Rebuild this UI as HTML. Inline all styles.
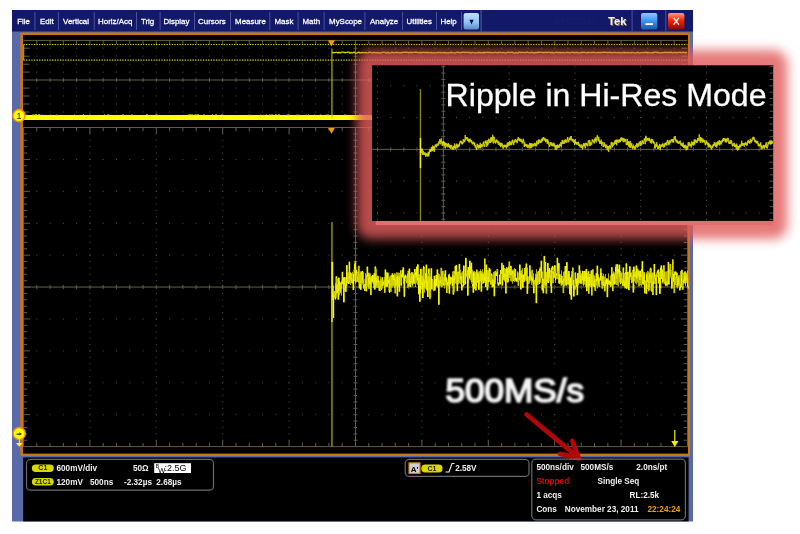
<!DOCTYPE html><html><head><meta charset="utf-8"><style>html,body{margin:0;padding:0;width:800px;height:534px;overflow:hidden;background:#fff}</style></head><body><svg width="800" height="534" viewBox="0 0 800 534" style="position:absolute;left:0;top:0;filter:blur(0.5px)">
<defs>
<linearGradient id="gdrop" x1="0" y1="0" x2="0" y2="1"><stop offset="0" stop-color="#c4e0fc"/><stop offset="0.6" stop-color="#88c0f4"/><stop offset="1" stop-color="#5a88c0"/></linearGradient>
<linearGradient id="gmin" x1="0" y1="0" x2="0" y2="1"><stop offset="0" stop-color="#90c8ff"/><stop offset="0.5" stop-color="#3a94f0"/><stop offset="1" stop-color="#2058a8"/></linearGradient>
<linearGradient id="gclose" x1="0" y1="0" x2="0" y2="1"><stop offset="0" stop-color="#ff9a88"/><stop offset="0.45" stop-color="#f02808"/><stop offset="1" stop-color="#900800"/></linearGradient>
<filter id="blur1" x="-50%" y="-50%" width="200%" height="200%"><feGaussianBlur stdDeviation="5.5"/></filter>
<filter id="soft" x="-10%" y="-30%" width="120%" height="160%"><feGaussianBlur stdDeviation="0.6"/></filter>
<filter id="glowtxt" x="-10%" y="-30%" width="120%" height="160%"><feGaussianBlur in="SourceGraphic" stdDeviation="0.9"/></filter>
</defs>
<rect x="0" y="0" width="800" height="534" fill="#ffffff"/>
<rect x="12" y="31" width="681" height="490.5" fill="#5a6aa8"/>
<rect x="20.3" y="32.5" width="669.7" height="423.4" rx="1.5" fill="#c97510"/>
<rect x="23" y="35" width="665" height="418.6" fill="#000"/>
<rect x="23.2" y="457.4" width="665.4" height="64" fill="#000"/>
<rect x="12" y="10" width="681" height="21.5" fill="#131968"/>
<rect x="34.4" y="12" width="1" height="18" fill="#4a52a0"/>
<rect x="57.9" y="12" width="1" height="18" fill="#4a52a0"/>
<rect x="93.7" y="12" width="1" height="18" fill="#4a52a0"/>
<rect x="136" y="12" width="1" height="18" fill="#4a52a0"/>
<rect x="159.6" y="12" width="1" height="18" fill="#4a52a0"/>
<rect x="194" y="12" width="1" height="18" fill="#4a52a0"/>
<rect x="230" y="12" width="1" height="18" fill="#4a52a0"/>
<rect x="269.3" y="12" width="1" height="18" fill="#4a52a0"/>
<rect x="297.6" y="12" width="1" height="18" fill="#4a52a0"/>
<rect x="323.6" y="12" width="1" height="18" fill="#4a52a0"/>
<rect x="364.4" y="12" width="1" height="18" fill="#4a52a0"/>
<rect x="402" y="12" width="1" height="18" fill="#4a52a0"/>
<rect x="436" y="12" width="1" height="18" fill="#4a52a0"/>
<rect x="461" y="12" width="1" height="18" fill="#4a52a0"/>
<text x="17.3" y="23.8" font-family="Liberation Sans" font-size="7.9" fill="#ffffff" stroke="#ffffff" stroke-width="0.28">File</text>
<text x="40" y="23.8" font-family="Liberation Sans" font-size="7.9" fill="#ffffff" stroke="#ffffff" stroke-width="0.28">Edit</text>
<text x="63.1" y="23.8" font-family="Liberation Sans" font-size="7.9" fill="#ffffff" stroke="#ffffff" stroke-width="0.28">Vertical</text>
<text x="98.1" y="23.8" font-family="Liberation Sans" font-size="7.9" fill="#ffffff" stroke="#ffffff" stroke-width="0.28">Horiz/Acq</text>
<text x="140.9" y="23.8" font-family="Liberation Sans" font-size="7.9" fill="#ffffff" stroke="#ffffff" stroke-width="0.28">Trig</text>
<text x="163.5" y="23.8" font-family="Liberation Sans" font-size="7.9" fill="#ffffff" stroke="#ffffff" stroke-width="0.28">Display</text>
<text x="198.1" y="23.8" font-family="Liberation Sans" font-size="7.9" fill="#ffffff" stroke="#ffffff" stroke-width="0.28">Cursors</text>
<text x="235.1" y="23.8" font-family="Liberation Sans" font-size="7.9" fill="#ffffff" stroke="#ffffff" stroke-width="0.28">Measure</text>
<text x="274.5" y="23.8" font-family="Liberation Sans" font-size="7.9" fill="#ffffff" stroke="#ffffff" stroke-width="0.28">Mask</text>
<text x="302.5" y="23.8" font-family="Liberation Sans" font-size="7.9" fill="#ffffff" stroke="#ffffff" stroke-width="0.28">Math</text>
<text x="329.1" y="23.8" font-family="Liberation Sans" font-size="7.9" fill="#ffffff" stroke="#ffffff" stroke-width="0.28">MyScope</text>
<text x="370.1" y="23.8" font-family="Liberation Sans" font-size="7.9" fill="#ffffff" stroke="#ffffff" stroke-width="0.28">Analyze</text>
<text x="406.5" y="23.8" font-family="Liberation Sans" font-size="7.9" fill="#ffffff" stroke="#ffffff" stroke-width="0.28">Utilities</text>
<text x="440.5" y="23.8" font-family="Liberation Sans" font-size="7.9" fill="#ffffff" stroke="#ffffff" stroke-width="0.28">Help</text>
<rect x="463.6" y="13" width="15.4" height="16.6" rx="2" fill="url(#gdrop)"/>
<path d="M469.4 19.8 L473.6 19.8 L471.5 24.4 Z" fill="#000050"/>
<rect x="480.6" y="10" width="1" height="21.5" fill="#5a60a8"/>
<text x="554.5" y="24.2" font-family="Liberation Sans" font-size="9.5" font-weight="bold" fill="#171d6c" textLength="43" lengthAdjust="spacingAndGlyphs">DPO7354C</text>
<text x="608.9" y="25.6" font-family="Liberation Sans" font-size="11.2" font-weight="bold" fill="#8a7050">Tek</text>
<text x="608" y="24.7" font-family="Liberation Sans" font-size="11.2" font-weight="bold" fill="#f4f4f4">Tek</text>
<rect x="631.6" y="10" width="1" height="21.5" fill="#4a52a0"/>
<rect x="665.3" y="10" width="1" height="21.5" fill="#4a52a0"/>
<rect x="641" y="12.9" width="16.3" height="16.5" rx="2" fill="url(#gmin)"/>
<rect x="645.5" y="23.2" width="7.5" height="1.8" fill="#fff"/>
<rect x="668" y="12.9" width="16.4" height="16.5" rx="2" fill="url(#gclose)"/>
<path d="M673.6 17.8 L678.8 24.6 M678.8 17.8 L673.6 24.6" stroke="#fff" stroke-width="1.3"/>
<g fill="#625d4b">
<rect x="23.5" y="39.9" width="664.0" height="1"/>
<rect x="23.5" y="79.5" width="664.0" height="1"/>
<rect x="36.28" y="40.4" width="1" height="3.5"/>
<rect x="36.28" y="78" width="1" height="4"/>
<rect x="36.28" y="47.7" width="1" height="1" fill="#57533f"/>
<rect x="36.28" y="55.7" width="1" height="1" fill="#57533f"/>
<rect x="36.28" y="63.7" width="1" height="1" fill="#57533f"/>
<rect x="36.28" y="71.6" width="1" height="1" fill="#57533f"/>
<rect x="36.28" y="87.6" width="1" height="1" fill="#57533f"/>
<rect x="36.28" y="95.5" width="1" height="1" fill="#57533f"/>
<rect x="36.28" y="103.5" width="1" height="1" fill="#57533f"/>
<rect x="36.28" y="111.5" width="1" height="1" fill="#57533f"/>
<rect x="49.56" y="40.4" width="1" height="3.5"/>
<rect x="49.56" y="78" width="1" height="4"/>
<rect x="49.56" y="47.7" width="1" height="1" fill="#57533f"/>
<rect x="49.56" y="55.7" width="1" height="1" fill="#57533f"/>
<rect x="49.56" y="63.7" width="1" height="1" fill="#57533f"/>
<rect x="49.56" y="71.6" width="1" height="1" fill="#57533f"/>
<rect x="49.56" y="87.6" width="1" height="1" fill="#57533f"/>
<rect x="49.56" y="95.5" width="1" height="1" fill="#57533f"/>
<rect x="49.56" y="103.5" width="1" height="1" fill="#57533f"/>
<rect x="49.56" y="111.5" width="1" height="1" fill="#57533f"/>
<rect x="62.84" y="40.4" width="1" height="3.5"/>
<rect x="62.84" y="78" width="1" height="4"/>
<rect x="62.84" y="47.7" width="1" height="1" fill="#57533f"/>
<rect x="62.84" y="55.7" width="1" height="1" fill="#57533f"/>
<rect x="62.84" y="63.7" width="1" height="1" fill="#57533f"/>
<rect x="62.84" y="71.6" width="1" height="1" fill="#57533f"/>
<rect x="62.84" y="87.6" width="1" height="1" fill="#57533f"/>
<rect x="62.84" y="95.5" width="1" height="1" fill="#57533f"/>
<rect x="62.84" y="103.5" width="1" height="1" fill="#57533f"/>
<rect x="62.84" y="111.5" width="1" height="1" fill="#57533f"/>
<rect x="76.12" y="40.4" width="1" height="3.5"/>
<rect x="76.12" y="78" width="1" height="4"/>
<rect x="76.12" y="47.7" width="1" height="1" fill="#57533f"/>
<rect x="76.12" y="55.7" width="1" height="1" fill="#57533f"/>
<rect x="76.12" y="63.7" width="1" height="1" fill="#57533f"/>
<rect x="76.12" y="71.6" width="1" height="1" fill="#57533f"/>
<rect x="76.12" y="87.6" width="1" height="1" fill="#57533f"/>
<rect x="76.12" y="95.5" width="1" height="1" fill="#57533f"/>
<rect x="76.12" y="103.5" width="1" height="1" fill="#57533f"/>
<rect x="76.12" y="111.5" width="1" height="1" fill="#57533f"/>
<rect x="89.4" y="40.4" width="1" height="5"/>
<rect x="89.4" y="78" width="1" height="4"/>
<rect x="89.4" y="47.7" width="1" height="1" fill="#57533f"/>
<rect x="89.4" y="55.7" width="1" height="1" fill="#57533f"/>
<rect x="89.4" y="63.7" width="1" height="1" fill="#57533f"/>
<rect x="89.4" y="71.6" width="1" height="1" fill="#57533f"/>
<rect x="89.4" y="87.6" width="1" height="1" fill="#57533f"/>
<rect x="89.4" y="95.5" width="1" height="1" fill="#57533f"/>
<rect x="89.4" y="103.5" width="1" height="1" fill="#57533f"/>
<rect x="89.4" y="111.5" width="1" height="1" fill="#57533f"/>
<rect x="102.68" y="40.4" width="1" height="3.5"/>
<rect x="102.68" y="78" width="1" height="4"/>
<rect x="102.68" y="47.7" width="1" height="1" fill="#57533f"/>
<rect x="102.68" y="55.7" width="1" height="1" fill="#57533f"/>
<rect x="102.68" y="63.7" width="1" height="1" fill="#57533f"/>
<rect x="102.68" y="71.6" width="1" height="1" fill="#57533f"/>
<rect x="102.68" y="87.6" width="1" height="1" fill="#57533f"/>
<rect x="102.68" y="95.5" width="1" height="1" fill="#57533f"/>
<rect x="102.68" y="103.5" width="1" height="1" fill="#57533f"/>
<rect x="102.68" y="111.5" width="1" height="1" fill="#57533f"/>
<rect x="115.96" y="40.4" width="1" height="3.5"/>
<rect x="115.96" y="78" width="1" height="4"/>
<rect x="115.96" y="47.7" width="1" height="1" fill="#57533f"/>
<rect x="115.96" y="55.7" width="1" height="1" fill="#57533f"/>
<rect x="115.96" y="63.7" width="1" height="1" fill="#57533f"/>
<rect x="115.96" y="71.6" width="1" height="1" fill="#57533f"/>
<rect x="115.96" y="87.6" width="1" height="1" fill="#57533f"/>
<rect x="115.96" y="95.5" width="1" height="1" fill="#57533f"/>
<rect x="115.96" y="103.5" width="1" height="1" fill="#57533f"/>
<rect x="115.96" y="111.5" width="1" height="1" fill="#57533f"/>
<rect x="129.24" y="40.4" width="1" height="3.5"/>
<rect x="129.24" y="78" width="1" height="4"/>
<rect x="129.24" y="47.7" width="1" height="1" fill="#57533f"/>
<rect x="129.24" y="55.7" width="1" height="1" fill="#57533f"/>
<rect x="129.24" y="63.7" width="1" height="1" fill="#57533f"/>
<rect x="129.24" y="71.6" width="1" height="1" fill="#57533f"/>
<rect x="129.24" y="87.6" width="1" height="1" fill="#57533f"/>
<rect x="129.24" y="95.5" width="1" height="1" fill="#57533f"/>
<rect x="129.24" y="103.5" width="1" height="1" fill="#57533f"/>
<rect x="129.24" y="111.5" width="1" height="1" fill="#57533f"/>
<rect x="142.52" y="40.4" width="1" height="3.5"/>
<rect x="142.52" y="78" width="1" height="4"/>
<rect x="142.52" y="47.7" width="1" height="1" fill="#57533f"/>
<rect x="142.52" y="55.7" width="1" height="1" fill="#57533f"/>
<rect x="142.52" y="63.7" width="1" height="1" fill="#57533f"/>
<rect x="142.52" y="71.6" width="1" height="1" fill="#57533f"/>
<rect x="142.52" y="87.6" width="1" height="1" fill="#57533f"/>
<rect x="142.52" y="95.5" width="1" height="1" fill="#57533f"/>
<rect x="142.52" y="103.5" width="1" height="1" fill="#57533f"/>
<rect x="142.52" y="111.5" width="1" height="1" fill="#57533f"/>
<rect x="155.8" y="40.4" width="1" height="5"/>
<rect x="155.8" y="78" width="1" height="4"/>
<rect x="155.8" y="47.7" width="1" height="1" fill="#57533f"/>
<rect x="155.8" y="55.7" width="1" height="1" fill="#57533f"/>
<rect x="155.8" y="63.7" width="1" height="1" fill="#57533f"/>
<rect x="155.8" y="71.6" width="1" height="1" fill="#57533f"/>
<rect x="155.8" y="87.6" width="1" height="1" fill="#57533f"/>
<rect x="155.8" y="95.5" width="1" height="1" fill="#57533f"/>
<rect x="155.8" y="103.5" width="1" height="1" fill="#57533f"/>
<rect x="155.8" y="111.5" width="1" height="1" fill="#57533f"/>
<rect x="169.08" y="40.4" width="1" height="3.5"/>
<rect x="169.08" y="78" width="1" height="4"/>
<rect x="169.08" y="47.7" width="1" height="1" fill="#57533f"/>
<rect x="169.08" y="55.7" width="1" height="1" fill="#57533f"/>
<rect x="169.08" y="63.7" width="1" height="1" fill="#57533f"/>
<rect x="169.08" y="71.6" width="1" height="1" fill="#57533f"/>
<rect x="169.08" y="87.6" width="1" height="1" fill="#57533f"/>
<rect x="169.08" y="95.5" width="1" height="1" fill="#57533f"/>
<rect x="169.08" y="103.5" width="1" height="1" fill="#57533f"/>
<rect x="169.08" y="111.5" width="1" height="1" fill="#57533f"/>
<rect x="182.36" y="40.4" width="1" height="3.5"/>
<rect x="182.36" y="78" width="1" height="4"/>
<rect x="182.36" y="47.7" width="1" height="1" fill="#57533f"/>
<rect x="182.36" y="55.7" width="1" height="1" fill="#57533f"/>
<rect x="182.36" y="63.7" width="1" height="1" fill="#57533f"/>
<rect x="182.36" y="71.6" width="1" height="1" fill="#57533f"/>
<rect x="182.36" y="87.6" width="1" height="1" fill="#57533f"/>
<rect x="182.36" y="95.5" width="1" height="1" fill="#57533f"/>
<rect x="182.36" y="103.5" width="1" height="1" fill="#57533f"/>
<rect x="182.36" y="111.5" width="1" height="1" fill="#57533f"/>
<rect x="195.64" y="40.4" width="1" height="3.5"/>
<rect x="195.64" y="78" width="1" height="4"/>
<rect x="195.64" y="47.7" width="1" height="1" fill="#57533f"/>
<rect x="195.64" y="55.7" width="1" height="1" fill="#57533f"/>
<rect x="195.64" y="63.7" width="1" height="1" fill="#57533f"/>
<rect x="195.64" y="71.6" width="1" height="1" fill="#57533f"/>
<rect x="195.64" y="87.6" width="1" height="1" fill="#57533f"/>
<rect x="195.64" y="95.5" width="1" height="1" fill="#57533f"/>
<rect x="195.64" y="103.5" width="1" height="1" fill="#57533f"/>
<rect x="195.64" y="111.5" width="1" height="1" fill="#57533f"/>
<rect x="208.92" y="40.4" width="1" height="3.5"/>
<rect x="208.92" y="78" width="1" height="4"/>
<rect x="208.92" y="47.7" width="1" height="1" fill="#57533f"/>
<rect x="208.92" y="55.7" width="1" height="1" fill="#57533f"/>
<rect x="208.92" y="63.7" width="1" height="1" fill="#57533f"/>
<rect x="208.92" y="71.6" width="1" height="1" fill="#57533f"/>
<rect x="208.92" y="87.6" width="1" height="1" fill="#57533f"/>
<rect x="208.92" y="95.5" width="1" height="1" fill="#57533f"/>
<rect x="208.92" y="103.5" width="1" height="1" fill="#57533f"/>
<rect x="208.92" y="111.5" width="1" height="1" fill="#57533f"/>
<rect x="222.2" y="40.4" width="1" height="5"/>
<rect x="222.2" y="78" width="1" height="4"/>
<rect x="222.2" y="47.7" width="1" height="1" fill="#57533f"/>
<rect x="222.2" y="55.7" width="1" height="1" fill="#57533f"/>
<rect x="222.2" y="63.7" width="1" height="1" fill="#57533f"/>
<rect x="222.2" y="71.6" width="1" height="1" fill="#57533f"/>
<rect x="222.2" y="87.6" width="1" height="1" fill="#57533f"/>
<rect x="222.2" y="95.5" width="1" height="1" fill="#57533f"/>
<rect x="222.2" y="103.5" width="1" height="1" fill="#57533f"/>
<rect x="222.2" y="111.5" width="1" height="1" fill="#57533f"/>
<rect x="235.48" y="40.4" width="1" height="3.5"/>
<rect x="235.48" y="78" width="1" height="4"/>
<rect x="235.48" y="47.7" width="1" height="1" fill="#57533f"/>
<rect x="235.48" y="55.7" width="1" height="1" fill="#57533f"/>
<rect x="235.48" y="63.7" width="1" height="1" fill="#57533f"/>
<rect x="235.48" y="71.6" width="1" height="1" fill="#57533f"/>
<rect x="235.48" y="87.6" width="1" height="1" fill="#57533f"/>
<rect x="235.48" y="95.5" width="1" height="1" fill="#57533f"/>
<rect x="235.48" y="103.5" width="1" height="1" fill="#57533f"/>
<rect x="235.48" y="111.5" width="1" height="1" fill="#57533f"/>
<rect x="248.76" y="40.4" width="1" height="3.5"/>
<rect x="248.76" y="78" width="1" height="4"/>
<rect x="248.76" y="47.7" width="1" height="1" fill="#57533f"/>
<rect x="248.76" y="55.7" width="1" height="1" fill="#57533f"/>
<rect x="248.76" y="63.7" width="1" height="1" fill="#57533f"/>
<rect x="248.76" y="71.6" width="1" height="1" fill="#57533f"/>
<rect x="248.76" y="87.6" width="1" height="1" fill="#57533f"/>
<rect x="248.76" y="95.5" width="1" height="1" fill="#57533f"/>
<rect x="248.76" y="103.5" width="1" height="1" fill="#57533f"/>
<rect x="248.76" y="111.5" width="1" height="1" fill="#57533f"/>
<rect x="262.04" y="40.4" width="1" height="3.5"/>
<rect x="262.04" y="78" width="1" height="4"/>
<rect x="262.04" y="47.7" width="1" height="1" fill="#57533f"/>
<rect x="262.04" y="55.7" width="1" height="1" fill="#57533f"/>
<rect x="262.04" y="63.7" width="1" height="1" fill="#57533f"/>
<rect x="262.04" y="71.6" width="1" height="1" fill="#57533f"/>
<rect x="262.04" y="87.6" width="1" height="1" fill="#57533f"/>
<rect x="262.04" y="95.5" width="1" height="1" fill="#57533f"/>
<rect x="262.04" y="103.5" width="1" height="1" fill="#57533f"/>
<rect x="262.04" y="111.5" width="1" height="1" fill="#57533f"/>
<rect x="275.32" y="40.4" width="1" height="3.5"/>
<rect x="275.32" y="78" width="1" height="4"/>
<rect x="275.32" y="47.7" width="1" height="1" fill="#57533f"/>
<rect x="275.32" y="55.7" width="1" height="1" fill="#57533f"/>
<rect x="275.32" y="63.7" width="1" height="1" fill="#57533f"/>
<rect x="275.32" y="71.6" width="1" height="1" fill="#57533f"/>
<rect x="275.32" y="87.6" width="1" height="1" fill="#57533f"/>
<rect x="275.32" y="95.5" width="1" height="1" fill="#57533f"/>
<rect x="275.32" y="103.5" width="1" height="1" fill="#57533f"/>
<rect x="275.32" y="111.5" width="1" height="1" fill="#57533f"/>
<rect x="288.6" y="40.4" width="1" height="5"/>
<rect x="288.6" y="78" width="1" height="4"/>
<rect x="288.6" y="47.7" width="1" height="1" fill="#57533f"/>
<rect x="288.6" y="55.7" width="1" height="1" fill="#57533f"/>
<rect x="288.6" y="63.7" width="1" height="1" fill="#57533f"/>
<rect x="288.6" y="71.6" width="1" height="1" fill="#57533f"/>
<rect x="288.6" y="87.6" width="1" height="1" fill="#57533f"/>
<rect x="288.6" y="95.5" width="1" height="1" fill="#57533f"/>
<rect x="288.6" y="103.5" width="1" height="1" fill="#57533f"/>
<rect x="288.6" y="111.5" width="1" height="1" fill="#57533f"/>
<rect x="301.88" y="40.4" width="1" height="3.5"/>
<rect x="301.88" y="78" width="1" height="4"/>
<rect x="301.88" y="47.7" width="1" height="1" fill="#57533f"/>
<rect x="301.88" y="55.7" width="1" height="1" fill="#57533f"/>
<rect x="301.88" y="63.7" width="1" height="1" fill="#57533f"/>
<rect x="301.88" y="71.6" width="1" height="1" fill="#57533f"/>
<rect x="301.88" y="87.6" width="1" height="1" fill="#57533f"/>
<rect x="301.88" y="95.5" width="1" height="1" fill="#57533f"/>
<rect x="301.88" y="103.5" width="1" height="1" fill="#57533f"/>
<rect x="301.88" y="111.5" width="1" height="1" fill="#57533f"/>
<rect x="315.16" y="40.4" width="1" height="3.5"/>
<rect x="315.16" y="78" width="1" height="4"/>
<rect x="315.16" y="47.7" width="1" height="1" fill="#57533f"/>
<rect x="315.16" y="55.7" width="1" height="1" fill="#57533f"/>
<rect x="315.16" y="63.7" width="1" height="1" fill="#57533f"/>
<rect x="315.16" y="71.6" width="1" height="1" fill="#57533f"/>
<rect x="315.16" y="87.6" width="1" height="1" fill="#57533f"/>
<rect x="315.16" y="95.5" width="1" height="1" fill="#57533f"/>
<rect x="315.16" y="103.5" width="1" height="1" fill="#57533f"/>
<rect x="315.16" y="111.5" width="1" height="1" fill="#57533f"/>
<rect x="328.44" y="40.4" width="1" height="3.5"/>
<rect x="328.44" y="78" width="1" height="4"/>
<rect x="328.44" y="47.7" width="1" height="1" fill="#57533f"/>
<rect x="328.44" y="55.7" width="1" height="1" fill="#57533f"/>
<rect x="328.44" y="63.7" width="1" height="1" fill="#57533f"/>
<rect x="328.44" y="71.6" width="1" height="1" fill="#57533f"/>
<rect x="328.44" y="87.6" width="1" height="1" fill="#57533f"/>
<rect x="328.44" y="95.5" width="1" height="1" fill="#57533f"/>
<rect x="328.44" y="103.5" width="1" height="1" fill="#57533f"/>
<rect x="328.44" y="111.5" width="1" height="1" fill="#57533f"/>
<rect x="341.72" y="40.4" width="1" height="3.5"/>
<rect x="341.72" y="78" width="1" height="4"/>
<rect x="341.72" y="47.7" width="1" height="1" fill="#57533f"/>
<rect x="341.72" y="55.7" width="1" height="1" fill="#57533f"/>
<rect x="341.72" y="63.7" width="1" height="1" fill="#57533f"/>
<rect x="341.72" y="71.6" width="1" height="1" fill="#57533f"/>
<rect x="341.72" y="87.6" width="1" height="1" fill="#57533f"/>
<rect x="341.72" y="95.5" width="1" height="1" fill="#57533f"/>
<rect x="341.72" y="103.5" width="1" height="1" fill="#57533f"/>
<rect x="341.72" y="111.5" width="1" height="1" fill="#57533f"/>
<rect x="355" y="40.4" width="1" height="5"/>
<rect x="355" y="78" width="1" height="4"/>
<rect x="355" y="47.7" width="1" height="1" fill="#57533f"/>
<rect x="355" y="55.7" width="1" height="1" fill="#57533f"/>
<rect x="355" y="63.7" width="1" height="1" fill="#57533f"/>
<rect x="355" y="71.6" width="1" height="1" fill="#57533f"/>
<rect x="355" y="87.6" width="1" height="1" fill="#57533f"/>
<rect x="355" y="95.5" width="1" height="1" fill="#57533f"/>
<rect x="355" y="103.5" width="1" height="1" fill="#57533f"/>
<rect x="355" y="111.5" width="1" height="1" fill="#57533f"/>
<rect x="368.28" y="40.4" width="1" height="3.5"/>
<rect x="368.28" y="78" width="1" height="4"/>
<rect x="368.28" y="47.7" width="1" height="1" fill="#57533f"/>
<rect x="368.28" y="55.7" width="1" height="1" fill="#57533f"/>
<rect x="368.28" y="63.7" width="1" height="1" fill="#57533f"/>
<rect x="368.28" y="71.6" width="1" height="1" fill="#57533f"/>
<rect x="368.28" y="87.6" width="1" height="1" fill="#57533f"/>
<rect x="368.28" y="95.5" width="1" height="1" fill="#57533f"/>
<rect x="368.28" y="103.5" width="1" height="1" fill="#57533f"/>
<rect x="368.28" y="111.5" width="1" height="1" fill="#57533f"/>
<rect x="381.56" y="40.4" width="1" height="3.5"/>
<rect x="381.56" y="78" width="1" height="4"/>
<rect x="381.56" y="47.7" width="1" height="1" fill="#57533f"/>
<rect x="381.56" y="55.7" width="1" height="1" fill="#57533f"/>
<rect x="381.56" y="63.7" width="1" height="1" fill="#57533f"/>
<rect x="381.56" y="71.6" width="1" height="1" fill="#57533f"/>
<rect x="381.56" y="87.6" width="1" height="1" fill="#57533f"/>
<rect x="381.56" y="95.5" width="1" height="1" fill="#57533f"/>
<rect x="381.56" y="103.5" width="1" height="1" fill="#57533f"/>
<rect x="381.56" y="111.5" width="1" height="1" fill="#57533f"/>
<rect x="394.84" y="40.4" width="1" height="3.5"/>
<rect x="394.84" y="78" width="1" height="4"/>
<rect x="394.84" y="47.7" width="1" height="1" fill="#57533f"/>
<rect x="394.84" y="55.7" width="1" height="1" fill="#57533f"/>
<rect x="394.84" y="63.7" width="1" height="1" fill="#57533f"/>
<rect x="394.84" y="71.6" width="1" height="1" fill="#57533f"/>
<rect x="394.84" y="87.6" width="1" height="1" fill="#57533f"/>
<rect x="394.84" y="95.5" width="1" height="1" fill="#57533f"/>
<rect x="394.84" y="103.5" width="1" height="1" fill="#57533f"/>
<rect x="394.84" y="111.5" width="1" height="1" fill="#57533f"/>
<rect x="408.12" y="40.4" width="1" height="3.5"/>
<rect x="408.12" y="78" width="1" height="4"/>
<rect x="408.12" y="47.7" width="1" height="1" fill="#57533f"/>
<rect x="408.12" y="55.7" width="1" height="1" fill="#57533f"/>
<rect x="408.12" y="63.7" width="1" height="1" fill="#57533f"/>
<rect x="408.12" y="71.6" width="1" height="1" fill="#57533f"/>
<rect x="408.12" y="87.6" width="1" height="1" fill="#57533f"/>
<rect x="408.12" y="95.5" width="1" height="1" fill="#57533f"/>
<rect x="408.12" y="103.5" width="1" height="1" fill="#57533f"/>
<rect x="408.12" y="111.5" width="1" height="1" fill="#57533f"/>
<rect x="421.4" y="40.4" width="1" height="5"/>
<rect x="421.4" y="78" width="1" height="4"/>
<rect x="421.4" y="47.7" width="1" height="1" fill="#57533f"/>
<rect x="421.4" y="55.7" width="1" height="1" fill="#57533f"/>
<rect x="421.4" y="63.7" width="1" height="1" fill="#57533f"/>
<rect x="421.4" y="71.6" width="1" height="1" fill="#57533f"/>
<rect x="421.4" y="87.6" width="1" height="1" fill="#57533f"/>
<rect x="421.4" y="95.5" width="1" height="1" fill="#57533f"/>
<rect x="421.4" y="103.5" width="1" height="1" fill="#57533f"/>
<rect x="421.4" y="111.5" width="1" height="1" fill="#57533f"/>
<rect x="434.68" y="40.4" width="1" height="3.5"/>
<rect x="434.68" y="78" width="1" height="4"/>
<rect x="434.68" y="47.7" width="1" height="1" fill="#57533f"/>
<rect x="434.68" y="55.7" width="1" height="1" fill="#57533f"/>
<rect x="434.68" y="63.7" width="1" height="1" fill="#57533f"/>
<rect x="434.68" y="71.6" width="1" height="1" fill="#57533f"/>
<rect x="434.68" y="87.6" width="1" height="1" fill="#57533f"/>
<rect x="434.68" y="95.5" width="1" height="1" fill="#57533f"/>
<rect x="434.68" y="103.5" width="1" height="1" fill="#57533f"/>
<rect x="434.68" y="111.5" width="1" height="1" fill="#57533f"/>
<rect x="447.96" y="40.4" width="1" height="3.5"/>
<rect x="447.96" y="78" width="1" height="4"/>
<rect x="447.96" y="47.7" width="1" height="1" fill="#57533f"/>
<rect x="447.96" y="55.7" width="1" height="1" fill="#57533f"/>
<rect x="447.96" y="63.7" width="1" height="1" fill="#57533f"/>
<rect x="447.96" y="71.6" width="1" height="1" fill="#57533f"/>
<rect x="447.96" y="87.6" width="1" height="1" fill="#57533f"/>
<rect x="447.96" y="95.5" width="1" height="1" fill="#57533f"/>
<rect x="447.96" y="103.5" width="1" height="1" fill="#57533f"/>
<rect x="447.96" y="111.5" width="1" height="1" fill="#57533f"/>
<rect x="461.24" y="40.4" width="1" height="3.5"/>
<rect x="461.24" y="78" width="1" height="4"/>
<rect x="461.24" y="47.7" width="1" height="1" fill="#57533f"/>
<rect x="461.24" y="55.7" width="1" height="1" fill="#57533f"/>
<rect x="461.24" y="63.7" width="1" height="1" fill="#57533f"/>
<rect x="461.24" y="71.6" width="1" height="1" fill="#57533f"/>
<rect x="461.24" y="87.6" width="1" height="1" fill="#57533f"/>
<rect x="461.24" y="95.5" width="1" height="1" fill="#57533f"/>
<rect x="461.24" y="103.5" width="1" height="1" fill="#57533f"/>
<rect x="461.24" y="111.5" width="1" height="1" fill="#57533f"/>
<rect x="474.52" y="40.4" width="1" height="3.5"/>
<rect x="474.52" y="78" width="1" height="4"/>
<rect x="474.52" y="47.7" width="1" height="1" fill="#57533f"/>
<rect x="474.52" y="55.7" width="1" height="1" fill="#57533f"/>
<rect x="474.52" y="63.7" width="1" height="1" fill="#57533f"/>
<rect x="474.52" y="71.6" width="1" height="1" fill="#57533f"/>
<rect x="474.52" y="87.6" width="1" height="1" fill="#57533f"/>
<rect x="474.52" y="95.5" width="1" height="1" fill="#57533f"/>
<rect x="474.52" y="103.5" width="1" height="1" fill="#57533f"/>
<rect x="474.52" y="111.5" width="1" height="1" fill="#57533f"/>
<rect x="487.8" y="40.4" width="1" height="5"/>
<rect x="487.8" y="78" width="1" height="4"/>
<rect x="487.8" y="47.7" width="1" height="1" fill="#57533f"/>
<rect x="487.8" y="55.7" width="1" height="1" fill="#57533f"/>
<rect x="487.8" y="63.7" width="1" height="1" fill="#57533f"/>
<rect x="487.8" y="71.6" width="1" height="1" fill="#57533f"/>
<rect x="487.8" y="87.6" width="1" height="1" fill="#57533f"/>
<rect x="487.8" y="95.5" width="1" height="1" fill="#57533f"/>
<rect x="487.8" y="103.5" width="1" height="1" fill="#57533f"/>
<rect x="487.8" y="111.5" width="1" height="1" fill="#57533f"/>
<rect x="501.08" y="40.4" width="1" height="3.5"/>
<rect x="501.08" y="78" width="1" height="4"/>
<rect x="501.08" y="47.7" width="1" height="1" fill="#57533f"/>
<rect x="501.08" y="55.7" width="1" height="1" fill="#57533f"/>
<rect x="501.08" y="63.7" width="1" height="1" fill="#57533f"/>
<rect x="501.08" y="71.6" width="1" height="1" fill="#57533f"/>
<rect x="501.08" y="87.6" width="1" height="1" fill="#57533f"/>
<rect x="501.08" y="95.5" width="1" height="1" fill="#57533f"/>
<rect x="501.08" y="103.5" width="1" height="1" fill="#57533f"/>
<rect x="501.08" y="111.5" width="1" height="1" fill="#57533f"/>
<rect x="514.36" y="40.4" width="1" height="3.5"/>
<rect x="514.36" y="78" width="1" height="4"/>
<rect x="514.36" y="47.7" width="1" height="1" fill="#57533f"/>
<rect x="514.36" y="55.7" width="1" height="1" fill="#57533f"/>
<rect x="514.36" y="63.7" width="1" height="1" fill="#57533f"/>
<rect x="514.36" y="71.6" width="1" height="1" fill="#57533f"/>
<rect x="514.36" y="87.6" width="1" height="1" fill="#57533f"/>
<rect x="514.36" y="95.5" width="1" height="1" fill="#57533f"/>
<rect x="514.36" y="103.5" width="1" height="1" fill="#57533f"/>
<rect x="514.36" y="111.5" width="1" height="1" fill="#57533f"/>
<rect x="527.64" y="40.4" width="1" height="3.5"/>
<rect x="527.64" y="78" width="1" height="4"/>
<rect x="527.64" y="47.7" width="1" height="1" fill="#57533f"/>
<rect x="527.64" y="55.7" width="1" height="1" fill="#57533f"/>
<rect x="527.64" y="63.7" width="1" height="1" fill="#57533f"/>
<rect x="527.64" y="71.6" width="1" height="1" fill="#57533f"/>
<rect x="527.64" y="87.6" width="1" height="1" fill="#57533f"/>
<rect x="527.64" y="95.5" width="1" height="1" fill="#57533f"/>
<rect x="527.64" y="103.5" width="1" height="1" fill="#57533f"/>
<rect x="527.64" y="111.5" width="1" height="1" fill="#57533f"/>
<rect x="540.92" y="40.4" width="1" height="3.5"/>
<rect x="540.92" y="78" width="1" height="4"/>
<rect x="540.92" y="47.7" width="1" height="1" fill="#57533f"/>
<rect x="540.92" y="55.7" width="1" height="1" fill="#57533f"/>
<rect x="540.92" y="63.7" width="1" height="1" fill="#57533f"/>
<rect x="540.92" y="71.6" width="1" height="1" fill="#57533f"/>
<rect x="540.92" y="87.6" width="1" height="1" fill="#57533f"/>
<rect x="540.92" y="95.5" width="1" height="1" fill="#57533f"/>
<rect x="540.92" y="103.5" width="1" height="1" fill="#57533f"/>
<rect x="540.92" y="111.5" width="1" height="1" fill="#57533f"/>
<rect x="554.2" y="40.4" width="1" height="5"/>
<rect x="554.2" y="78" width="1" height="4"/>
<rect x="554.2" y="47.7" width="1" height="1" fill="#57533f"/>
<rect x="554.2" y="55.7" width="1" height="1" fill="#57533f"/>
<rect x="554.2" y="63.7" width="1" height="1" fill="#57533f"/>
<rect x="554.2" y="71.6" width="1" height="1" fill="#57533f"/>
<rect x="554.2" y="87.6" width="1" height="1" fill="#57533f"/>
<rect x="554.2" y="95.5" width="1" height="1" fill="#57533f"/>
<rect x="554.2" y="103.5" width="1" height="1" fill="#57533f"/>
<rect x="554.2" y="111.5" width="1" height="1" fill="#57533f"/>
<rect x="567.48" y="40.4" width="1" height="3.5"/>
<rect x="567.48" y="78" width="1" height="4"/>
<rect x="567.48" y="47.7" width="1" height="1" fill="#57533f"/>
<rect x="567.48" y="55.7" width="1" height="1" fill="#57533f"/>
<rect x="567.48" y="63.7" width="1" height="1" fill="#57533f"/>
<rect x="567.48" y="71.6" width="1" height="1" fill="#57533f"/>
<rect x="567.48" y="87.6" width="1" height="1" fill="#57533f"/>
<rect x="567.48" y="95.5" width="1" height="1" fill="#57533f"/>
<rect x="567.48" y="103.5" width="1" height="1" fill="#57533f"/>
<rect x="567.48" y="111.5" width="1" height="1" fill="#57533f"/>
<rect x="580.76" y="40.4" width="1" height="3.5"/>
<rect x="580.76" y="78" width="1" height="4"/>
<rect x="580.76" y="47.7" width="1" height="1" fill="#57533f"/>
<rect x="580.76" y="55.7" width="1" height="1" fill="#57533f"/>
<rect x="580.76" y="63.7" width="1" height="1" fill="#57533f"/>
<rect x="580.76" y="71.6" width="1" height="1" fill="#57533f"/>
<rect x="580.76" y="87.6" width="1" height="1" fill="#57533f"/>
<rect x="580.76" y="95.5" width="1" height="1" fill="#57533f"/>
<rect x="580.76" y="103.5" width="1" height="1" fill="#57533f"/>
<rect x="580.76" y="111.5" width="1" height="1" fill="#57533f"/>
<rect x="594.04" y="40.4" width="1" height="3.5"/>
<rect x="594.04" y="78" width="1" height="4"/>
<rect x="594.04" y="47.7" width="1" height="1" fill="#57533f"/>
<rect x="594.04" y="55.7" width="1" height="1" fill="#57533f"/>
<rect x="594.04" y="63.7" width="1" height="1" fill="#57533f"/>
<rect x="594.04" y="71.6" width="1" height="1" fill="#57533f"/>
<rect x="594.04" y="87.6" width="1" height="1" fill="#57533f"/>
<rect x="594.04" y="95.5" width="1" height="1" fill="#57533f"/>
<rect x="594.04" y="103.5" width="1" height="1" fill="#57533f"/>
<rect x="594.04" y="111.5" width="1" height="1" fill="#57533f"/>
<rect x="607.32" y="40.4" width="1" height="3.5"/>
<rect x="607.32" y="78" width="1" height="4"/>
<rect x="607.32" y="47.7" width="1" height="1" fill="#57533f"/>
<rect x="607.32" y="55.7" width="1" height="1" fill="#57533f"/>
<rect x="607.32" y="63.7" width="1" height="1" fill="#57533f"/>
<rect x="607.32" y="71.6" width="1" height="1" fill="#57533f"/>
<rect x="607.32" y="87.6" width="1" height="1" fill="#57533f"/>
<rect x="607.32" y="95.5" width="1" height="1" fill="#57533f"/>
<rect x="607.32" y="103.5" width="1" height="1" fill="#57533f"/>
<rect x="607.32" y="111.5" width="1" height="1" fill="#57533f"/>
<rect x="620.6" y="40.4" width="1" height="5"/>
<rect x="620.6" y="78" width="1" height="4"/>
<rect x="620.6" y="47.7" width="1" height="1" fill="#57533f"/>
<rect x="620.6" y="55.7" width="1" height="1" fill="#57533f"/>
<rect x="620.6" y="63.7" width="1" height="1" fill="#57533f"/>
<rect x="620.6" y="71.6" width="1" height="1" fill="#57533f"/>
<rect x="620.6" y="87.6" width="1" height="1" fill="#57533f"/>
<rect x="620.6" y="95.5" width="1" height="1" fill="#57533f"/>
<rect x="620.6" y="103.5" width="1" height="1" fill="#57533f"/>
<rect x="620.6" y="111.5" width="1" height="1" fill="#57533f"/>
<rect x="633.88" y="40.4" width="1" height="3.5"/>
<rect x="633.88" y="78" width="1" height="4"/>
<rect x="633.88" y="47.7" width="1" height="1" fill="#57533f"/>
<rect x="633.88" y="55.7" width="1" height="1" fill="#57533f"/>
<rect x="633.88" y="63.7" width="1" height="1" fill="#57533f"/>
<rect x="633.88" y="71.6" width="1" height="1" fill="#57533f"/>
<rect x="633.88" y="87.6" width="1" height="1" fill="#57533f"/>
<rect x="633.88" y="95.5" width="1" height="1" fill="#57533f"/>
<rect x="633.88" y="103.5" width="1" height="1" fill="#57533f"/>
<rect x="633.88" y="111.5" width="1" height="1" fill="#57533f"/>
<rect x="647.16" y="40.4" width="1" height="3.5"/>
<rect x="647.16" y="78" width="1" height="4"/>
<rect x="647.16" y="47.7" width="1" height="1" fill="#57533f"/>
<rect x="647.16" y="55.7" width="1" height="1" fill="#57533f"/>
<rect x="647.16" y="63.7" width="1" height="1" fill="#57533f"/>
<rect x="647.16" y="71.6" width="1" height="1" fill="#57533f"/>
<rect x="647.16" y="87.6" width="1" height="1" fill="#57533f"/>
<rect x="647.16" y="95.5" width="1" height="1" fill="#57533f"/>
<rect x="647.16" y="103.5" width="1" height="1" fill="#57533f"/>
<rect x="647.16" y="111.5" width="1" height="1" fill="#57533f"/>
<rect x="660.44" y="40.4" width="1" height="3.5"/>
<rect x="660.44" y="78" width="1" height="4"/>
<rect x="660.44" y="47.7" width="1" height="1" fill="#57533f"/>
<rect x="660.44" y="55.7" width="1" height="1" fill="#57533f"/>
<rect x="660.44" y="63.7" width="1" height="1" fill="#57533f"/>
<rect x="660.44" y="71.6" width="1" height="1" fill="#57533f"/>
<rect x="660.44" y="87.6" width="1" height="1" fill="#57533f"/>
<rect x="660.44" y="95.5" width="1" height="1" fill="#57533f"/>
<rect x="660.44" y="103.5" width="1" height="1" fill="#57533f"/>
<rect x="660.44" y="111.5" width="1" height="1" fill="#57533f"/>
<rect x="673.72" y="40.4" width="1" height="3.5"/>
<rect x="673.72" y="78" width="1" height="4"/>
<rect x="673.72" y="47.7" width="1" height="1" fill="#57533f"/>
<rect x="673.72" y="55.7" width="1" height="1" fill="#57533f"/>
<rect x="673.72" y="63.7" width="1" height="1" fill="#57533f"/>
<rect x="673.72" y="71.6" width="1" height="1" fill="#57533f"/>
<rect x="673.72" y="87.6" width="1" height="1" fill="#57533f"/>
<rect x="673.72" y="95.5" width="1" height="1" fill="#57533f"/>
<rect x="673.72" y="103.5" width="1" height="1" fill="#57533f"/>
<rect x="673.72" y="111.5" width="1" height="1" fill="#57533f"/>
<rect x="355" y="40.4" width="1" height="80"/>
<rect x="353.5" y="47.7" width="4" height="1"/>
<rect x="23.5" y="47.7" width="6" height="1"/>
<rect x="681.5" y="47.7" width="6" height="1"/>
<rect x="353.5" y="55.7" width="4" height="1"/>
<rect x="23.5" y="55.7" width="6" height="1"/>
<rect x="681.5" y="55.7" width="6" height="1"/>
<rect x="353.5" y="63.7" width="4" height="1"/>
<rect x="23.5" y="63.7" width="6" height="1"/>
<rect x="681.5" y="63.7" width="6" height="1"/>
<rect x="353.5" y="71.6" width="4" height="1"/>
<rect x="23.5" y="71.6" width="6" height="1"/>
<rect x="681.5" y="71.6" width="6" height="1"/>
<rect x="353.5" y="87.6" width="4" height="1"/>
<rect x="23.5" y="87.6" width="6" height="1"/>
<rect x="681.5" y="87.6" width="6" height="1"/>
<rect x="353.5" y="95.5" width="4" height="1"/>
<rect x="23.5" y="95.5" width="6" height="1"/>
<rect x="681.5" y="95.5" width="6" height="1"/>
<rect x="353.5" y="103.5" width="4" height="1"/>
<rect x="23.5" y="103.5" width="6" height="1"/>
<rect x="681.5" y="103.5" width="6" height="1"/>
<rect x="353.5" y="111.5" width="4" height="1"/>
<rect x="23.5" y="111.5" width="6" height="1"/>
<rect x="681.5" y="111.5" width="6" height="1"/>
</g>
<g stroke="#d8d000" stroke-width="1.2" stroke-dasharray="1.3 1.3">
<line x1="23.5" y1="44.5" x2="687.5" y2="44.5"/>
<line x1="23.5" y1="60.1" x2="687.5" y2="60.1"/>
</g>
<rect x="23.2" y="44.5" width="1" height="15.6" fill="#c8c000"/>
<rect x="89.4" y="113.3" width="1" height="2" fill="#625d4b"/>
<rect x="155.8" y="113.3" width="1" height="2" fill="#625d4b"/>
<rect x="222.2" y="113.3" width="1" height="2" fill="#625d4b"/>
<rect x="288.6" y="113.3" width="1" height="2" fill="#625d4b"/>
<rect x="355" y="113.3" width="1" height="2" fill="#625d4b"/>
<rect x="421.4" y="113.3" width="1" height="2" fill="#625d4b"/>
<rect x="487.8" y="113.3" width="1" height="2" fill="#625d4b"/>
<rect x="554.2" y="113.3" width="1" height="2" fill="#625d4b"/>
<rect x="620.6" y="113.3" width="1" height="2" fill="#625d4b"/>
<rect x="23" y="115" width="665" height="5" fill="#ffff00"/>
<rect x="26" y="114.59" width="1" height="1" fill="#d8d800"/>
<rect x="32" y="114.55" width="3" height="1" fill="#d8d800"/>
<rect x="35" y="114.25" width="2" height="1" fill="#d8d800"/>
<rect x="38" y="114.25" width="2" height="1" fill="#d8d800"/>
<rect x="41" y="114.54" width="1" height="1" fill="#d8d800"/>
<rect x="50" y="114.55" width="1" height="1" fill="#d8d800"/>
<rect x="56" y="114.72" width="2" height="1" fill="#d8d800"/>
<rect x="74" y="114.54" width="1" height="1" fill="#d8d800"/>
<rect x="83" y="114.24" width="1" height="1" fill="#d8d800"/>
<rect x="104" y="114.31" width="1" height="1" fill="#d8d800"/>
<rect x="107" y="114.38" width="2" height="1" fill="#d8d800"/>
<rect x="116" y="114.79" width="1" height="1" fill="#d8d800"/>
<rect x="122" y="114.41" width="2" height="1" fill="#d8d800"/>
<rect x="131" y="114.53" width="2" height="1" fill="#d8d800"/>
<rect x="146" y="114.26" width="2" height="1" fill="#d8d800"/>
<rect x="155" y="114.62" width="3" height="1" fill="#d8d800"/>
<rect x="188" y="114.37" width="3" height="1" fill="#d8d800"/>
<rect x="191" y="114.43" width="2" height="1" fill="#d8d800"/>
<rect x="194" y="114.47" width="3" height="1" fill="#d8d800"/>
<rect x="197" y="114.28" width="2" height="1" fill="#d8d800"/>
<rect x="203" y="114.45" width="2" height="1" fill="#d8d800"/>
<rect x="212" y="114.25" width="1" height="1" fill="#d8d800"/>
<rect x="215" y="114.34" width="2" height="1" fill="#d8d800"/>
<rect x="221" y="114.37" width="1" height="1" fill="#d8d800"/>
<rect x="248" y="114.74" width="3" height="1" fill="#d8d800"/>
<rect x="260" y="114.58" width="1" height="1" fill="#d8d800"/>
<rect x="263" y="114.79" width="2" height="1" fill="#d8d800"/>
<rect x="266" y="114.4" width="1" height="1" fill="#d8d800"/>
<rect x="269" y="114.54" width="3" height="1" fill="#d8d800"/>
<rect x="272" y="114.42" width="1" height="1" fill="#d8d800"/>
<rect x="275" y="114.32" width="2" height="1" fill="#d8d800"/>
<rect x="278" y="114.35" width="2" height="1" fill="#d8d800"/>
<rect x="287" y="114.49" width="2" height="1" fill="#d8d800"/>
<rect x="296" y="114.65" width="3" height="1" fill="#d8d800"/>
<rect x="299" y="114.7" width="1" height="1" fill="#d8d800"/>
<rect x="305" y="114.77" width="2" height="1" fill="#d8d800"/>
<rect x="308" y="114.53" width="1" height="1" fill="#d8d800"/>
<rect x="314" y="114.59" width="1" height="1" fill="#d8d800"/>
<rect x="320" y="114.42" width="1" height="1" fill="#d8d800"/>
<rect x="326" y="114.52" width="3" height="1" fill="#d8d800"/>
<rect x="332" y="114.69" width="1" height="1" fill="#d8d800"/>
<rect x="344" y="114.51" width="2" height="1" fill="#d8d800"/>
<rect x="359" y="114.56" width="2" height="1" fill="#d8d800"/>
<rect x="377" y="114.34" width="1" height="1" fill="#d8d800"/>
<rect x="392" y="114.75" width="2" height="1" fill="#d8d800"/>
<rect x="398" y="114.6" width="2" height="1" fill="#d8d800"/>
<rect x="410" y="114.67" width="2" height="1" fill="#d8d800"/>
<rect x="413" y="114.77" width="3" height="1" fill="#d8d800"/>
<rect x="428" y="114.28" width="1" height="1" fill="#d8d800"/>
<rect x="452" y="114.53" width="1" height="1" fill="#d8d800"/>
<rect x="455" y="114.78" width="3" height="1" fill="#d8d800"/>
<rect x="458" y="114.65" width="1" height="1" fill="#d8d800"/>
<rect x="470" y="114.35" width="2" height="1" fill="#d8d800"/>
<rect x="488" y="114.64" width="2" height="1" fill="#d8d800"/>
<rect x="506" y="114.29" width="3" height="1" fill="#d8d800"/>
<rect x="509" y="114.46" width="1" height="1" fill="#d8d800"/>
<rect x="518" y="114.28" width="3" height="1" fill="#d8d800"/>
<rect x="539" y="114.54" width="1" height="1" fill="#d8d800"/>
<rect x="542" y="114.23" width="1" height="1" fill="#d8d800"/>
<rect x="593" y="114.54" width="1" height="1" fill="#d8d800"/>
<rect x="599" y="114.27" width="2" height="1" fill="#d8d800"/>
<rect x="611" y="114.38" width="1" height="1" fill="#d8d800"/>
<rect x="617" y="114.63" width="3" height="1" fill="#d8d800"/>
<rect x="623" y="114.28" width="2" height="1" fill="#d8d800"/>
<rect x="626" y="114.77" width="2" height="1" fill="#d8d800"/>
<rect x="632" y="114.6" width="1" height="1" fill="#d8d800"/>
<rect x="635" y="114.46" width="3" height="1" fill="#d8d800"/>
<rect x="647" y="114.42" width="2" height="1" fill="#d8d800"/>
<rect x="656" y="114.4" width="3" height="1" fill="#d8d800"/>
<rect x="659" y="114.78" width="1" height="1" fill="#d8d800"/>
<rect x="671" y="114.36" width="1" height="1" fill="#d8d800"/>
<rect x="677" y="114.65" width="2" height="1" fill="#d8d800"/>
<rect x="331.4" y="48.5" width="1.1" height="70" fill="#c8c000"/>
<polyline fill="none" stroke="#d8d800" stroke-width="1.3" points="332,52.51 333,52.64 334,52.61 335,52.59 336,52.43 337,52.38 338,52.9 339,52.28 340,53 341,52.37 342,52.12 343,52.19 344,52.36 345,52.71 346,52.32 347,52.36 348,52.22 349,52.11 350,53.09 351,52.52 352,53.02 353,52.72 354,52.14 355,52.81 356,53.04 357,53.07 358,52.36 359,52.28 360,53.03 361,52.73 362,52.63 363,52.31 364,52.55 365,52.77 366,52.37 367,52.9 368,53.09 369,52.14 370,52.12 371,52.61 372,53.08 373,52.61 374,52.35 375,52.55 376,52.76 377,52.75 378,52.76 379,52.65 380,52.99 381,53.07 382,52.41 383,52.32 384,52.33 385,52.3 386,52.98 387,52.83 388,52.24 389,53.09 390,53.08 391,52.94 392,52.11 393,52.73 394,52.98 395,52.53 396,52.16 397,52.77 398,52.48 399,52.61 400,53.07 401,52.7 402,52.79 403,52.15 404,52.29 405,52.37 406,52.1 407,52.46 408,52.43 409,53.08 410,52.42 411,52.13 412,52.98 413,52.32 414,52.28 415,52.44 416,52.18 417,52.38 418,52.76 419,52.35 420,52.88 421,52.19 422,52.92 423,52.24 424,52.69 425,52.49 426,52.4 427,52.73 428,52.18 429,53.06 430,52.95 431,52.26 432,52.99 433,52.88 434,52.7 435,52.86 436,52.82 437,52.59 438,52.38 439,52.72 440,52.24 441,52.92 442,52.82 443,52.61 444,52.53 445,52.8 446,52.61 447,53.01 448,52.85 449,52.67 450,52.91 451,52.12 452,52.79 453,52.9 454,52.81 455,53.06 456,52.74 457,52.19 458,52.14 459,52.74 460,53.06 461,52.48 462,52.55 463,52.15 464,52.12 465,52.63 466,52.34 467,52.36 468,52.56 469,52.17 470,53.03 471,53 472,52.19 473,52.63 474,52.85 475,52.57 476,52.91 477,52.95 478,52.33 479,52.86 480,52.33 481,52.75 482,52.56 483,52.95 484,52.18 485,53.01 486,52.39 487,52.15 488,52.73 489,52.3 490,52.7 491,52.43 492,52.75 493,52.79 494,52.72 495,52.23 496,52.58 497,52.59 498,53.07 499,52.2 500,52.32 501,52.59 502,52.81 503,52.39 504,52.57 505,52.87 506,53.09 507,52.65 508,52.41 509,52.19 510,52.57 511,52.39 512,52.18 513,52.61 514,53.09 515,53.09 516,52.49 517,53.02 518,53.03 519,52.17 520,52.19 521,52.85 522,52.36 523,52.46 524,52.7 525,52.73 526,52.38 527,52.21 528,52.47 529,52.6 530,52.98 531,52.49 532,52.26 533,53.05 534,52.78 535,52.51 536,52.83 537,52.52 538,52.48 539,52.22 540,52.43 541,52.42 542,52.44 543,52.5 544,53.04 545,52.3 546,52.11 547,52.84 548,52.35 549,52.16 550,52.49 551,52.97 552,52.18 553,53.03 554,52.86 555,52.95 556,52.38 557,52.15 558,52.76 559,52.73 560,52.25 561,53.07 562,52.54 563,52.42 564,52.87 565,52.89 566,52.53 567,52.13 568,52.86 569,52.5 570,52.98 571,52.65 572,52.3 573,52.18 574,53.03 575,52.51 576,52.71 577,52.24 578,52.97 579,52.59 580,53.01 581,52.65 582,52.27 583,52.51 584,52.38 585,52.36 586,52.84 587,52.75 588,52.51 589,52.34 590,52.58 591,52.77 592,52.22 593,52.74 594,52.18 595,52.6 596,52.91 597,52.65 598,52.55 599,52.43 600,52.86 601,52.53 602,52.65 603,52.34 604,52.27 605,52.66 606,52.42 607,52.47 608,52.91 609,52.3 610,52.12 611,52.97 612,52.48 613,52.85 614,52.31 615,52.37 616,52.85 617,52.6 618,52.67 619,52.46 620,52.79 621,52.63 622,52.89 623,52.95 624,52.19 625,53 626,52.48 627,52.75 628,52.53 629,52.41 630,52.91 631,53.07 632,52.23 633,52.53 634,52.86 635,52.9 636,53.07 637,52.59 638,52.17 639,53.03 640,53.03 641,52.63 642,52.57 643,52.55 644,52.88 645,52.32 646,52.25 647,53.07 648,52.21 649,52.93 650,52.8 651,52.95 652,52.99 653,52.19 654,52.88 655,52.1 656,52.23 657,52.67 658,52.14 659,52.82 660,53.06 661,52.73 662,52.63 663,52.54 664,52.86 665,52.2 666,52.4 667,53.04 668,52.29 669,52.36 670,52.89 671,52.1 672,52.64 673,53.1 674,52.38 675,52.42 676,52.94 677,52.34 678,52.63 679,52.65 680,52.13 681,52.51 682,52.75 683,52.16 684,52.29 685,52.98 686,52.75 687,52.18"/>
<path d="M328.1 40.2 L335 40.2 L331.5 46.6 Z" fill="#f0a000"/>
<g fill="#625d4b">
<rect x="23.5" y="127" width="664.0" height="1"/>
<rect x="23.5" y="446.1" width="664.0" height="1"/>
<rect x="23.0" y="127.5" width="1" height="319.1"/>
<rect x="687.0" y="127.5" width="1" height="319.1"/>
<rect x="23.5" y="286.55" width="664.0" height="1"/>
<rect x="355" y="127.5" width="1" height="319.1"/>
<rect x="36.28" y="127.5" width="1" height="3.7"/>
<rect x="36.28" y="442.9" width="1" height="3.7"/>
<rect x="36.28" y="285.05" width="1" height="4"/>
<rect x="36.28" y="158.91" width="1" height="1" fill="#57533f"/>
<rect x="36.28" y="190.82" width="1" height="1" fill="#57533f"/>
<rect x="36.28" y="222.73" width="1" height="1" fill="#57533f"/>
<rect x="36.28" y="254.64" width="1" height="1" fill="#57533f"/>
<rect x="36.28" y="318.46" width="1" height="1" fill="#57533f"/>
<rect x="36.28" y="350.37" width="1" height="1" fill="#57533f"/>
<rect x="36.28" y="382.28" width="1" height="1" fill="#57533f"/>
<rect x="36.28" y="414.19" width="1" height="1" fill="#57533f"/>
<rect x="49.56" y="127.5" width="1" height="3.7"/>
<rect x="49.56" y="442.9" width="1" height="3.7"/>
<rect x="49.56" y="285.05" width="1" height="4"/>
<rect x="49.56" y="158.91" width="1" height="1" fill="#57533f"/>
<rect x="49.56" y="190.82" width="1" height="1" fill="#57533f"/>
<rect x="49.56" y="222.73" width="1" height="1" fill="#57533f"/>
<rect x="49.56" y="254.64" width="1" height="1" fill="#57533f"/>
<rect x="49.56" y="318.46" width="1" height="1" fill="#57533f"/>
<rect x="49.56" y="350.37" width="1" height="1" fill="#57533f"/>
<rect x="49.56" y="382.28" width="1" height="1" fill="#57533f"/>
<rect x="49.56" y="414.19" width="1" height="1" fill="#57533f"/>
<rect x="62.84" y="127.5" width="1" height="3.7"/>
<rect x="62.84" y="442.9" width="1" height="3.7"/>
<rect x="62.84" y="285.05" width="1" height="4"/>
<rect x="62.84" y="158.91" width="1" height="1" fill="#57533f"/>
<rect x="62.84" y="190.82" width="1" height="1" fill="#57533f"/>
<rect x="62.84" y="222.73" width="1" height="1" fill="#57533f"/>
<rect x="62.84" y="254.64" width="1" height="1" fill="#57533f"/>
<rect x="62.84" y="318.46" width="1" height="1" fill="#57533f"/>
<rect x="62.84" y="350.37" width="1" height="1" fill="#57533f"/>
<rect x="62.84" y="382.28" width="1" height="1" fill="#57533f"/>
<rect x="62.84" y="414.19" width="1" height="1" fill="#57533f"/>
<rect x="76.12" y="127.5" width="1" height="3.7"/>
<rect x="76.12" y="442.9" width="1" height="3.7"/>
<rect x="76.12" y="285.05" width="1" height="4"/>
<rect x="76.12" y="158.91" width="1" height="1" fill="#57533f"/>
<rect x="76.12" y="190.82" width="1" height="1" fill="#57533f"/>
<rect x="76.12" y="222.73" width="1" height="1" fill="#57533f"/>
<rect x="76.12" y="254.64" width="1" height="1" fill="#57533f"/>
<rect x="76.12" y="318.46" width="1" height="1" fill="#57533f"/>
<rect x="76.12" y="350.37" width="1" height="1" fill="#57533f"/>
<rect x="76.12" y="382.28" width="1" height="1" fill="#57533f"/>
<rect x="76.12" y="414.19" width="1" height="1" fill="#57533f"/>
<rect x="89.4" y="127.5" width="1" height="6.5"/>
<rect x="89.4" y="440.1" width="1" height="6.5"/>
<rect x="89.4" y="285.05" width="1" height="4"/>
<rect x="89.4" y="158.91" width="1" height="1" fill="#57533f"/>
<rect x="89.4" y="190.82" width="1" height="1" fill="#57533f"/>
<rect x="89.4" y="222.73" width="1" height="1" fill="#57533f"/>
<rect x="89.4" y="254.64" width="1" height="1" fill="#57533f"/>
<rect x="89.4" y="318.46" width="1" height="1" fill="#57533f"/>
<rect x="89.4" y="350.37" width="1" height="1" fill="#57533f"/>
<rect x="89.4" y="382.28" width="1" height="1" fill="#57533f"/>
<rect x="89.4" y="414.19" width="1" height="1" fill="#57533f"/>
<rect x="102.68" y="127.5" width="1" height="3.7"/>
<rect x="102.68" y="442.9" width="1" height="3.7"/>
<rect x="102.68" y="285.05" width="1" height="4"/>
<rect x="102.68" y="158.91" width="1" height="1" fill="#57533f"/>
<rect x="102.68" y="190.82" width="1" height="1" fill="#57533f"/>
<rect x="102.68" y="222.73" width="1" height="1" fill="#57533f"/>
<rect x="102.68" y="254.64" width="1" height="1" fill="#57533f"/>
<rect x="102.68" y="318.46" width="1" height="1" fill="#57533f"/>
<rect x="102.68" y="350.37" width="1" height="1" fill="#57533f"/>
<rect x="102.68" y="382.28" width="1" height="1" fill="#57533f"/>
<rect x="102.68" y="414.19" width="1" height="1" fill="#57533f"/>
<rect x="115.96" y="127.5" width="1" height="3.7"/>
<rect x="115.96" y="442.9" width="1" height="3.7"/>
<rect x="115.96" y="285.05" width="1" height="4"/>
<rect x="115.96" y="158.91" width="1" height="1" fill="#57533f"/>
<rect x="115.96" y="190.82" width="1" height="1" fill="#57533f"/>
<rect x="115.96" y="222.73" width="1" height="1" fill="#57533f"/>
<rect x="115.96" y="254.64" width="1" height="1" fill="#57533f"/>
<rect x="115.96" y="318.46" width="1" height="1" fill="#57533f"/>
<rect x="115.96" y="350.37" width="1" height="1" fill="#57533f"/>
<rect x="115.96" y="382.28" width="1" height="1" fill="#57533f"/>
<rect x="115.96" y="414.19" width="1" height="1" fill="#57533f"/>
<rect x="129.24" y="127.5" width="1" height="3.7"/>
<rect x="129.24" y="442.9" width="1" height="3.7"/>
<rect x="129.24" y="285.05" width="1" height="4"/>
<rect x="129.24" y="158.91" width="1" height="1" fill="#57533f"/>
<rect x="129.24" y="190.82" width="1" height="1" fill="#57533f"/>
<rect x="129.24" y="222.73" width="1" height="1" fill="#57533f"/>
<rect x="129.24" y="254.64" width="1" height="1" fill="#57533f"/>
<rect x="129.24" y="318.46" width="1" height="1" fill="#57533f"/>
<rect x="129.24" y="350.37" width="1" height="1" fill="#57533f"/>
<rect x="129.24" y="382.28" width="1" height="1" fill="#57533f"/>
<rect x="129.24" y="414.19" width="1" height="1" fill="#57533f"/>
<rect x="142.52" y="127.5" width="1" height="3.7"/>
<rect x="142.52" y="442.9" width="1" height="3.7"/>
<rect x="142.52" y="285.05" width="1" height="4"/>
<rect x="142.52" y="158.91" width="1" height="1" fill="#57533f"/>
<rect x="142.52" y="190.82" width="1" height="1" fill="#57533f"/>
<rect x="142.52" y="222.73" width="1" height="1" fill="#57533f"/>
<rect x="142.52" y="254.64" width="1" height="1" fill="#57533f"/>
<rect x="142.52" y="318.46" width="1" height="1" fill="#57533f"/>
<rect x="142.52" y="350.37" width="1" height="1" fill="#57533f"/>
<rect x="142.52" y="382.28" width="1" height="1" fill="#57533f"/>
<rect x="142.52" y="414.19" width="1" height="1" fill="#57533f"/>
<rect x="155.8" y="127.5" width="1" height="6.5"/>
<rect x="155.8" y="440.1" width="1" height="6.5"/>
<rect x="155.8" y="285.05" width="1" height="4"/>
<rect x="155.8" y="158.91" width="1" height="1" fill="#57533f"/>
<rect x="155.8" y="190.82" width="1" height="1" fill="#57533f"/>
<rect x="155.8" y="222.73" width="1" height="1" fill="#57533f"/>
<rect x="155.8" y="254.64" width="1" height="1" fill="#57533f"/>
<rect x="155.8" y="318.46" width="1" height="1" fill="#57533f"/>
<rect x="155.8" y="350.37" width="1" height="1" fill="#57533f"/>
<rect x="155.8" y="382.28" width="1" height="1" fill="#57533f"/>
<rect x="155.8" y="414.19" width="1" height="1" fill="#57533f"/>
<rect x="169.08" y="127.5" width="1" height="3.7"/>
<rect x="169.08" y="442.9" width="1" height="3.7"/>
<rect x="169.08" y="285.05" width="1" height="4"/>
<rect x="169.08" y="158.91" width="1" height="1" fill="#57533f"/>
<rect x="169.08" y="190.82" width="1" height="1" fill="#57533f"/>
<rect x="169.08" y="222.73" width="1" height="1" fill="#57533f"/>
<rect x="169.08" y="254.64" width="1" height="1" fill="#57533f"/>
<rect x="169.08" y="318.46" width="1" height="1" fill="#57533f"/>
<rect x="169.08" y="350.37" width="1" height="1" fill="#57533f"/>
<rect x="169.08" y="382.28" width="1" height="1" fill="#57533f"/>
<rect x="169.08" y="414.19" width="1" height="1" fill="#57533f"/>
<rect x="182.36" y="127.5" width="1" height="3.7"/>
<rect x="182.36" y="442.9" width="1" height="3.7"/>
<rect x="182.36" y="285.05" width="1" height="4"/>
<rect x="182.36" y="158.91" width="1" height="1" fill="#57533f"/>
<rect x="182.36" y="190.82" width="1" height="1" fill="#57533f"/>
<rect x="182.36" y="222.73" width="1" height="1" fill="#57533f"/>
<rect x="182.36" y="254.64" width="1" height="1" fill="#57533f"/>
<rect x="182.36" y="318.46" width="1" height="1" fill="#57533f"/>
<rect x="182.36" y="350.37" width="1" height="1" fill="#57533f"/>
<rect x="182.36" y="382.28" width="1" height="1" fill="#57533f"/>
<rect x="182.36" y="414.19" width="1" height="1" fill="#57533f"/>
<rect x="195.64" y="127.5" width="1" height="3.7"/>
<rect x="195.64" y="442.9" width="1" height="3.7"/>
<rect x="195.64" y="285.05" width="1" height="4"/>
<rect x="195.64" y="158.91" width="1" height="1" fill="#57533f"/>
<rect x="195.64" y="190.82" width="1" height="1" fill="#57533f"/>
<rect x="195.64" y="222.73" width="1" height="1" fill="#57533f"/>
<rect x="195.64" y="254.64" width="1" height="1" fill="#57533f"/>
<rect x="195.64" y="318.46" width="1" height="1" fill="#57533f"/>
<rect x="195.64" y="350.37" width="1" height="1" fill="#57533f"/>
<rect x="195.64" y="382.28" width="1" height="1" fill="#57533f"/>
<rect x="195.64" y="414.19" width="1" height="1" fill="#57533f"/>
<rect x="208.92" y="127.5" width="1" height="3.7"/>
<rect x="208.92" y="442.9" width="1" height="3.7"/>
<rect x="208.92" y="285.05" width="1" height="4"/>
<rect x="208.92" y="158.91" width="1" height="1" fill="#57533f"/>
<rect x="208.92" y="190.82" width="1" height="1" fill="#57533f"/>
<rect x="208.92" y="222.73" width="1" height="1" fill="#57533f"/>
<rect x="208.92" y="254.64" width="1" height="1" fill="#57533f"/>
<rect x="208.92" y="318.46" width="1" height="1" fill="#57533f"/>
<rect x="208.92" y="350.37" width="1" height="1" fill="#57533f"/>
<rect x="208.92" y="382.28" width="1" height="1" fill="#57533f"/>
<rect x="208.92" y="414.19" width="1" height="1" fill="#57533f"/>
<rect x="222.2" y="127.5" width="1" height="6.5"/>
<rect x="222.2" y="440.1" width="1" height="6.5"/>
<rect x="222.2" y="285.05" width="1" height="4"/>
<rect x="222.2" y="158.91" width="1" height="1" fill="#57533f"/>
<rect x="222.2" y="190.82" width="1" height="1" fill="#57533f"/>
<rect x="222.2" y="222.73" width="1" height="1" fill="#57533f"/>
<rect x="222.2" y="254.64" width="1" height="1" fill="#57533f"/>
<rect x="222.2" y="318.46" width="1" height="1" fill="#57533f"/>
<rect x="222.2" y="350.37" width="1" height="1" fill="#57533f"/>
<rect x="222.2" y="382.28" width="1" height="1" fill="#57533f"/>
<rect x="222.2" y="414.19" width="1" height="1" fill="#57533f"/>
<rect x="235.48" y="127.5" width="1" height="3.7"/>
<rect x="235.48" y="442.9" width="1" height="3.7"/>
<rect x="235.48" y="285.05" width="1" height="4"/>
<rect x="235.48" y="158.91" width="1" height="1" fill="#57533f"/>
<rect x="235.48" y="190.82" width="1" height="1" fill="#57533f"/>
<rect x="235.48" y="222.73" width="1" height="1" fill="#57533f"/>
<rect x="235.48" y="254.64" width="1" height="1" fill="#57533f"/>
<rect x="235.48" y="318.46" width="1" height="1" fill="#57533f"/>
<rect x="235.48" y="350.37" width="1" height="1" fill="#57533f"/>
<rect x="235.48" y="382.28" width="1" height="1" fill="#57533f"/>
<rect x="235.48" y="414.19" width="1" height="1" fill="#57533f"/>
<rect x="248.76" y="127.5" width="1" height="3.7"/>
<rect x="248.76" y="442.9" width="1" height="3.7"/>
<rect x="248.76" y="285.05" width="1" height="4"/>
<rect x="248.76" y="158.91" width="1" height="1" fill="#57533f"/>
<rect x="248.76" y="190.82" width="1" height="1" fill="#57533f"/>
<rect x="248.76" y="222.73" width="1" height="1" fill="#57533f"/>
<rect x="248.76" y="254.64" width="1" height="1" fill="#57533f"/>
<rect x="248.76" y="318.46" width="1" height="1" fill="#57533f"/>
<rect x="248.76" y="350.37" width="1" height="1" fill="#57533f"/>
<rect x="248.76" y="382.28" width="1" height="1" fill="#57533f"/>
<rect x="248.76" y="414.19" width="1" height="1" fill="#57533f"/>
<rect x="262.04" y="127.5" width="1" height="3.7"/>
<rect x="262.04" y="442.9" width="1" height="3.7"/>
<rect x="262.04" y="285.05" width="1" height="4"/>
<rect x="262.04" y="158.91" width="1" height="1" fill="#57533f"/>
<rect x="262.04" y="190.82" width="1" height="1" fill="#57533f"/>
<rect x="262.04" y="222.73" width="1" height="1" fill="#57533f"/>
<rect x="262.04" y="254.64" width="1" height="1" fill="#57533f"/>
<rect x="262.04" y="318.46" width="1" height="1" fill="#57533f"/>
<rect x="262.04" y="350.37" width="1" height="1" fill="#57533f"/>
<rect x="262.04" y="382.28" width="1" height="1" fill="#57533f"/>
<rect x="262.04" y="414.19" width="1" height="1" fill="#57533f"/>
<rect x="275.32" y="127.5" width="1" height="3.7"/>
<rect x="275.32" y="442.9" width="1" height="3.7"/>
<rect x="275.32" y="285.05" width="1" height="4"/>
<rect x="275.32" y="158.91" width="1" height="1" fill="#57533f"/>
<rect x="275.32" y="190.82" width="1" height="1" fill="#57533f"/>
<rect x="275.32" y="222.73" width="1" height="1" fill="#57533f"/>
<rect x="275.32" y="254.64" width="1" height="1" fill="#57533f"/>
<rect x="275.32" y="318.46" width="1" height="1" fill="#57533f"/>
<rect x="275.32" y="350.37" width="1" height="1" fill="#57533f"/>
<rect x="275.32" y="382.28" width="1" height="1" fill="#57533f"/>
<rect x="275.32" y="414.19" width="1" height="1" fill="#57533f"/>
<rect x="288.6" y="127.5" width="1" height="6.5"/>
<rect x="288.6" y="440.1" width="1" height="6.5"/>
<rect x="288.6" y="285.05" width="1" height="4"/>
<rect x="288.6" y="158.91" width="1" height="1" fill="#57533f"/>
<rect x="288.6" y="190.82" width="1" height="1" fill="#57533f"/>
<rect x="288.6" y="222.73" width="1" height="1" fill="#57533f"/>
<rect x="288.6" y="254.64" width="1" height="1" fill="#57533f"/>
<rect x="288.6" y="318.46" width="1" height="1" fill="#57533f"/>
<rect x="288.6" y="350.37" width="1" height="1" fill="#57533f"/>
<rect x="288.6" y="382.28" width="1" height="1" fill="#57533f"/>
<rect x="288.6" y="414.19" width="1" height="1" fill="#57533f"/>
<rect x="301.88" y="127.5" width="1" height="3.7"/>
<rect x="301.88" y="442.9" width="1" height="3.7"/>
<rect x="301.88" y="285.05" width="1" height="4"/>
<rect x="301.88" y="158.91" width="1" height="1" fill="#57533f"/>
<rect x="301.88" y="190.82" width="1" height="1" fill="#57533f"/>
<rect x="301.88" y="222.73" width="1" height="1" fill="#57533f"/>
<rect x="301.88" y="254.64" width="1" height="1" fill="#57533f"/>
<rect x="301.88" y="318.46" width="1" height="1" fill="#57533f"/>
<rect x="301.88" y="350.37" width="1" height="1" fill="#57533f"/>
<rect x="301.88" y="382.28" width="1" height="1" fill="#57533f"/>
<rect x="301.88" y="414.19" width="1" height="1" fill="#57533f"/>
<rect x="315.16" y="127.5" width="1" height="3.7"/>
<rect x="315.16" y="442.9" width="1" height="3.7"/>
<rect x="315.16" y="285.05" width="1" height="4"/>
<rect x="315.16" y="158.91" width="1" height="1" fill="#57533f"/>
<rect x="315.16" y="190.82" width="1" height="1" fill="#57533f"/>
<rect x="315.16" y="222.73" width="1" height="1" fill="#57533f"/>
<rect x="315.16" y="254.64" width="1" height="1" fill="#57533f"/>
<rect x="315.16" y="318.46" width="1" height="1" fill="#57533f"/>
<rect x="315.16" y="350.37" width="1" height="1" fill="#57533f"/>
<rect x="315.16" y="382.28" width="1" height="1" fill="#57533f"/>
<rect x="315.16" y="414.19" width="1" height="1" fill="#57533f"/>
<rect x="328.44" y="127.5" width="1" height="3.7"/>
<rect x="328.44" y="442.9" width="1" height="3.7"/>
<rect x="328.44" y="285.05" width="1" height="4"/>
<rect x="328.44" y="158.91" width="1" height="1" fill="#57533f"/>
<rect x="328.44" y="190.82" width="1" height="1" fill="#57533f"/>
<rect x="328.44" y="222.73" width="1" height="1" fill="#57533f"/>
<rect x="328.44" y="254.64" width="1" height="1" fill="#57533f"/>
<rect x="328.44" y="318.46" width="1" height="1" fill="#57533f"/>
<rect x="328.44" y="350.37" width="1" height="1" fill="#57533f"/>
<rect x="328.44" y="382.28" width="1" height="1" fill="#57533f"/>
<rect x="328.44" y="414.19" width="1" height="1" fill="#57533f"/>
<rect x="341.72" y="127.5" width="1" height="3.7"/>
<rect x="341.72" y="442.9" width="1" height="3.7"/>
<rect x="341.72" y="285.05" width="1" height="4"/>
<rect x="341.72" y="158.91" width="1" height="1" fill="#57533f"/>
<rect x="341.72" y="190.82" width="1" height="1" fill="#57533f"/>
<rect x="341.72" y="222.73" width="1" height="1" fill="#57533f"/>
<rect x="341.72" y="254.64" width="1" height="1" fill="#57533f"/>
<rect x="341.72" y="318.46" width="1" height="1" fill="#57533f"/>
<rect x="341.72" y="350.37" width="1" height="1" fill="#57533f"/>
<rect x="341.72" y="382.28" width="1" height="1" fill="#57533f"/>
<rect x="341.72" y="414.19" width="1" height="1" fill="#57533f"/>
<rect x="355" y="127.5" width="1" height="6.5"/>
<rect x="355" y="440.1" width="1" height="6.5"/>
<rect x="355" y="285.05" width="1" height="4"/>
<rect x="355" y="158.91" width="1" height="1" fill="#57533f"/>
<rect x="355" y="190.82" width="1" height="1" fill="#57533f"/>
<rect x="355" y="222.73" width="1" height="1" fill="#57533f"/>
<rect x="355" y="254.64" width="1" height="1" fill="#57533f"/>
<rect x="355" y="318.46" width="1" height="1" fill="#57533f"/>
<rect x="355" y="350.37" width="1" height="1" fill="#57533f"/>
<rect x="355" y="382.28" width="1" height="1" fill="#57533f"/>
<rect x="355" y="414.19" width="1" height="1" fill="#57533f"/>
<rect x="368.28" y="127.5" width="1" height="3.7"/>
<rect x="368.28" y="442.9" width="1" height="3.7"/>
<rect x="368.28" y="285.05" width="1" height="4"/>
<rect x="368.28" y="158.91" width="1" height="1" fill="#57533f"/>
<rect x="368.28" y="190.82" width="1" height="1" fill="#57533f"/>
<rect x="368.28" y="222.73" width="1" height="1" fill="#57533f"/>
<rect x="368.28" y="254.64" width="1" height="1" fill="#57533f"/>
<rect x="368.28" y="318.46" width="1" height="1" fill="#57533f"/>
<rect x="368.28" y="350.37" width="1" height="1" fill="#57533f"/>
<rect x="368.28" y="382.28" width="1" height="1" fill="#57533f"/>
<rect x="368.28" y="414.19" width="1" height="1" fill="#57533f"/>
<rect x="381.56" y="127.5" width="1" height="3.7"/>
<rect x="381.56" y="442.9" width="1" height="3.7"/>
<rect x="381.56" y="285.05" width="1" height="4"/>
<rect x="381.56" y="158.91" width="1" height="1" fill="#57533f"/>
<rect x="381.56" y="190.82" width="1" height="1" fill="#57533f"/>
<rect x="381.56" y="222.73" width="1" height="1" fill="#57533f"/>
<rect x="381.56" y="254.64" width="1" height="1" fill="#57533f"/>
<rect x="381.56" y="318.46" width="1" height="1" fill="#57533f"/>
<rect x="381.56" y="350.37" width="1" height="1" fill="#57533f"/>
<rect x="381.56" y="382.28" width="1" height="1" fill="#57533f"/>
<rect x="381.56" y="414.19" width="1" height="1" fill="#57533f"/>
<rect x="394.84" y="127.5" width="1" height="3.7"/>
<rect x="394.84" y="442.9" width="1" height="3.7"/>
<rect x="394.84" y="285.05" width="1" height="4"/>
<rect x="394.84" y="158.91" width="1" height="1" fill="#57533f"/>
<rect x="394.84" y="190.82" width="1" height="1" fill="#57533f"/>
<rect x="394.84" y="222.73" width="1" height="1" fill="#57533f"/>
<rect x="394.84" y="254.64" width="1" height="1" fill="#57533f"/>
<rect x="394.84" y="318.46" width="1" height="1" fill="#57533f"/>
<rect x="394.84" y="350.37" width="1" height="1" fill="#57533f"/>
<rect x="394.84" y="382.28" width="1" height="1" fill="#57533f"/>
<rect x="394.84" y="414.19" width="1" height="1" fill="#57533f"/>
<rect x="408.12" y="127.5" width="1" height="3.7"/>
<rect x="408.12" y="442.9" width="1" height="3.7"/>
<rect x="408.12" y="285.05" width="1" height="4"/>
<rect x="408.12" y="158.91" width="1" height="1" fill="#57533f"/>
<rect x="408.12" y="190.82" width="1" height="1" fill="#57533f"/>
<rect x="408.12" y="222.73" width="1" height="1" fill="#57533f"/>
<rect x="408.12" y="254.64" width="1" height="1" fill="#57533f"/>
<rect x="408.12" y="318.46" width="1" height="1" fill="#57533f"/>
<rect x="408.12" y="350.37" width="1" height="1" fill="#57533f"/>
<rect x="408.12" y="382.28" width="1" height="1" fill="#57533f"/>
<rect x="408.12" y="414.19" width="1" height="1" fill="#57533f"/>
<rect x="421.4" y="127.5" width="1" height="6.5"/>
<rect x="421.4" y="440.1" width="1" height="6.5"/>
<rect x="421.4" y="285.05" width="1" height="4"/>
<rect x="421.4" y="158.91" width="1" height="1" fill="#57533f"/>
<rect x="421.4" y="190.82" width="1" height="1" fill="#57533f"/>
<rect x="421.4" y="222.73" width="1" height="1" fill="#57533f"/>
<rect x="421.4" y="254.64" width="1" height="1" fill="#57533f"/>
<rect x="421.4" y="318.46" width="1" height="1" fill="#57533f"/>
<rect x="421.4" y="350.37" width="1" height="1" fill="#57533f"/>
<rect x="421.4" y="382.28" width="1" height="1" fill="#57533f"/>
<rect x="421.4" y="414.19" width="1" height="1" fill="#57533f"/>
<rect x="434.68" y="127.5" width="1" height="3.7"/>
<rect x="434.68" y="442.9" width="1" height="3.7"/>
<rect x="434.68" y="285.05" width="1" height="4"/>
<rect x="434.68" y="158.91" width="1" height="1" fill="#57533f"/>
<rect x="434.68" y="190.82" width="1" height="1" fill="#57533f"/>
<rect x="434.68" y="222.73" width="1" height="1" fill="#57533f"/>
<rect x="434.68" y="254.64" width="1" height="1" fill="#57533f"/>
<rect x="434.68" y="318.46" width="1" height="1" fill="#57533f"/>
<rect x="434.68" y="350.37" width="1" height="1" fill="#57533f"/>
<rect x="434.68" y="382.28" width="1" height="1" fill="#57533f"/>
<rect x="434.68" y="414.19" width="1" height="1" fill="#57533f"/>
<rect x="447.96" y="127.5" width="1" height="3.7"/>
<rect x="447.96" y="442.9" width="1" height="3.7"/>
<rect x="447.96" y="285.05" width="1" height="4"/>
<rect x="447.96" y="158.91" width="1" height="1" fill="#57533f"/>
<rect x="447.96" y="190.82" width="1" height="1" fill="#57533f"/>
<rect x="447.96" y="222.73" width="1" height="1" fill="#57533f"/>
<rect x="447.96" y="254.64" width="1" height="1" fill="#57533f"/>
<rect x="447.96" y="318.46" width="1" height="1" fill="#57533f"/>
<rect x="447.96" y="350.37" width="1" height="1" fill="#57533f"/>
<rect x="447.96" y="382.28" width="1" height="1" fill="#57533f"/>
<rect x="447.96" y="414.19" width="1" height="1" fill="#57533f"/>
<rect x="461.24" y="127.5" width="1" height="3.7"/>
<rect x="461.24" y="442.9" width="1" height="3.7"/>
<rect x="461.24" y="285.05" width="1" height="4"/>
<rect x="461.24" y="158.91" width="1" height="1" fill="#57533f"/>
<rect x="461.24" y="190.82" width="1" height="1" fill="#57533f"/>
<rect x="461.24" y="222.73" width="1" height="1" fill="#57533f"/>
<rect x="461.24" y="254.64" width="1" height="1" fill="#57533f"/>
<rect x="461.24" y="318.46" width="1" height="1" fill="#57533f"/>
<rect x="461.24" y="350.37" width="1" height="1" fill="#57533f"/>
<rect x="461.24" y="382.28" width="1" height="1" fill="#57533f"/>
<rect x="461.24" y="414.19" width="1" height="1" fill="#57533f"/>
<rect x="474.52" y="127.5" width="1" height="3.7"/>
<rect x="474.52" y="442.9" width="1" height="3.7"/>
<rect x="474.52" y="285.05" width="1" height="4"/>
<rect x="474.52" y="158.91" width="1" height="1" fill="#57533f"/>
<rect x="474.52" y="190.82" width="1" height="1" fill="#57533f"/>
<rect x="474.52" y="222.73" width="1" height="1" fill="#57533f"/>
<rect x="474.52" y="254.64" width="1" height="1" fill="#57533f"/>
<rect x="474.52" y="318.46" width="1" height="1" fill="#57533f"/>
<rect x="474.52" y="350.37" width="1" height="1" fill="#57533f"/>
<rect x="474.52" y="382.28" width="1" height="1" fill="#57533f"/>
<rect x="474.52" y="414.19" width="1" height="1" fill="#57533f"/>
<rect x="487.8" y="127.5" width="1" height="6.5"/>
<rect x="487.8" y="440.1" width="1" height="6.5"/>
<rect x="487.8" y="285.05" width="1" height="4"/>
<rect x="487.8" y="158.91" width="1" height="1" fill="#57533f"/>
<rect x="487.8" y="190.82" width="1" height="1" fill="#57533f"/>
<rect x="487.8" y="222.73" width="1" height="1" fill="#57533f"/>
<rect x="487.8" y="254.64" width="1" height="1" fill="#57533f"/>
<rect x="487.8" y="318.46" width="1" height="1" fill="#57533f"/>
<rect x="487.8" y="350.37" width="1" height="1" fill="#57533f"/>
<rect x="487.8" y="382.28" width="1" height="1" fill="#57533f"/>
<rect x="487.8" y="414.19" width="1" height="1" fill="#57533f"/>
<rect x="501.08" y="127.5" width="1" height="3.7"/>
<rect x="501.08" y="442.9" width="1" height="3.7"/>
<rect x="501.08" y="285.05" width="1" height="4"/>
<rect x="501.08" y="158.91" width="1" height="1" fill="#57533f"/>
<rect x="501.08" y="190.82" width="1" height="1" fill="#57533f"/>
<rect x="501.08" y="222.73" width="1" height="1" fill="#57533f"/>
<rect x="501.08" y="254.64" width="1" height="1" fill="#57533f"/>
<rect x="501.08" y="318.46" width="1" height="1" fill="#57533f"/>
<rect x="501.08" y="350.37" width="1" height="1" fill="#57533f"/>
<rect x="501.08" y="382.28" width="1" height="1" fill="#57533f"/>
<rect x="501.08" y="414.19" width="1" height="1" fill="#57533f"/>
<rect x="514.36" y="127.5" width="1" height="3.7"/>
<rect x="514.36" y="442.9" width="1" height="3.7"/>
<rect x="514.36" y="285.05" width="1" height="4"/>
<rect x="514.36" y="158.91" width="1" height="1" fill="#57533f"/>
<rect x="514.36" y="190.82" width="1" height="1" fill="#57533f"/>
<rect x="514.36" y="222.73" width="1" height="1" fill="#57533f"/>
<rect x="514.36" y="254.64" width="1" height="1" fill="#57533f"/>
<rect x="514.36" y="318.46" width="1" height="1" fill="#57533f"/>
<rect x="514.36" y="350.37" width="1" height="1" fill="#57533f"/>
<rect x="514.36" y="382.28" width="1" height="1" fill="#57533f"/>
<rect x="514.36" y="414.19" width="1" height="1" fill="#57533f"/>
<rect x="527.64" y="127.5" width="1" height="3.7"/>
<rect x="527.64" y="442.9" width="1" height="3.7"/>
<rect x="527.64" y="285.05" width="1" height="4"/>
<rect x="527.64" y="158.91" width="1" height="1" fill="#57533f"/>
<rect x="527.64" y="190.82" width="1" height="1" fill="#57533f"/>
<rect x="527.64" y="222.73" width="1" height="1" fill="#57533f"/>
<rect x="527.64" y="254.64" width="1" height="1" fill="#57533f"/>
<rect x="527.64" y="318.46" width="1" height="1" fill="#57533f"/>
<rect x="527.64" y="350.37" width="1" height="1" fill="#57533f"/>
<rect x="527.64" y="382.28" width="1" height="1" fill="#57533f"/>
<rect x="527.64" y="414.19" width="1" height="1" fill="#57533f"/>
<rect x="540.92" y="127.5" width="1" height="3.7"/>
<rect x="540.92" y="442.9" width="1" height="3.7"/>
<rect x="540.92" y="285.05" width="1" height="4"/>
<rect x="540.92" y="158.91" width="1" height="1" fill="#57533f"/>
<rect x="540.92" y="190.82" width="1" height="1" fill="#57533f"/>
<rect x="540.92" y="222.73" width="1" height="1" fill="#57533f"/>
<rect x="540.92" y="254.64" width="1" height="1" fill="#57533f"/>
<rect x="540.92" y="318.46" width="1" height="1" fill="#57533f"/>
<rect x="540.92" y="350.37" width="1" height="1" fill="#57533f"/>
<rect x="540.92" y="382.28" width="1" height="1" fill="#57533f"/>
<rect x="540.92" y="414.19" width="1" height="1" fill="#57533f"/>
<rect x="554.2" y="127.5" width="1" height="6.5"/>
<rect x="554.2" y="440.1" width="1" height="6.5"/>
<rect x="554.2" y="285.05" width="1" height="4"/>
<rect x="554.2" y="158.91" width="1" height="1" fill="#57533f"/>
<rect x="554.2" y="190.82" width="1" height="1" fill="#57533f"/>
<rect x="554.2" y="222.73" width="1" height="1" fill="#57533f"/>
<rect x="554.2" y="254.64" width="1" height="1" fill="#57533f"/>
<rect x="554.2" y="318.46" width="1" height="1" fill="#57533f"/>
<rect x="554.2" y="350.37" width="1" height="1" fill="#57533f"/>
<rect x="554.2" y="382.28" width="1" height="1" fill="#57533f"/>
<rect x="554.2" y="414.19" width="1" height="1" fill="#57533f"/>
<rect x="567.48" y="127.5" width="1" height="3.7"/>
<rect x="567.48" y="442.9" width="1" height="3.7"/>
<rect x="567.48" y="285.05" width="1" height="4"/>
<rect x="567.48" y="158.91" width="1" height="1" fill="#57533f"/>
<rect x="567.48" y="190.82" width="1" height="1" fill="#57533f"/>
<rect x="567.48" y="222.73" width="1" height="1" fill="#57533f"/>
<rect x="567.48" y="254.64" width="1" height="1" fill="#57533f"/>
<rect x="567.48" y="318.46" width="1" height="1" fill="#57533f"/>
<rect x="567.48" y="350.37" width="1" height="1" fill="#57533f"/>
<rect x="567.48" y="382.28" width="1" height="1" fill="#57533f"/>
<rect x="567.48" y="414.19" width="1" height="1" fill="#57533f"/>
<rect x="580.76" y="127.5" width="1" height="3.7"/>
<rect x="580.76" y="442.9" width="1" height="3.7"/>
<rect x="580.76" y="285.05" width="1" height="4"/>
<rect x="580.76" y="158.91" width="1" height="1" fill="#57533f"/>
<rect x="580.76" y="190.82" width="1" height="1" fill="#57533f"/>
<rect x="580.76" y="222.73" width="1" height="1" fill="#57533f"/>
<rect x="580.76" y="254.64" width="1" height="1" fill="#57533f"/>
<rect x="580.76" y="318.46" width="1" height="1" fill="#57533f"/>
<rect x="580.76" y="350.37" width="1" height="1" fill="#57533f"/>
<rect x="580.76" y="382.28" width="1" height="1" fill="#57533f"/>
<rect x="580.76" y="414.19" width="1" height="1" fill="#57533f"/>
<rect x="594.04" y="127.5" width="1" height="3.7"/>
<rect x="594.04" y="442.9" width="1" height="3.7"/>
<rect x="594.04" y="285.05" width="1" height="4"/>
<rect x="594.04" y="158.91" width="1" height="1" fill="#57533f"/>
<rect x="594.04" y="190.82" width="1" height="1" fill="#57533f"/>
<rect x="594.04" y="222.73" width="1" height="1" fill="#57533f"/>
<rect x="594.04" y="254.64" width="1" height="1" fill="#57533f"/>
<rect x="594.04" y="318.46" width="1" height="1" fill="#57533f"/>
<rect x="594.04" y="350.37" width="1" height="1" fill="#57533f"/>
<rect x="594.04" y="382.28" width="1" height="1" fill="#57533f"/>
<rect x="594.04" y="414.19" width="1" height="1" fill="#57533f"/>
<rect x="607.32" y="127.5" width="1" height="3.7"/>
<rect x="607.32" y="442.9" width="1" height="3.7"/>
<rect x="607.32" y="285.05" width="1" height="4"/>
<rect x="607.32" y="158.91" width="1" height="1" fill="#57533f"/>
<rect x="607.32" y="190.82" width="1" height="1" fill="#57533f"/>
<rect x="607.32" y="222.73" width="1" height="1" fill="#57533f"/>
<rect x="607.32" y="254.64" width="1" height="1" fill="#57533f"/>
<rect x="607.32" y="318.46" width="1" height="1" fill="#57533f"/>
<rect x="607.32" y="350.37" width="1" height="1" fill="#57533f"/>
<rect x="607.32" y="382.28" width="1" height="1" fill="#57533f"/>
<rect x="607.32" y="414.19" width="1" height="1" fill="#57533f"/>
<rect x="620.6" y="127.5" width="1" height="6.5"/>
<rect x="620.6" y="440.1" width="1" height="6.5"/>
<rect x="620.6" y="285.05" width="1" height="4"/>
<rect x="620.6" y="158.91" width="1" height="1" fill="#57533f"/>
<rect x="620.6" y="190.82" width="1" height="1" fill="#57533f"/>
<rect x="620.6" y="222.73" width="1" height="1" fill="#57533f"/>
<rect x="620.6" y="254.64" width="1" height="1" fill="#57533f"/>
<rect x="620.6" y="318.46" width="1" height="1" fill="#57533f"/>
<rect x="620.6" y="350.37" width="1" height="1" fill="#57533f"/>
<rect x="620.6" y="382.28" width="1" height="1" fill="#57533f"/>
<rect x="620.6" y="414.19" width="1" height="1" fill="#57533f"/>
<rect x="633.88" y="127.5" width="1" height="3.7"/>
<rect x="633.88" y="442.9" width="1" height="3.7"/>
<rect x="633.88" y="285.05" width="1" height="4"/>
<rect x="633.88" y="158.91" width="1" height="1" fill="#57533f"/>
<rect x="633.88" y="190.82" width="1" height="1" fill="#57533f"/>
<rect x="633.88" y="222.73" width="1" height="1" fill="#57533f"/>
<rect x="633.88" y="254.64" width="1" height="1" fill="#57533f"/>
<rect x="633.88" y="318.46" width="1" height="1" fill="#57533f"/>
<rect x="633.88" y="350.37" width="1" height="1" fill="#57533f"/>
<rect x="633.88" y="382.28" width="1" height="1" fill="#57533f"/>
<rect x="633.88" y="414.19" width="1" height="1" fill="#57533f"/>
<rect x="647.16" y="127.5" width="1" height="3.7"/>
<rect x="647.16" y="442.9" width="1" height="3.7"/>
<rect x="647.16" y="285.05" width="1" height="4"/>
<rect x="647.16" y="158.91" width="1" height="1" fill="#57533f"/>
<rect x="647.16" y="190.82" width="1" height="1" fill="#57533f"/>
<rect x="647.16" y="222.73" width="1" height="1" fill="#57533f"/>
<rect x="647.16" y="254.64" width="1" height="1" fill="#57533f"/>
<rect x="647.16" y="318.46" width="1" height="1" fill="#57533f"/>
<rect x="647.16" y="350.37" width="1" height="1" fill="#57533f"/>
<rect x="647.16" y="382.28" width="1" height="1" fill="#57533f"/>
<rect x="647.16" y="414.19" width="1" height="1" fill="#57533f"/>
<rect x="660.44" y="127.5" width="1" height="3.7"/>
<rect x="660.44" y="442.9" width="1" height="3.7"/>
<rect x="660.44" y="285.05" width="1" height="4"/>
<rect x="660.44" y="158.91" width="1" height="1" fill="#57533f"/>
<rect x="660.44" y="190.82" width="1" height="1" fill="#57533f"/>
<rect x="660.44" y="222.73" width="1" height="1" fill="#57533f"/>
<rect x="660.44" y="254.64" width="1" height="1" fill="#57533f"/>
<rect x="660.44" y="318.46" width="1" height="1" fill="#57533f"/>
<rect x="660.44" y="350.37" width="1" height="1" fill="#57533f"/>
<rect x="660.44" y="382.28" width="1" height="1" fill="#57533f"/>
<rect x="660.44" y="414.19" width="1" height="1" fill="#57533f"/>
<rect x="673.72" y="127.5" width="1" height="3.7"/>
<rect x="673.72" y="442.9" width="1" height="3.7"/>
<rect x="673.72" y="285.05" width="1" height="4"/>
<rect x="673.72" y="158.91" width="1" height="1" fill="#57533f"/>
<rect x="673.72" y="190.82" width="1" height="1" fill="#57533f"/>
<rect x="673.72" y="222.73" width="1" height="1" fill="#57533f"/>
<rect x="673.72" y="254.64" width="1" height="1" fill="#57533f"/>
<rect x="673.72" y="318.46" width="1" height="1" fill="#57533f"/>
<rect x="673.72" y="350.37" width="1" height="1" fill="#57533f"/>
<rect x="673.72" y="382.28" width="1" height="1" fill="#57533f"/>
<rect x="673.72" y="414.19" width="1" height="1" fill="#57533f"/>
<rect x="23.5" y="133.38" width="3.7" height="1"/>
<rect x="683.8" y="133.38" width="3.7" height="1"/>
<rect x="353.5" y="133.38" width="4" height="1"/>
<rect x="89.4" y="133.38" width="1" height="1" fill="#57533f"/>
<rect x="155.8" y="133.38" width="1" height="1" fill="#57533f"/>
<rect x="222.2" y="133.38" width="1" height="1" fill="#57533f"/>
<rect x="288.6" y="133.38" width="1" height="1" fill="#57533f"/>
<rect x="421.4" y="133.38" width="1" height="1" fill="#57533f"/>
<rect x="487.8" y="133.38" width="1" height="1" fill="#57533f"/>
<rect x="554.2" y="133.38" width="1" height="1" fill="#57533f"/>
<rect x="620.6" y="133.38" width="1" height="1" fill="#57533f"/>
<rect x="23.5" y="139.76" width="3.7" height="1"/>
<rect x="683.8" y="139.76" width="3.7" height="1"/>
<rect x="353.5" y="139.76" width="4" height="1"/>
<rect x="89.4" y="139.76" width="1" height="1" fill="#57533f"/>
<rect x="155.8" y="139.76" width="1" height="1" fill="#57533f"/>
<rect x="222.2" y="139.76" width="1" height="1" fill="#57533f"/>
<rect x="288.6" y="139.76" width="1" height="1" fill="#57533f"/>
<rect x="421.4" y="139.76" width="1" height="1" fill="#57533f"/>
<rect x="487.8" y="139.76" width="1" height="1" fill="#57533f"/>
<rect x="554.2" y="139.76" width="1" height="1" fill="#57533f"/>
<rect x="620.6" y="139.76" width="1" height="1" fill="#57533f"/>
<rect x="23.5" y="146.15" width="3.7" height="1"/>
<rect x="683.8" y="146.15" width="3.7" height="1"/>
<rect x="353.5" y="146.15" width="4" height="1"/>
<rect x="89.4" y="146.15" width="1" height="1" fill="#57533f"/>
<rect x="155.8" y="146.15" width="1" height="1" fill="#57533f"/>
<rect x="222.2" y="146.15" width="1" height="1" fill="#57533f"/>
<rect x="288.6" y="146.15" width="1" height="1" fill="#57533f"/>
<rect x="421.4" y="146.15" width="1" height="1" fill="#57533f"/>
<rect x="487.8" y="146.15" width="1" height="1" fill="#57533f"/>
<rect x="554.2" y="146.15" width="1" height="1" fill="#57533f"/>
<rect x="620.6" y="146.15" width="1" height="1" fill="#57533f"/>
<rect x="23.5" y="152.53" width="3.7" height="1"/>
<rect x="683.8" y="152.53" width="3.7" height="1"/>
<rect x="353.5" y="152.53" width="4" height="1"/>
<rect x="89.4" y="152.53" width="1" height="1" fill="#57533f"/>
<rect x="155.8" y="152.53" width="1" height="1" fill="#57533f"/>
<rect x="222.2" y="152.53" width="1" height="1" fill="#57533f"/>
<rect x="288.6" y="152.53" width="1" height="1" fill="#57533f"/>
<rect x="421.4" y="152.53" width="1" height="1" fill="#57533f"/>
<rect x="487.8" y="152.53" width="1" height="1" fill="#57533f"/>
<rect x="554.2" y="152.53" width="1" height="1" fill="#57533f"/>
<rect x="620.6" y="152.53" width="1" height="1" fill="#57533f"/>
<rect x="23.5" y="158.91" width="6.5" height="1"/>
<rect x="681" y="158.91" width="6.5" height="1"/>
<rect x="353.5" y="158.91" width="4" height="1"/>
<rect x="89.4" y="158.91" width="1" height="1" fill="#57533f"/>
<rect x="155.8" y="158.91" width="1" height="1" fill="#57533f"/>
<rect x="222.2" y="158.91" width="1" height="1" fill="#57533f"/>
<rect x="288.6" y="158.91" width="1" height="1" fill="#57533f"/>
<rect x="421.4" y="158.91" width="1" height="1" fill="#57533f"/>
<rect x="487.8" y="158.91" width="1" height="1" fill="#57533f"/>
<rect x="554.2" y="158.91" width="1" height="1" fill="#57533f"/>
<rect x="620.6" y="158.91" width="1" height="1" fill="#57533f"/>
<rect x="23.5" y="165.29" width="3.7" height="1"/>
<rect x="683.8" y="165.29" width="3.7" height="1"/>
<rect x="353.5" y="165.29" width="4" height="1"/>
<rect x="89.4" y="165.29" width="1" height="1" fill="#57533f"/>
<rect x="155.8" y="165.29" width="1" height="1" fill="#57533f"/>
<rect x="222.2" y="165.29" width="1" height="1" fill="#57533f"/>
<rect x="288.6" y="165.29" width="1" height="1" fill="#57533f"/>
<rect x="421.4" y="165.29" width="1" height="1" fill="#57533f"/>
<rect x="487.8" y="165.29" width="1" height="1" fill="#57533f"/>
<rect x="554.2" y="165.29" width="1" height="1" fill="#57533f"/>
<rect x="620.6" y="165.29" width="1" height="1" fill="#57533f"/>
<rect x="23.5" y="171.67" width="3.7" height="1"/>
<rect x="683.8" y="171.67" width="3.7" height="1"/>
<rect x="353.5" y="171.67" width="4" height="1"/>
<rect x="89.4" y="171.67" width="1" height="1" fill="#57533f"/>
<rect x="155.8" y="171.67" width="1" height="1" fill="#57533f"/>
<rect x="222.2" y="171.67" width="1" height="1" fill="#57533f"/>
<rect x="288.6" y="171.67" width="1" height="1" fill="#57533f"/>
<rect x="421.4" y="171.67" width="1" height="1" fill="#57533f"/>
<rect x="487.8" y="171.67" width="1" height="1" fill="#57533f"/>
<rect x="554.2" y="171.67" width="1" height="1" fill="#57533f"/>
<rect x="620.6" y="171.67" width="1" height="1" fill="#57533f"/>
<rect x="23.5" y="178.06" width="3.7" height="1"/>
<rect x="683.8" y="178.06" width="3.7" height="1"/>
<rect x="353.5" y="178.06" width="4" height="1"/>
<rect x="89.4" y="178.06" width="1" height="1" fill="#57533f"/>
<rect x="155.8" y="178.06" width="1" height="1" fill="#57533f"/>
<rect x="222.2" y="178.06" width="1" height="1" fill="#57533f"/>
<rect x="288.6" y="178.06" width="1" height="1" fill="#57533f"/>
<rect x="421.4" y="178.06" width="1" height="1" fill="#57533f"/>
<rect x="487.8" y="178.06" width="1" height="1" fill="#57533f"/>
<rect x="554.2" y="178.06" width="1" height="1" fill="#57533f"/>
<rect x="620.6" y="178.06" width="1" height="1" fill="#57533f"/>
<rect x="23.5" y="184.44" width="3.7" height="1"/>
<rect x="683.8" y="184.44" width="3.7" height="1"/>
<rect x="353.5" y="184.44" width="4" height="1"/>
<rect x="89.4" y="184.44" width="1" height="1" fill="#57533f"/>
<rect x="155.8" y="184.44" width="1" height="1" fill="#57533f"/>
<rect x="222.2" y="184.44" width="1" height="1" fill="#57533f"/>
<rect x="288.6" y="184.44" width="1" height="1" fill="#57533f"/>
<rect x="421.4" y="184.44" width="1" height="1" fill="#57533f"/>
<rect x="487.8" y="184.44" width="1" height="1" fill="#57533f"/>
<rect x="554.2" y="184.44" width="1" height="1" fill="#57533f"/>
<rect x="620.6" y="184.44" width="1" height="1" fill="#57533f"/>
<rect x="23.5" y="190.82" width="6.5" height="1"/>
<rect x="681" y="190.82" width="6.5" height="1"/>
<rect x="353.5" y="190.82" width="4" height="1"/>
<rect x="89.4" y="190.82" width="1" height="1" fill="#57533f"/>
<rect x="155.8" y="190.82" width="1" height="1" fill="#57533f"/>
<rect x="222.2" y="190.82" width="1" height="1" fill="#57533f"/>
<rect x="288.6" y="190.82" width="1" height="1" fill="#57533f"/>
<rect x="421.4" y="190.82" width="1" height="1" fill="#57533f"/>
<rect x="487.8" y="190.82" width="1" height="1" fill="#57533f"/>
<rect x="554.2" y="190.82" width="1" height="1" fill="#57533f"/>
<rect x="620.6" y="190.82" width="1" height="1" fill="#57533f"/>
<rect x="23.5" y="197.2" width="3.7" height="1"/>
<rect x="683.8" y="197.2" width="3.7" height="1"/>
<rect x="353.5" y="197.2" width="4" height="1"/>
<rect x="89.4" y="197.2" width="1" height="1" fill="#57533f"/>
<rect x="155.8" y="197.2" width="1" height="1" fill="#57533f"/>
<rect x="222.2" y="197.2" width="1" height="1" fill="#57533f"/>
<rect x="288.6" y="197.2" width="1" height="1" fill="#57533f"/>
<rect x="421.4" y="197.2" width="1" height="1" fill="#57533f"/>
<rect x="487.8" y="197.2" width="1" height="1" fill="#57533f"/>
<rect x="554.2" y="197.2" width="1" height="1" fill="#57533f"/>
<rect x="620.6" y="197.2" width="1" height="1" fill="#57533f"/>
<rect x="23.5" y="203.58" width="3.7" height="1"/>
<rect x="683.8" y="203.58" width="3.7" height="1"/>
<rect x="353.5" y="203.58" width="4" height="1"/>
<rect x="89.4" y="203.58" width="1" height="1" fill="#57533f"/>
<rect x="155.8" y="203.58" width="1" height="1" fill="#57533f"/>
<rect x="222.2" y="203.58" width="1" height="1" fill="#57533f"/>
<rect x="288.6" y="203.58" width="1" height="1" fill="#57533f"/>
<rect x="421.4" y="203.58" width="1" height="1" fill="#57533f"/>
<rect x="487.8" y="203.58" width="1" height="1" fill="#57533f"/>
<rect x="554.2" y="203.58" width="1" height="1" fill="#57533f"/>
<rect x="620.6" y="203.58" width="1" height="1" fill="#57533f"/>
<rect x="23.5" y="209.97" width="3.7" height="1"/>
<rect x="683.8" y="209.97" width="3.7" height="1"/>
<rect x="353.5" y="209.97" width="4" height="1"/>
<rect x="89.4" y="209.97" width="1" height="1" fill="#57533f"/>
<rect x="155.8" y="209.97" width="1" height="1" fill="#57533f"/>
<rect x="222.2" y="209.97" width="1" height="1" fill="#57533f"/>
<rect x="288.6" y="209.97" width="1" height="1" fill="#57533f"/>
<rect x="421.4" y="209.97" width="1" height="1" fill="#57533f"/>
<rect x="487.8" y="209.97" width="1" height="1" fill="#57533f"/>
<rect x="554.2" y="209.97" width="1" height="1" fill="#57533f"/>
<rect x="620.6" y="209.97" width="1" height="1" fill="#57533f"/>
<rect x="23.5" y="216.35" width="3.7" height="1"/>
<rect x="683.8" y="216.35" width="3.7" height="1"/>
<rect x="353.5" y="216.35" width="4" height="1"/>
<rect x="89.4" y="216.35" width="1" height="1" fill="#57533f"/>
<rect x="155.8" y="216.35" width="1" height="1" fill="#57533f"/>
<rect x="222.2" y="216.35" width="1" height="1" fill="#57533f"/>
<rect x="288.6" y="216.35" width="1" height="1" fill="#57533f"/>
<rect x="421.4" y="216.35" width="1" height="1" fill="#57533f"/>
<rect x="487.8" y="216.35" width="1" height="1" fill="#57533f"/>
<rect x="554.2" y="216.35" width="1" height="1" fill="#57533f"/>
<rect x="620.6" y="216.35" width="1" height="1" fill="#57533f"/>
<rect x="23.5" y="222.73" width="6.5" height="1"/>
<rect x="681" y="222.73" width="6.5" height="1"/>
<rect x="353.5" y="222.73" width="4" height="1"/>
<rect x="89.4" y="222.73" width="1" height="1" fill="#57533f"/>
<rect x="155.8" y="222.73" width="1" height="1" fill="#57533f"/>
<rect x="222.2" y="222.73" width="1" height="1" fill="#57533f"/>
<rect x="288.6" y="222.73" width="1" height="1" fill="#57533f"/>
<rect x="421.4" y="222.73" width="1" height="1" fill="#57533f"/>
<rect x="487.8" y="222.73" width="1" height="1" fill="#57533f"/>
<rect x="554.2" y="222.73" width="1" height="1" fill="#57533f"/>
<rect x="620.6" y="222.73" width="1" height="1" fill="#57533f"/>
<rect x="23.5" y="229.11" width="3.7" height="1"/>
<rect x="683.8" y="229.11" width="3.7" height="1"/>
<rect x="353.5" y="229.11" width="4" height="1"/>
<rect x="89.4" y="229.11" width="1" height="1" fill="#57533f"/>
<rect x="155.8" y="229.11" width="1" height="1" fill="#57533f"/>
<rect x="222.2" y="229.11" width="1" height="1" fill="#57533f"/>
<rect x="288.6" y="229.11" width="1" height="1" fill="#57533f"/>
<rect x="421.4" y="229.11" width="1" height="1" fill="#57533f"/>
<rect x="487.8" y="229.11" width="1" height="1" fill="#57533f"/>
<rect x="554.2" y="229.11" width="1" height="1" fill="#57533f"/>
<rect x="620.6" y="229.11" width="1" height="1" fill="#57533f"/>
<rect x="23.5" y="235.49" width="3.7" height="1"/>
<rect x="683.8" y="235.49" width="3.7" height="1"/>
<rect x="353.5" y="235.49" width="4" height="1"/>
<rect x="89.4" y="235.49" width="1" height="1" fill="#57533f"/>
<rect x="155.8" y="235.49" width="1" height="1" fill="#57533f"/>
<rect x="222.2" y="235.49" width="1" height="1" fill="#57533f"/>
<rect x="288.6" y="235.49" width="1" height="1" fill="#57533f"/>
<rect x="421.4" y="235.49" width="1" height="1" fill="#57533f"/>
<rect x="487.8" y="235.49" width="1" height="1" fill="#57533f"/>
<rect x="554.2" y="235.49" width="1" height="1" fill="#57533f"/>
<rect x="620.6" y="235.49" width="1" height="1" fill="#57533f"/>
<rect x="23.5" y="241.88" width="3.7" height="1"/>
<rect x="683.8" y="241.88" width="3.7" height="1"/>
<rect x="353.5" y="241.88" width="4" height="1"/>
<rect x="89.4" y="241.88" width="1" height="1" fill="#57533f"/>
<rect x="155.8" y="241.88" width="1" height="1" fill="#57533f"/>
<rect x="222.2" y="241.88" width="1" height="1" fill="#57533f"/>
<rect x="288.6" y="241.88" width="1" height="1" fill="#57533f"/>
<rect x="421.4" y="241.88" width="1" height="1" fill="#57533f"/>
<rect x="487.8" y="241.88" width="1" height="1" fill="#57533f"/>
<rect x="554.2" y="241.88" width="1" height="1" fill="#57533f"/>
<rect x="620.6" y="241.88" width="1" height="1" fill="#57533f"/>
<rect x="23.5" y="248.26" width="3.7" height="1"/>
<rect x="683.8" y="248.26" width="3.7" height="1"/>
<rect x="353.5" y="248.26" width="4" height="1"/>
<rect x="89.4" y="248.26" width="1" height="1" fill="#57533f"/>
<rect x="155.8" y="248.26" width="1" height="1" fill="#57533f"/>
<rect x="222.2" y="248.26" width="1" height="1" fill="#57533f"/>
<rect x="288.6" y="248.26" width="1" height="1" fill="#57533f"/>
<rect x="421.4" y="248.26" width="1" height="1" fill="#57533f"/>
<rect x="487.8" y="248.26" width="1" height="1" fill="#57533f"/>
<rect x="554.2" y="248.26" width="1" height="1" fill="#57533f"/>
<rect x="620.6" y="248.26" width="1" height="1" fill="#57533f"/>
<rect x="23.5" y="254.64" width="6.5" height="1"/>
<rect x="681" y="254.64" width="6.5" height="1"/>
<rect x="353.5" y="254.64" width="4" height="1"/>
<rect x="89.4" y="254.64" width="1" height="1" fill="#57533f"/>
<rect x="155.8" y="254.64" width="1" height="1" fill="#57533f"/>
<rect x="222.2" y="254.64" width="1" height="1" fill="#57533f"/>
<rect x="288.6" y="254.64" width="1" height="1" fill="#57533f"/>
<rect x="421.4" y="254.64" width="1" height="1" fill="#57533f"/>
<rect x="487.8" y="254.64" width="1" height="1" fill="#57533f"/>
<rect x="554.2" y="254.64" width="1" height="1" fill="#57533f"/>
<rect x="620.6" y="254.64" width="1" height="1" fill="#57533f"/>
<rect x="23.5" y="261.02" width="3.7" height="1"/>
<rect x="683.8" y="261.02" width="3.7" height="1"/>
<rect x="353.5" y="261.02" width="4" height="1"/>
<rect x="89.4" y="261.02" width="1" height="1" fill="#57533f"/>
<rect x="155.8" y="261.02" width="1" height="1" fill="#57533f"/>
<rect x="222.2" y="261.02" width="1" height="1" fill="#57533f"/>
<rect x="288.6" y="261.02" width="1" height="1" fill="#57533f"/>
<rect x="421.4" y="261.02" width="1" height="1" fill="#57533f"/>
<rect x="487.8" y="261.02" width="1" height="1" fill="#57533f"/>
<rect x="554.2" y="261.02" width="1" height="1" fill="#57533f"/>
<rect x="620.6" y="261.02" width="1" height="1" fill="#57533f"/>
<rect x="23.5" y="267.4" width="3.7" height="1"/>
<rect x="683.8" y="267.4" width="3.7" height="1"/>
<rect x="353.5" y="267.4" width="4" height="1"/>
<rect x="89.4" y="267.4" width="1" height="1" fill="#57533f"/>
<rect x="155.8" y="267.4" width="1" height="1" fill="#57533f"/>
<rect x="222.2" y="267.4" width="1" height="1" fill="#57533f"/>
<rect x="288.6" y="267.4" width="1" height="1" fill="#57533f"/>
<rect x="421.4" y="267.4" width="1" height="1" fill="#57533f"/>
<rect x="487.8" y="267.4" width="1" height="1" fill="#57533f"/>
<rect x="554.2" y="267.4" width="1" height="1" fill="#57533f"/>
<rect x="620.6" y="267.4" width="1" height="1" fill="#57533f"/>
<rect x="23.5" y="273.79" width="3.7" height="1"/>
<rect x="683.8" y="273.79" width="3.7" height="1"/>
<rect x="353.5" y="273.79" width="4" height="1"/>
<rect x="89.4" y="273.79" width="1" height="1" fill="#57533f"/>
<rect x="155.8" y="273.79" width="1" height="1" fill="#57533f"/>
<rect x="222.2" y="273.79" width="1" height="1" fill="#57533f"/>
<rect x="288.6" y="273.79" width="1" height="1" fill="#57533f"/>
<rect x="421.4" y="273.79" width="1" height="1" fill="#57533f"/>
<rect x="487.8" y="273.79" width="1" height="1" fill="#57533f"/>
<rect x="554.2" y="273.79" width="1" height="1" fill="#57533f"/>
<rect x="620.6" y="273.79" width="1" height="1" fill="#57533f"/>
<rect x="23.5" y="280.17" width="3.7" height="1"/>
<rect x="683.8" y="280.17" width="3.7" height="1"/>
<rect x="353.5" y="280.17" width="4" height="1"/>
<rect x="89.4" y="280.17" width="1" height="1" fill="#57533f"/>
<rect x="155.8" y="280.17" width="1" height="1" fill="#57533f"/>
<rect x="222.2" y="280.17" width="1" height="1" fill="#57533f"/>
<rect x="288.6" y="280.17" width="1" height="1" fill="#57533f"/>
<rect x="421.4" y="280.17" width="1" height="1" fill="#57533f"/>
<rect x="487.8" y="280.17" width="1" height="1" fill="#57533f"/>
<rect x="554.2" y="280.17" width="1" height="1" fill="#57533f"/>
<rect x="620.6" y="280.17" width="1" height="1" fill="#57533f"/>
<rect x="23.5" y="286.55" width="6.5" height="1"/>
<rect x="681" y="286.55" width="6.5" height="1"/>
<rect x="353.5" y="286.55" width="4" height="1"/>
<rect x="89.4" y="286.55" width="1" height="1" fill="#57533f"/>
<rect x="155.8" y="286.55" width="1" height="1" fill="#57533f"/>
<rect x="222.2" y="286.55" width="1" height="1" fill="#57533f"/>
<rect x="288.6" y="286.55" width="1" height="1" fill="#57533f"/>
<rect x="421.4" y="286.55" width="1" height="1" fill="#57533f"/>
<rect x="487.8" y="286.55" width="1" height="1" fill="#57533f"/>
<rect x="554.2" y="286.55" width="1" height="1" fill="#57533f"/>
<rect x="620.6" y="286.55" width="1" height="1" fill="#57533f"/>
<rect x="23.5" y="292.93" width="3.7" height="1"/>
<rect x="683.8" y="292.93" width="3.7" height="1"/>
<rect x="353.5" y="292.93" width="4" height="1"/>
<rect x="89.4" y="292.93" width="1" height="1" fill="#57533f"/>
<rect x="155.8" y="292.93" width="1" height="1" fill="#57533f"/>
<rect x="222.2" y="292.93" width="1" height="1" fill="#57533f"/>
<rect x="288.6" y="292.93" width="1" height="1" fill="#57533f"/>
<rect x="421.4" y="292.93" width="1" height="1" fill="#57533f"/>
<rect x="487.8" y="292.93" width="1" height="1" fill="#57533f"/>
<rect x="554.2" y="292.93" width="1" height="1" fill="#57533f"/>
<rect x="620.6" y="292.93" width="1" height="1" fill="#57533f"/>
<rect x="23.5" y="299.31" width="3.7" height="1"/>
<rect x="683.8" y="299.31" width="3.7" height="1"/>
<rect x="353.5" y="299.31" width="4" height="1"/>
<rect x="89.4" y="299.31" width="1" height="1" fill="#57533f"/>
<rect x="155.8" y="299.31" width="1" height="1" fill="#57533f"/>
<rect x="222.2" y="299.31" width="1" height="1" fill="#57533f"/>
<rect x="288.6" y="299.31" width="1" height="1" fill="#57533f"/>
<rect x="421.4" y="299.31" width="1" height="1" fill="#57533f"/>
<rect x="487.8" y="299.31" width="1" height="1" fill="#57533f"/>
<rect x="554.2" y="299.31" width="1" height="1" fill="#57533f"/>
<rect x="620.6" y="299.31" width="1" height="1" fill="#57533f"/>
<rect x="23.5" y="305.7" width="3.7" height="1"/>
<rect x="683.8" y="305.7" width="3.7" height="1"/>
<rect x="353.5" y="305.7" width="4" height="1"/>
<rect x="89.4" y="305.7" width="1" height="1" fill="#57533f"/>
<rect x="155.8" y="305.7" width="1" height="1" fill="#57533f"/>
<rect x="222.2" y="305.7" width="1" height="1" fill="#57533f"/>
<rect x="288.6" y="305.7" width="1" height="1" fill="#57533f"/>
<rect x="421.4" y="305.7" width="1" height="1" fill="#57533f"/>
<rect x="487.8" y="305.7" width="1" height="1" fill="#57533f"/>
<rect x="554.2" y="305.7" width="1" height="1" fill="#57533f"/>
<rect x="620.6" y="305.7" width="1" height="1" fill="#57533f"/>
<rect x="23.5" y="312.08" width="3.7" height="1"/>
<rect x="683.8" y="312.08" width="3.7" height="1"/>
<rect x="353.5" y="312.08" width="4" height="1"/>
<rect x="89.4" y="312.08" width="1" height="1" fill="#57533f"/>
<rect x="155.8" y="312.08" width="1" height="1" fill="#57533f"/>
<rect x="222.2" y="312.08" width="1" height="1" fill="#57533f"/>
<rect x="288.6" y="312.08" width="1" height="1" fill="#57533f"/>
<rect x="421.4" y="312.08" width="1" height="1" fill="#57533f"/>
<rect x="487.8" y="312.08" width="1" height="1" fill="#57533f"/>
<rect x="554.2" y="312.08" width="1" height="1" fill="#57533f"/>
<rect x="620.6" y="312.08" width="1" height="1" fill="#57533f"/>
<rect x="23.5" y="318.46" width="6.5" height="1"/>
<rect x="681" y="318.46" width="6.5" height="1"/>
<rect x="353.5" y="318.46" width="4" height="1"/>
<rect x="89.4" y="318.46" width="1" height="1" fill="#57533f"/>
<rect x="155.8" y="318.46" width="1" height="1" fill="#57533f"/>
<rect x="222.2" y="318.46" width="1" height="1" fill="#57533f"/>
<rect x="288.6" y="318.46" width="1" height="1" fill="#57533f"/>
<rect x="421.4" y="318.46" width="1" height="1" fill="#57533f"/>
<rect x="487.8" y="318.46" width="1" height="1" fill="#57533f"/>
<rect x="554.2" y="318.46" width="1" height="1" fill="#57533f"/>
<rect x="620.6" y="318.46" width="1" height="1" fill="#57533f"/>
<rect x="23.5" y="324.84" width="3.7" height="1"/>
<rect x="683.8" y="324.84" width="3.7" height="1"/>
<rect x="353.5" y="324.84" width="4" height="1"/>
<rect x="89.4" y="324.84" width="1" height="1" fill="#57533f"/>
<rect x="155.8" y="324.84" width="1" height="1" fill="#57533f"/>
<rect x="222.2" y="324.84" width="1" height="1" fill="#57533f"/>
<rect x="288.6" y="324.84" width="1" height="1" fill="#57533f"/>
<rect x="421.4" y="324.84" width="1" height="1" fill="#57533f"/>
<rect x="487.8" y="324.84" width="1" height="1" fill="#57533f"/>
<rect x="554.2" y="324.84" width="1" height="1" fill="#57533f"/>
<rect x="620.6" y="324.84" width="1" height="1" fill="#57533f"/>
<rect x="23.5" y="331.22" width="3.7" height="1"/>
<rect x="683.8" y="331.22" width="3.7" height="1"/>
<rect x="353.5" y="331.22" width="4" height="1"/>
<rect x="89.4" y="331.22" width="1" height="1" fill="#57533f"/>
<rect x="155.8" y="331.22" width="1" height="1" fill="#57533f"/>
<rect x="222.2" y="331.22" width="1" height="1" fill="#57533f"/>
<rect x="288.6" y="331.22" width="1" height="1" fill="#57533f"/>
<rect x="421.4" y="331.22" width="1" height="1" fill="#57533f"/>
<rect x="487.8" y="331.22" width="1" height="1" fill="#57533f"/>
<rect x="554.2" y="331.22" width="1" height="1" fill="#57533f"/>
<rect x="620.6" y="331.22" width="1" height="1" fill="#57533f"/>
<rect x="23.5" y="337.61" width="3.7" height="1"/>
<rect x="683.8" y="337.61" width="3.7" height="1"/>
<rect x="353.5" y="337.61" width="4" height="1"/>
<rect x="89.4" y="337.61" width="1" height="1" fill="#57533f"/>
<rect x="155.8" y="337.61" width="1" height="1" fill="#57533f"/>
<rect x="222.2" y="337.61" width="1" height="1" fill="#57533f"/>
<rect x="288.6" y="337.61" width="1" height="1" fill="#57533f"/>
<rect x="421.4" y="337.61" width="1" height="1" fill="#57533f"/>
<rect x="487.8" y="337.61" width="1" height="1" fill="#57533f"/>
<rect x="554.2" y="337.61" width="1" height="1" fill="#57533f"/>
<rect x="620.6" y="337.61" width="1" height="1" fill="#57533f"/>
<rect x="23.5" y="343.99" width="3.7" height="1"/>
<rect x="683.8" y="343.99" width="3.7" height="1"/>
<rect x="353.5" y="343.99" width="4" height="1"/>
<rect x="89.4" y="343.99" width="1" height="1" fill="#57533f"/>
<rect x="155.8" y="343.99" width="1" height="1" fill="#57533f"/>
<rect x="222.2" y="343.99" width="1" height="1" fill="#57533f"/>
<rect x="288.6" y="343.99" width="1" height="1" fill="#57533f"/>
<rect x="421.4" y="343.99" width="1" height="1" fill="#57533f"/>
<rect x="487.8" y="343.99" width="1" height="1" fill="#57533f"/>
<rect x="554.2" y="343.99" width="1" height="1" fill="#57533f"/>
<rect x="620.6" y="343.99" width="1" height="1" fill="#57533f"/>
<rect x="23.5" y="350.37" width="6.5" height="1"/>
<rect x="681" y="350.37" width="6.5" height="1"/>
<rect x="353.5" y="350.37" width="4" height="1"/>
<rect x="89.4" y="350.37" width="1" height="1" fill="#57533f"/>
<rect x="155.8" y="350.37" width="1" height="1" fill="#57533f"/>
<rect x="222.2" y="350.37" width="1" height="1" fill="#57533f"/>
<rect x="288.6" y="350.37" width="1" height="1" fill="#57533f"/>
<rect x="421.4" y="350.37" width="1" height="1" fill="#57533f"/>
<rect x="487.8" y="350.37" width="1" height="1" fill="#57533f"/>
<rect x="554.2" y="350.37" width="1" height="1" fill="#57533f"/>
<rect x="620.6" y="350.37" width="1" height="1" fill="#57533f"/>
<rect x="23.5" y="356.75" width="3.7" height="1"/>
<rect x="683.8" y="356.75" width="3.7" height="1"/>
<rect x="353.5" y="356.75" width="4" height="1"/>
<rect x="89.4" y="356.75" width="1" height="1" fill="#57533f"/>
<rect x="155.8" y="356.75" width="1" height="1" fill="#57533f"/>
<rect x="222.2" y="356.75" width="1" height="1" fill="#57533f"/>
<rect x="288.6" y="356.75" width="1" height="1" fill="#57533f"/>
<rect x="421.4" y="356.75" width="1" height="1" fill="#57533f"/>
<rect x="487.8" y="356.75" width="1" height="1" fill="#57533f"/>
<rect x="554.2" y="356.75" width="1" height="1" fill="#57533f"/>
<rect x="620.6" y="356.75" width="1" height="1" fill="#57533f"/>
<rect x="23.5" y="363.13" width="3.7" height="1"/>
<rect x="683.8" y="363.13" width="3.7" height="1"/>
<rect x="353.5" y="363.13" width="4" height="1"/>
<rect x="89.4" y="363.13" width="1" height="1" fill="#57533f"/>
<rect x="155.8" y="363.13" width="1" height="1" fill="#57533f"/>
<rect x="222.2" y="363.13" width="1" height="1" fill="#57533f"/>
<rect x="288.6" y="363.13" width="1" height="1" fill="#57533f"/>
<rect x="421.4" y="363.13" width="1" height="1" fill="#57533f"/>
<rect x="487.8" y="363.13" width="1" height="1" fill="#57533f"/>
<rect x="554.2" y="363.13" width="1" height="1" fill="#57533f"/>
<rect x="620.6" y="363.13" width="1" height="1" fill="#57533f"/>
<rect x="23.5" y="369.52" width="3.7" height="1"/>
<rect x="683.8" y="369.52" width="3.7" height="1"/>
<rect x="353.5" y="369.52" width="4" height="1"/>
<rect x="89.4" y="369.52" width="1" height="1" fill="#57533f"/>
<rect x="155.8" y="369.52" width="1" height="1" fill="#57533f"/>
<rect x="222.2" y="369.52" width="1" height="1" fill="#57533f"/>
<rect x="288.6" y="369.52" width="1" height="1" fill="#57533f"/>
<rect x="421.4" y="369.52" width="1" height="1" fill="#57533f"/>
<rect x="487.8" y="369.52" width="1" height="1" fill="#57533f"/>
<rect x="554.2" y="369.52" width="1" height="1" fill="#57533f"/>
<rect x="620.6" y="369.52" width="1" height="1" fill="#57533f"/>
<rect x="23.5" y="375.9" width="3.7" height="1"/>
<rect x="683.8" y="375.9" width="3.7" height="1"/>
<rect x="353.5" y="375.9" width="4" height="1"/>
<rect x="89.4" y="375.9" width="1" height="1" fill="#57533f"/>
<rect x="155.8" y="375.9" width="1" height="1" fill="#57533f"/>
<rect x="222.2" y="375.9" width="1" height="1" fill="#57533f"/>
<rect x="288.6" y="375.9" width="1" height="1" fill="#57533f"/>
<rect x="421.4" y="375.9" width="1" height="1" fill="#57533f"/>
<rect x="487.8" y="375.9" width="1" height="1" fill="#57533f"/>
<rect x="554.2" y="375.9" width="1" height="1" fill="#57533f"/>
<rect x="620.6" y="375.9" width="1" height="1" fill="#57533f"/>
<rect x="23.5" y="382.28" width="6.5" height="1"/>
<rect x="681" y="382.28" width="6.5" height="1"/>
<rect x="353.5" y="382.28" width="4" height="1"/>
<rect x="89.4" y="382.28" width="1" height="1" fill="#57533f"/>
<rect x="155.8" y="382.28" width="1" height="1" fill="#57533f"/>
<rect x="222.2" y="382.28" width="1" height="1" fill="#57533f"/>
<rect x="288.6" y="382.28" width="1" height="1" fill="#57533f"/>
<rect x="421.4" y="382.28" width="1" height="1" fill="#57533f"/>
<rect x="487.8" y="382.28" width="1" height="1" fill="#57533f"/>
<rect x="554.2" y="382.28" width="1" height="1" fill="#57533f"/>
<rect x="620.6" y="382.28" width="1" height="1" fill="#57533f"/>
<rect x="23.5" y="388.66" width="3.7" height="1"/>
<rect x="683.8" y="388.66" width="3.7" height="1"/>
<rect x="353.5" y="388.66" width="4" height="1"/>
<rect x="89.4" y="388.66" width="1" height="1" fill="#57533f"/>
<rect x="155.8" y="388.66" width="1" height="1" fill="#57533f"/>
<rect x="222.2" y="388.66" width="1" height="1" fill="#57533f"/>
<rect x="288.6" y="388.66" width="1" height="1" fill="#57533f"/>
<rect x="421.4" y="388.66" width="1" height="1" fill="#57533f"/>
<rect x="487.8" y="388.66" width="1" height="1" fill="#57533f"/>
<rect x="554.2" y="388.66" width="1" height="1" fill="#57533f"/>
<rect x="620.6" y="388.66" width="1" height="1" fill="#57533f"/>
<rect x="23.5" y="395.04" width="3.7" height="1"/>
<rect x="683.8" y="395.04" width="3.7" height="1"/>
<rect x="353.5" y="395.04" width="4" height="1"/>
<rect x="89.4" y="395.04" width="1" height="1" fill="#57533f"/>
<rect x="155.8" y="395.04" width="1" height="1" fill="#57533f"/>
<rect x="222.2" y="395.04" width="1" height="1" fill="#57533f"/>
<rect x="288.6" y="395.04" width="1" height="1" fill="#57533f"/>
<rect x="421.4" y="395.04" width="1" height="1" fill="#57533f"/>
<rect x="487.8" y="395.04" width="1" height="1" fill="#57533f"/>
<rect x="554.2" y="395.04" width="1" height="1" fill="#57533f"/>
<rect x="620.6" y="395.04" width="1" height="1" fill="#57533f"/>
<rect x="23.5" y="401.43" width="3.7" height="1"/>
<rect x="683.8" y="401.43" width="3.7" height="1"/>
<rect x="353.5" y="401.43" width="4" height="1"/>
<rect x="89.4" y="401.43" width="1" height="1" fill="#57533f"/>
<rect x="155.8" y="401.43" width="1" height="1" fill="#57533f"/>
<rect x="222.2" y="401.43" width="1" height="1" fill="#57533f"/>
<rect x="288.6" y="401.43" width="1" height="1" fill="#57533f"/>
<rect x="421.4" y="401.43" width="1" height="1" fill="#57533f"/>
<rect x="487.8" y="401.43" width="1" height="1" fill="#57533f"/>
<rect x="554.2" y="401.43" width="1" height="1" fill="#57533f"/>
<rect x="620.6" y="401.43" width="1" height="1" fill="#57533f"/>
<rect x="23.5" y="407.81" width="3.7" height="1"/>
<rect x="683.8" y="407.81" width="3.7" height="1"/>
<rect x="353.5" y="407.81" width="4" height="1"/>
<rect x="89.4" y="407.81" width="1" height="1" fill="#57533f"/>
<rect x="155.8" y="407.81" width="1" height="1" fill="#57533f"/>
<rect x="222.2" y="407.81" width="1" height="1" fill="#57533f"/>
<rect x="288.6" y="407.81" width="1" height="1" fill="#57533f"/>
<rect x="421.4" y="407.81" width="1" height="1" fill="#57533f"/>
<rect x="487.8" y="407.81" width="1" height="1" fill="#57533f"/>
<rect x="554.2" y="407.81" width="1" height="1" fill="#57533f"/>
<rect x="620.6" y="407.81" width="1" height="1" fill="#57533f"/>
<rect x="23.5" y="414.19" width="6.5" height="1"/>
<rect x="681" y="414.19" width="6.5" height="1"/>
<rect x="353.5" y="414.19" width="4" height="1"/>
<rect x="89.4" y="414.19" width="1" height="1" fill="#57533f"/>
<rect x="155.8" y="414.19" width="1" height="1" fill="#57533f"/>
<rect x="222.2" y="414.19" width="1" height="1" fill="#57533f"/>
<rect x="288.6" y="414.19" width="1" height="1" fill="#57533f"/>
<rect x="421.4" y="414.19" width="1" height="1" fill="#57533f"/>
<rect x="487.8" y="414.19" width="1" height="1" fill="#57533f"/>
<rect x="554.2" y="414.19" width="1" height="1" fill="#57533f"/>
<rect x="620.6" y="414.19" width="1" height="1" fill="#57533f"/>
<rect x="23.5" y="420.57" width="3.7" height="1"/>
<rect x="683.8" y="420.57" width="3.7" height="1"/>
<rect x="353.5" y="420.57" width="4" height="1"/>
<rect x="89.4" y="420.57" width="1" height="1" fill="#57533f"/>
<rect x="155.8" y="420.57" width="1" height="1" fill="#57533f"/>
<rect x="222.2" y="420.57" width="1" height="1" fill="#57533f"/>
<rect x="288.6" y="420.57" width="1" height="1" fill="#57533f"/>
<rect x="421.4" y="420.57" width="1" height="1" fill="#57533f"/>
<rect x="487.8" y="420.57" width="1" height="1" fill="#57533f"/>
<rect x="554.2" y="420.57" width="1" height="1" fill="#57533f"/>
<rect x="620.6" y="420.57" width="1" height="1" fill="#57533f"/>
<rect x="23.5" y="426.95" width="3.7" height="1"/>
<rect x="683.8" y="426.95" width="3.7" height="1"/>
<rect x="353.5" y="426.95" width="4" height="1"/>
<rect x="89.4" y="426.95" width="1" height="1" fill="#57533f"/>
<rect x="155.8" y="426.95" width="1" height="1" fill="#57533f"/>
<rect x="222.2" y="426.95" width="1" height="1" fill="#57533f"/>
<rect x="288.6" y="426.95" width="1" height="1" fill="#57533f"/>
<rect x="421.4" y="426.95" width="1" height="1" fill="#57533f"/>
<rect x="487.8" y="426.95" width="1" height="1" fill="#57533f"/>
<rect x="554.2" y="426.95" width="1" height="1" fill="#57533f"/>
<rect x="620.6" y="426.95" width="1" height="1" fill="#57533f"/>
<rect x="23.5" y="433.34" width="3.7" height="1"/>
<rect x="683.8" y="433.34" width="3.7" height="1"/>
<rect x="353.5" y="433.34" width="4" height="1"/>
<rect x="89.4" y="433.34" width="1" height="1" fill="#57533f"/>
<rect x="155.8" y="433.34" width="1" height="1" fill="#57533f"/>
<rect x="222.2" y="433.34" width="1" height="1" fill="#57533f"/>
<rect x="288.6" y="433.34" width="1" height="1" fill="#57533f"/>
<rect x="421.4" y="433.34" width="1" height="1" fill="#57533f"/>
<rect x="487.8" y="433.34" width="1" height="1" fill="#57533f"/>
<rect x="554.2" y="433.34" width="1" height="1" fill="#57533f"/>
<rect x="620.6" y="433.34" width="1" height="1" fill="#57533f"/>
<rect x="23.5" y="439.72" width="3.7" height="1"/>
<rect x="683.8" y="439.72" width="3.7" height="1"/>
<rect x="353.5" y="439.72" width="4" height="1"/>
<rect x="89.4" y="439.72" width="1" height="1" fill="#57533f"/>
<rect x="155.8" y="439.72" width="1" height="1" fill="#57533f"/>
<rect x="222.2" y="439.72" width="1" height="1" fill="#57533f"/>
<rect x="288.6" y="439.72" width="1" height="1" fill="#57533f"/>
<rect x="421.4" y="439.72" width="1" height="1" fill="#57533f"/>
<rect x="487.8" y="439.72" width="1" height="1" fill="#57533f"/>
<rect x="554.2" y="439.72" width="1" height="1" fill="#57533f"/>
<rect x="620.6" y="439.72" width="1" height="1" fill="#57533f"/>
</g>
<path d="M328.2 127.9 L334.8 127.9 L331.5 133.8 Z" fill="#f0a000"/>
<rect x="331.4" y="222" width="1.1" height="224.6" fill="#c8c000"/>
<rect x="331.3" y="262" width="1.4" height="60" fill="#f0f000"/>
<rect x="332" y="262" width="1.2" height="38" fill="#f4f400"/><rect x="332.5" y="285.49" width="1.2" height="9.32" fill="#f4f400"/><rect x="333" y="294.82" width="1.2" height="23.18" fill="#f4f400"/><rect x="333.5" y="291.05" width="1.2" height="6.15" fill="#f4f400"/><rect x="334" y="291.05" width="1.2" height="3.02" fill="#c8c800"/><rect x="334.5" y="294.08" width="1.2" height="4.64" fill="#f4f400"/><rect x="335" y="296.73" width="1.2" height="2.98" fill="#f4f400"/><rect x="335" y="283.26" width="1" height="11.91" fill="#e0e000" opacity="0.8"/><rect x="335.5" y="276.33" width="1.2" height="21.39" fill="#f4f400"/><rect x="336" y="276.33" width="1.2" height="2.14" fill="#f4f400"/><rect x="336" y="284.91" width="1" height="9.43" fill="#e0e000" opacity="0.8"/><rect x="336.5" y="278.48" width="1.2" height="14.43" fill="#f4f400"/><rect x="337" y="284.42" width="1.2" height="8.49" fill="#c8c800"/><rect x="337" y="284.49" width="1" height="8.75" fill="#e0e000" opacity="0.8"/><rect x="337.5" y="284.42" width="1.2" height="15.21" fill="#f4f400"/><rect x="338" y="277.72" width="1.2" height="21.9" fill="#f4f400"/><rect x="338" y="282.07" width="1" height="11.57" fill="#e0e000" opacity="0.8"/><rect x="338.5" y="277.72" width="1.2" height="6.57" fill="#f4f400"/><rect x="339" y="281.56" width="1.2" height="3.73" fill="#f4f400"/><rect x="339" y="283.74" width="1" height="11.49" fill="#e0e000" opacity="0.8"/><rect x="339.5" y="282.56" width="1.2" height="8" fill="#f4f400"/><rect x="340" y="287.81" width="1.2" height="3.74" fill="#f4f400"/><rect x="340" y="282.49" width="1" height="10.79" fill="#e0e000" opacity="0.8"/><rect x="340.5" y="285.08" width="1.2" height="3.73" fill="#f4f400"/><rect x="341" y="281.59" width="1.2" height="3.49" fill="#f4f400"/><rect x="341" y="280.6" width="1" height="15.01" fill="#e0e000" opacity="0.8"/><rect x="341.5" y="271.83" width="1.2" height="9.76" fill="#c8c800"/><rect x="342" y="271.83" width="1.2" height="12.43" fill="#f4f400"/><rect x="342.5" y="277.53" width="1.2" height="6.73" fill="#f4f400"/><rect x="343" y="277.53" width="1.2" height="24.75" fill="#f4f400"/><rect x="343" y="280.24" width="1" height="12.39" fill="#e0e000" opacity="0.8"/><rect x="343.5" y="285.67" width="1.2" height="16.61" fill="#f4f400"/><rect x="344" y="277.14" width="1.2" height="8.53" fill="#f4f400"/><rect x="344" y="278.58" width="1" height="12.11" fill="#e0e000" opacity="0.8"/><rect x="344.5" y="277.14" width="1.2" height="6.29" fill="#f4f400"/><rect x="345" y="283.44" width="1.2" height="8.32" fill="#f4f400"/><rect x="345.5" y="286.37" width="1.2" height="5.39" fill="#f4f400"/><rect x="346" y="265.13" width="1.2" height="21.24" fill="#f4f400"/><rect x="346.5" y="265.13" width="1.2" height="18.04" fill="#f4f400"/><rect x="347" y="276.17" width="1.2" height="6.99" fill="#f4f400"/><rect x="347" y="272.5" width="1" height="9.68" fill="#e0e000" opacity="0.8"/><rect x="347.5" y="276.17" width="1.2" height="6.81" fill="#c8c800"/><rect x="348" y="280.73" width="1.2" height="3.26" fill="#f4f400"/><rect x="348" y="272.15" width="1" height="10.26" fill="#e0e000" opacity="0.8"/><rect x="348.5" y="261.76" width="1.2" height="19.97" fill="#c8c800"/><rect x="349" y="261.76" width="1.2" height="17.59" fill="#f4f400"/><rect x="349" y="269.63" width="1" height="14.22" fill="#e0e000" opacity="0.8"/><rect x="349.5" y="276.44" width="1.2" height="2.91" fill="#f4f400"/><rect x="350" y="273.07" width="1.2" height="3.37" fill="#c8c800"/><rect x="350" y="272.13" width="1" height="12.86" fill="#e0e000" opacity="0.8"/><rect x="350.5" y="273.07" width="1.2" height="7.26" fill="#f4f400"/><rect x="351" y="278.28" width="1.2" height="3.04" fill="#f4f400"/><rect x="351" y="273.62" width="1" height="9.35" fill="#e0e000" opacity="0.8"/><rect x="351.5" y="279.28" width="1.2" height="3.82" fill="#f4f400"/><rect x="352" y="281.07" width="1.2" height="2.03" fill="#f4f400"/><rect x="352" y="271.69" width="1" height="11.78" fill="#e0e000" opacity="0.8"/><rect x="352.5" y="281.07" width="1.2" height="8.82" fill="#f4f400"/><rect x="353" y="273.96" width="1.2" height="15.93" fill="#f4f400"/><rect x="353.5" y="269.36" width="1.2" height="4.6" fill="#f4f400"/><rect x="354" y="263.48" width="1.2" height="5.88" fill="#f4f400"/><rect x="354" y="269.37" width="1" height="11.73" fill="#e0e000" opacity="0.8"/><rect x="354.5" y="260.89" width="1.2" height="3.59" fill="#c8c800"/><rect x="355" y="261.89" width="1.2" height="20.38" fill="#f4f400"/><rect x="355" y="269.61" width="1" height="14.2" fill="#e0e000" opacity="0.8"/><rect x="355.5" y="270.65" width="1.2" height="11.62" fill="#f4f400"/><rect x="356" y="269.65" width="1.2" height="3.18" fill="#f4f400"/><rect x="356.5" y="271.83" width="1.2" height="4.04" fill="#f4f400"/><rect x="357" y="275.87" width="1.2" height="5.82" fill="#c8c800"/><rect x="357.5" y="275.87" width="1.2" height="5.81" fill="#f4f400"/><rect x="358" y="265.84" width="1.2" height="10.03" fill="#c8c800"/><rect x="358" y="270.91" width="1" height="12.03" fill="#e0e000" opacity="0.8"/><rect x="358.5" y="265.84" width="1.2" height="22.59" fill="#c8c800"/><rect x="359" y="281.06" width="1.2" height="7.38" fill="#f4f400"/><rect x="359" y="274.44" width="1" height="9.48" fill="#e0e000" opacity="0.8"/><rect x="359.5" y="281.06" width="1.2" height="2.62" fill="#c8c800"/><rect x="360" y="283.67" width="1.2" height="6.08" fill="#f4f400"/><rect x="360" y="271.3" width="1" height="11.73" fill="#e0e000" opacity="0.8"/><rect x="360.5" y="273.06" width="1.2" height="16.7" fill="#f4f400"/><rect x="361" y="272.06" width="1.2" height="2.27" fill="#f4f400"/><rect x="361" y="271.74" width="1" height="10.9" fill="#e0e000" opacity="0.8"/><rect x="361.5" y="270.93" width="1.2" height="2.4" fill="#f4f400"/><rect x="362" y="270.93" width="1.2" height="10.32" fill="#f4f400"/><rect x="362" y="273.29" width="1" height="10.13" fill="#e0e000" opacity="0.8"/><rect x="362.5" y="281.25" width="1.2" height="3.98" fill="#f4f400"/><rect x="363" y="285.23" width="1.2" height="3.31" fill="#f4f400"/><rect x="363" y="272.06" width="1" height="11.53" fill="#e0e000" opacity="0.8"/><rect x="363.5" y="284.02" width="1.2" height="4.52" fill="#f4f400"/><rect x="364" y="284.02" width="1.2" height="7.01" fill="#f4f400"/><rect x="364.5" y="278.73" width="1.2" height="12.3" fill="#c8c800"/><rect x="365" y="278.73" width="1.2" height="7.98" fill="#f4f400"/><rect x="365" y="273.06" width="1" height="11.66" fill="#e0e000" opacity="0.8"/><rect x="365.5" y="286.71" width="1.2" height="4.6" fill="#f4f400"/><rect x="366" y="286.26" width="1.2" height="5.05" fill="#f4f400"/><rect x="366" y="274.82" width="1" height="11.3" fill="#e0e000" opacity="0.8"/><rect x="366.5" y="266.62" width="1.2" height="19.65" fill="#f4f400"/><rect x="367" y="266.62" width="1.2" height="10.24" fill="#f4f400"/><rect x="367.5" y="276.86" width="1.2" height="9.73" fill="#c8c800"/><rect x="368" y="272.78" width="1.2" height="13.82" fill="#c8c800"/><rect x="368" y="275.23" width="1" height="13.57" fill="#e0e000" opacity="0.8"/><rect x="368.5" y="272.78" width="1.2" height="11.21" fill="#f4f400"/><rect x="369" y="278.16" width="1.2" height="5.83" fill="#f4f400"/><rect x="369" y="274.53" width="1" height="14.29" fill="#e0e000" opacity="0.8"/><rect x="369.5" y="278.16" width="1.2" height="5.88" fill="#f4f400"/><rect x="370" y="284.04" width="1.2" height="11.03" fill="#c8c800"/><rect x="370" y="273.47" width="1" height="11.88" fill="#e0e000" opacity="0.8"/><rect x="370.5" y="277.28" width="1.2" height="17.79" fill="#f4f400"/><rect x="371" y="276.28" width="1.2" height="3.41" fill="#f4f400"/><rect x="371" y="275.99" width="1" height="10.49" fill="#e0e000" opacity="0.8"/><rect x="371.5" y="278.69" width="1.2" height="3.27" fill="#f4f400"/><rect x="372" y="274.91" width="1.2" height="7.05" fill="#f4f400"/><rect x="372.5" y="274.91" width="1.2" height="8.6" fill="#f4f400"/><rect x="373" y="278.85" width="1.2" height="4.67" fill="#f4f400"/><rect x="373" y="275.91" width="1" height="12.33" fill="#e0e000" opacity="0.8"/><rect x="373.5" y="273.17" width="1.2" height="5.68" fill="#f4f400"/><rect x="374" y="273.17" width="1.2" height="16.32" fill="#f4f400"/><rect x="374" y="275.76" width="1" height="10.63" fill="#e0e000" opacity="0.8"/><rect x="374.5" y="266.48" width="1.2" height="23.02" fill="#f4f400"/><rect x="375" y="266.48" width="1.2" height="2.37" fill="#f4f400"/><rect x="375" y="274.96" width="1" height="12.59" fill="#e0e000" opacity="0.8"/><rect x="375.5" y="268.85" width="1.2" height="16.75" fill="#f4f400"/><rect x="376" y="279.73" width="1.2" height="5.87" fill="#f4f400"/><rect x="376" y="276.43" width="1" height="11.4" fill="#e0e000" opacity="0.8"/><rect x="376.5" y="279.73" width="1.2" height="2.94" fill="#f4f400"/><rect x="377" y="275.95" width="1.2" height="6.71" fill="#f4f400"/><rect x="377" y="275.67" width="1" height="12.34" fill="#e0e000" opacity="0.8"/><rect x="377.5" y="275.95" width="1.2" height="6.62" fill="#c8c800"/><rect x="378" y="280.54" width="1.2" height="2.03" fill="#f4f400"/><rect x="378" y="276.42" width="1" height="11.63" fill="#e0e000" opacity="0.8"/><rect x="378.5" y="280.54" width="1.2" height="10.3" fill="#f4f400"/><rect x="379" y="288.07" width="1.2" height="2.76" fill="#f4f400"/><rect x="379.5" y="282.9" width="1.2" height="5.17" fill="#f4f400"/><rect x="380" y="280.6" width="1.2" height="2.31" fill="#f4f400"/><rect x="380" y="276.53" width="1" height="14.58" fill="#e0e000" opacity="0.8"/><rect x="380.5" y="280.6" width="1.2" height="7.41" fill="#c8c800"/><rect x="381" y="287.01" width="1.2" height="2.49" fill="#f4f400"/><rect x="381" y="278.69" width="1" height="11.34" fill="#e0e000" opacity="0.8"/><rect x="381.5" y="277.34" width="1.2" height="11.15" fill="#c8c800"/><rect x="382" y="277.34" width="1.2" height="8.61" fill="#f4f400"/><rect x="382" y="278.37" width="1" height="8.28" fill="#e0e000" opacity="0.8"/><rect x="382.5" y="283.08" width="1.2" height="2.87" fill="#f4f400"/><rect x="383" y="281.63" width="1.2" height="2.45" fill="#f4f400"/><rect x="383.5" y="280.14" width="1.2" height="2.49" fill="#c8c800"/><rect x="384" y="280.14" width="1.2" height="12.57" fill="#f4f400"/><rect x="384" y="277.19" width="1" height="8.59" fill="#e0e000" opacity="0.8"/><rect x="384.5" y="269.52" width="1.2" height="23.18" fill="#c8c800"/><rect x="385" y="269.52" width="1.2" height="17.12" fill="#f4f400"/><rect x="385" y="274.86" width="1" height="11.85" fill="#e0e000" opacity="0.8"/><rect x="385.5" y="272.57" width="1.2" height="14.07" fill="#f4f400"/><rect x="386" y="272.57" width="1.2" height="7.77" fill="#f4f400"/><rect x="386" y="272.74" width="1" height="13.87" fill="#e0e000" opacity="0.8"/><rect x="386.5" y="280.34" width="1.2" height="6.28" fill="#f4f400"/><rect x="387" y="272.61" width="1.2" height="14.01" fill="#f4f400"/><rect x="387" y="273.23" width="1" height="11.02" fill="#e0e000" opacity="0.8"/><rect x="387.5" y="272.61" width="1.2" height="10.89" fill="#f4f400"/><rect x="388" y="280.37" width="1.2" height="3.14" fill="#f4f400"/><rect x="388.5" y="280.37" width="1.2" height="11.58" fill="#f4f400"/><rect x="389" y="289.68" width="1.2" height="3.28" fill="#f4f400"/><rect x="389" y="276.34" width="1" height="11.9" fill="#e0e000" opacity="0.8"/><rect x="389.5" y="278.94" width="1.2" height="11.74" fill="#f4f400"/><rect x="390" y="278.94" width="1.2" height="12.84" fill="#c8c800"/><rect x="390" y="275.66" width="1" height="9.72" fill="#e0e000" opacity="0.8"/><rect x="390.5" y="275.33" width="1.2" height="16.45" fill="#c8c800"/><rect x="391" y="275.33" width="1.2" height="5.47" fill="#f4f400"/><rect x="391" y="275.32" width="1" height="11.89" fill="#e0e000" opacity="0.8"/><rect x="391.5" y="273.29" width="1.2" height="7.51" fill="#c8c800"/><rect x="392" y="273.29" width="1.2" height="11.63" fill="#f4f400"/><rect x="392" y="277.16" width="1" height="10.46" fill="#e0e000" opacity="0.8"/><rect x="392.5" y="279.97" width="1.2" height="4.95" fill="#c8c800"/><rect x="393" y="274.93" width="1.2" height="5.04" fill="#f4f400"/><rect x="393" y="276.18" width="1" height="10.26" fill="#e0e000" opacity="0.8"/><rect x="393.5" y="274.93" width="1.2" height="4" fill="#f4f400"/><rect x="394" y="277.94" width="1.2" height="2.76" fill="#f4f400"/><rect x="394" y="273.16" width="1" height="14.79" fill="#e0e000" opacity="0.8"/><rect x="394.5" y="279.7" width="1.2" height="13.69" fill="#f4f400"/><rect x="395" y="285.84" width="1.2" height="7.55" fill="#c8c800"/><rect x="395" y="273.7" width="1" height="11.41" fill="#e0e000" opacity="0.8"/><rect x="395.5" y="278.77" width="1.2" height="7.08" fill="#f4f400"/><rect x="396" y="277.07" width="1.2" height="2.69" fill="#c8c800"/><rect x="396" y="272.27" width="1" height="13.4" fill="#e0e000" opacity="0.8"/><rect x="396.5" y="278.07" width="1.2" height="18.28" fill="#f4f400"/><rect x="397" y="276.14" width="1.2" height="20.21" fill="#f4f400"/><rect x="397" y="272.49" width="1" height="13.35" fill="#e0e000" opacity="0.8"/><rect x="397.5" y="276.14" width="1.2" height="4.92" fill="#f4f400"/><rect x="398" y="280.06" width="1.2" height="2.43" fill="#f4f400"/><rect x="398" y="272.5" width="1" height="14.13" fill="#e0e000" opacity="0.8"/><rect x="398.5" y="281.5" width="1.2" height="10.15" fill="#f4f400"/><rect x="399" y="277.1" width="1.2" height="14.55" fill="#f4f400"/><rect x="399" y="272.9" width="1" height="11.52" fill="#e0e000" opacity="0.8"/><rect x="399.5" y="276" width="1.2" height="2.1" fill="#f4f400"/><rect x="400" y="270.38" width="1.2" height="6.62" fill="#f4f400"/><rect x="400" y="272.62" width="1" height="12.67" fill="#e0e000" opacity="0.8"/><rect x="400.5" y="270.38" width="1.2" height="15.33" fill="#c8c800"/><rect x="401" y="274.35" width="1.2" height="11.37" fill="#c8c800"/><rect x="401" y="274.16" width="1" height="10.7" fill="#e0e000" opacity="0.8"/><rect x="401.5" y="274.35" width="1.2" height="3.04" fill="#f4f400"/><rect x="402" y="269.72" width="1.2" height="7.67" fill="#f4f400"/><rect x="402.5" y="266.96" width="1.2" height="3.76" fill="#f4f400"/><rect x="403" y="267.96" width="1.2" height="10.74" fill="#f4f400"/><rect x="403" y="273.3" width="1" height="10.7" fill="#e0e000" opacity="0.8"/><rect x="403.5" y="278.7" width="1.2" height="18.02" fill="#f4f400"/><rect x="404" y="275.76" width="1.2" height="20.96" fill="#f4f400"/><rect x="404.5" y="274.76" width="1.2" height="3.4" fill="#c8c800"/><rect x="405" y="274.74" width="1.2" height="3.42" fill="#f4f400"/><rect x="405.5" y="275.74" width="1.2" height="5.36" fill="#f4f400"/><rect x="406" y="280.1" width="1.2" height="3.13" fill="#c8c800"/><rect x="406.5" y="276.76" width="1.2" height="5.47" fill="#c8c800"/><rect x="407" y="273.6" width="1.2" height="3.16" fill="#f4f400"/><rect x="407" y="274.37" width="1" height="13.57" fill="#e0e000" opacity="0.8"/><rect x="407.5" y="270.79" width="1.2" height="2.8" fill="#f4f400"/><rect x="408" y="270.79" width="1.2" height="14.81" fill="#f4f400"/><rect x="408" y="275.14" width="1" height="12.43" fill="#e0e000" opacity="0.8"/><rect x="408.5" y="268.62" width="1.2" height="16.98" fill="#c8c800"/><rect x="409" y="268.62" width="1.2" height="9.14" fill="#f4f400"/><rect x="409" y="272.38" width="1" height="13.89" fill="#e0e000" opacity="0.8"/><rect x="409.5" y="277.75" width="1.2" height="9.29" fill="#f4f400"/><rect x="410" y="281.23" width="1.2" height="5.81" fill="#f4f400"/><rect x="410" y="273.1" width="1" height="12.16" fill="#e0e000" opacity="0.8"/><rect x="410.5" y="281.23" width="1.2" height="2.05" fill="#f4f400"/><rect x="411" y="272.26" width="1.2" height="11.02" fill="#f4f400"/><rect x="411.5" y="272.26" width="1.2" height="12.75" fill="#c8c800"/><rect x="412" y="275.79" width="1.2" height="9.21" fill="#f4f400"/><rect x="412" y="272.5" width="1" height="14.04" fill="#e0e000" opacity="0.8"/><rect x="412.5" y="274.16" width="1.2" height="2.64" fill="#f4f400"/><rect x="413" y="275.16" width="1.2" height="8.38" fill="#f4f400"/><rect x="413.5" y="272.22" width="1.2" height="11.32" fill="#f4f400"/><rect x="414" y="269.03" width="1.2" height="3.2" fill="#f4f400"/><rect x="414" y="272.81" width="1" height="11.18" fill="#e0e000" opacity="0.8"/><rect x="414.5" y="269.03" width="1.2" height="2.71" fill="#f4f400"/><rect x="415" y="271.74" width="1.2" height="6.24" fill="#f4f400"/><rect x="415" y="275.89" width="1" height="11.13" fill="#e0e000" opacity="0.8"/><rect x="415.5" y="275.9" width="1.2" height="2.08" fill="#c8c800"/><rect x="416" y="266.65" width="1.2" height="9.25" fill="#f4f400"/><rect x="416" y="274.53" width="1" height="8.89" fill="#e0e000" opacity="0.8"/><rect x="416.5" y="266.65" width="1.2" height="13.63" fill="#f4f400"/><rect x="417" y="264.36" width="1.2" height="15.92" fill="#f4f400"/><rect x="417" y="275.54" width="1" height="9.37" fill="#e0e000" opacity="0.8"/><rect x="417.5" y="264.36" width="1.2" height="9.95" fill="#f4f400"/><rect x="418" y="274.3" width="1.2" height="19.98" fill="#f4f400"/><rect x="418" y="274.85" width="1" height="9.24" fill="#e0e000" opacity="0.8"/><rect x="418.5" y="277.84" width="1.2" height="16.44" fill="#f4f400"/><rect x="419" y="277.84" width="1.2" height="23.88" fill="#f4f400"/><rect x="419" y="274.22" width="1" height="11.89" fill="#e0e000" opacity="0.8"/><rect x="419.5" y="293.52" width="1.2" height="8.2" fill="#f4f400"/><rect x="420" y="268.82" width="1.2" height="24.71" fill="#f4f400"/><rect x="420" y="275.77" width="1" height="10.09" fill="#e0e000" opacity="0.8"/><rect x="420.5" y="268.82" width="1.2" height="14.43" fill="#f4f400"/><rect x="421" y="282.24" width="1.2" height="2.72" fill="#f4f400"/><rect x="421" y="275.49" width="1" height="14.13" fill="#e0e000" opacity="0.8"/><rect x="421.5" y="282.19" width="1.2" height="2.77" fill="#f4f400"/><rect x="422" y="283.19" width="1.2" height="14.87" fill="#f4f400"/><rect x="422" y="275.66" width="1" height="12.19" fill="#e0e000" opacity="0.8"/><rect x="422.5" y="268.67" width="1.2" height="29.39" fill="#f4f400"/><rect x="423" y="265.86" width="1.2" height="3.81" fill="#f4f400"/><rect x="423" y="278.43" width="1" height="9.89" fill="#e0e000" opacity="0.8"/><rect x="423.5" y="266.86" width="1.2" height="20.41" fill="#f4f400"/><rect x="424" y="282.78" width="1.2" height="4.49" fill="#f4f400"/><rect x="424" y="279.21" width="1" height="13.47" fill="#e0e000" opacity="0.8"/><rect x="424.5" y="280.48" width="1.2" height="3.3" fill="#f4f400"/><rect x="425" y="273.1" width="1.2" height="8.38" fill="#f4f400"/><rect x="425" y="277.76" width="1" height="10.99" fill="#e0e000" opacity="0.8"/><rect x="425.5" y="264.64" width="1.2" height="8.46" fill="#f4f400"/><rect x="426" y="264.64" width="1.2" height="25.7" fill="#f4f400"/><rect x="426" y="277.06" width="1" height="12.21" fill="#e0e000" opacity="0.8"/><rect x="426.5" y="280.8" width="1.2" height="9.54" fill="#f4f400"/><rect x="427" y="280.8" width="1.2" height="16.15" fill="#f4f400"/><rect x="427" y="276.8" width="1" height="14.28" fill="#e0e000" opacity="0.8"/><rect x="427.5" y="273.9" width="1.2" height="23.05" fill="#f4f400"/><rect x="428" y="268.62" width="1.2" height="5.27" fill="#f4f400"/><rect x="428" y="275.88" width="1" height="14.71" fill="#e0e000" opacity="0.8"/><rect x="428.5" y="268.62" width="1.2" height="4.1" fill="#f4f400"/><rect x="429" y="272.72" width="1.2" height="25.59" fill="#c8c800"/><rect x="429" y="277.56" width="1" height="12.92" fill="#e0e000" opacity="0.8"/><rect x="429.5" y="295.96" width="1.2" height="3.35" fill="#f4f400"/><rect x="430" y="282.12" width="1.2" height="14.84" fill="#c8c800"/><rect x="430" y="276.57" width="1" height="14.38" fill="#e0e000" opacity="0.8"/><rect x="430.5" y="268.24" width="1.2" height="13.88" fill="#f4f400"/><rect x="431" y="268.24" width="1.2" height="20.94" fill="#f4f400"/><rect x="431.5" y="279.04" width="1.2" height="10.14" fill="#f4f400"/><rect x="432" y="279.04" width="1.2" height="2.61" fill="#c8c800"/><rect x="432.5" y="281.64" width="1.2" height="8.36" fill="#c8c800"/><rect x="433" y="288.42" width="1.2" height="2.59" fill="#c8c800"/><rect x="433.5" y="275.8" width="1.2" height="13.62" fill="#c8c800"/><rect x="434" y="275.8" width="1.2" height="14.71" fill="#f4f400"/><rect x="434.5" y="287.21" width="1.2" height="3.3" fill="#f4f400"/><rect x="435" y="278.94" width="1.2" height="8.27" fill="#f4f400"/><rect x="435.5" y="275.13" width="1.2" height="3.8" fill="#f4f400"/><rect x="436" y="275.13" width="1.2" height="10.72" fill="#f4f400"/><rect x="436.5" y="269.49" width="1.2" height="16.36" fill="#f4f400"/><rect x="437" y="269.49" width="1.2" height="7.74" fill="#f4f400"/><rect x="437" y="275.84" width="1" height="11.71" fill="#e0e000" opacity="0.8"/><rect x="437.5" y="276.23" width="1.2" height="3.51" fill="#f4f400"/><rect x="438" y="278.74" width="1.2" height="25.94" fill="#f4f400"/><rect x="438" y="273.19" width="1" height="11.77" fill="#e0e000" opacity="0.8"/><rect x="438.5" y="287.34" width="1.2" height="17.34" fill="#f4f400"/><rect x="439" y="282.27" width="1.2" height="5.07" fill="#c8c800"/><rect x="439" y="274.09" width="1" height="11.32" fill="#e0e000" opacity="0.8"/><rect x="439.5" y="279.6" width="1.2" height="3.67" fill="#f4f400"/><rect x="440" y="280.6" width="1.2" height="2.31" fill="#f4f400"/><rect x="440" y="276.63" width="1" height="9.53" fill="#e0e000" opacity="0.8"/><rect x="440.5" y="267.84" width="1.2" height="15.08" fill="#f4f400"/><rect x="441" y="267.84" width="1.2" height="19.3" fill="#c8c800"/><rect x="441" y="275.11" width="1" height="11.98" fill="#e0e000" opacity="0.8"/><rect x="441.5" y="275.55" width="1.2" height="11.58" fill="#c8c800"/><rect x="442" y="271.08" width="1.2" height="4.47" fill="#f4f400"/><rect x="442" y="275.02" width="1" height="10.43" fill="#e0e000" opacity="0.8"/><rect x="442.5" y="271.08" width="1.2" height="5.56" fill="#c8c800"/><rect x="443" y="276.64" width="1.2" height="8.95" fill="#c8c800"/><rect x="443.5" y="281.43" width="1.2" height="4.15" fill="#f4f400"/><rect x="444" y="278.08" width="1.2" height="3.36" fill="#f4f400"/><rect x="444" y="273.74" width="1" height="14.78" fill="#e0e000" opacity="0.8"/><rect x="444.5" y="270.43" width="1.2" height="7.65" fill="#f4f400"/><rect x="445" y="270.43" width="1.2" height="10.68" fill="#f4f400"/><rect x="445" y="275.01" width="1" height="10.6" fill="#e0e000" opacity="0.8"/><rect x="445.5" y="277.45" width="1.2" height="3.66" fill="#f4f400"/><rect x="446" y="277.45" width="1.2" height="15.6" fill="#f4f400"/><rect x="446.5" y="282.25" width="1.2" height="10.79" fill="#c8c800"/><rect x="447" y="282.25" width="1.2" height="3.02" fill="#f4f400"/><rect x="447.5" y="279.55" width="1.2" height="5.72" fill="#f4f400"/><rect x="448" y="274.58" width="1.2" height="4.98" fill="#f4f400"/><rect x="448" y="277.05" width="1" height="9.11" fill="#e0e000" opacity="0.8"/><rect x="448.5" y="274.58" width="1.2" height="19" fill="#f4f400"/><rect x="449" y="284.96" width="1.2" height="8.62" fill="#f4f400"/><rect x="449" y="273.6" width="1" height="12.7" fill="#e0e000" opacity="0.8"/><rect x="449.5" y="276.73" width="1.2" height="8.23" fill="#f4f400"/><rect x="450" y="276.73" width="1.2" height="6.71" fill="#f4f400"/><rect x="450.5" y="278.36" width="1.2" height="5.07" fill="#f4f400"/><rect x="451" y="277.36" width="1.2" height="2.7" fill="#f4f400"/><rect x="451.5" y="279.06" width="1.2" height="6.86" fill="#c8c800"/><rect x="452" y="275.45" width="1.2" height="10.47" fill="#f4f400"/><rect x="452" y="271.4" width="1" height="11.98" fill="#e0e000" opacity="0.8"/><rect x="452.5" y="275.45" width="1.2" height="19.13" fill="#f4f400"/><rect x="453" y="292.4" width="1.2" height="2.18" fill="#f4f400"/><rect x="453" y="270.77" width="1" height="12.52" fill="#e0e000" opacity="0.8"/><rect x="453.5" y="278.59" width="1.2" height="13.81" fill="#f4f400"/><rect x="454" y="277.59" width="1.2" height="2.57" fill="#f4f400"/><rect x="454" y="271.23" width="1" height="12.42" fill="#e0e000" opacity="0.8"/><rect x="454.5" y="266.09" width="1.2" height="13.07" fill="#f4f400"/><rect x="455" y="266.09" width="1.2" height="8.38" fill="#f4f400"/><rect x="455" y="271.09" width="1" height="12.56" fill="#e0e000" opacity="0.8"/><rect x="455.5" y="264.97" width="1.2" height="9.5" fill="#f4f400"/><rect x="456" y="264.97" width="1.2" height="6.63" fill="#f4f400"/><rect x="456" y="271.21" width="1" height="13.55" fill="#e0e000" opacity="0.8"/><rect x="456.5" y="271.6" width="1.2" height="19.48" fill="#f4f400"/><rect x="457" y="281.57" width="1.2" height="9.51" fill="#f4f400"/><rect x="457" y="274.08" width="1" height="10.1" fill="#e0e000" opacity="0.8"/><rect x="457.5" y="271.93" width="1.2" height="9.64" fill="#f4f400"/><rect x="458" y="271.93" width="1.2" height="2.27" fill="#f4f400"/><rect x="458" y="271.68" width="1" height="12.53" fill="#e0e000" opacity="0.8"/><rect x="458.5" y="263.91" width="1.2" height="10.28" fill="#c8c800"/><rect x="459" y="263.91" width="1.2" height="5.64" fill="#f4f400"/><rect x="459" y="270.56" width="1" height="12.76" fill="#e0e000" opacity="0.8"/><rect x="459.5" y="269.55" width="1.2" height="9.17" fill="#f4f400"/><rect x="460" y="277.6" width="1.2" height="2.12" fill="#f4f400"/><rect x="460" y="273.78" width="1" height="10.47" fill="#e0e000" opacity="0.8"/><rect x="460.5" y="276.18" width="1.2" height="2.42" fill="#f4f400"/><rect x="461" y="276.18" width="1.2" height="14.16" fill="#f4f400"/><rect x="461" y="272.45" width="1" height="11.98" fill="#e0e000" opacity="0.8"/><rect x="461.5" y="287.42" width="1.2" height="2.93" fill="#f4f400"/><rect x="462" y="284.69" width="1.2" height="2.73" fill="#f4f400"/><rect x="462" y="271.24" width="1" height="11.64" fill="#e0e000" opacity="0.8"/><rect x="462.5" y="283.69" width="1.2" height="3.05" fill="#c8c800"/><rect x="463" y="265.57" width="1.2" height="20.17" fill="#f4f400"/><rect x="463.5" y="265.57" width="1.2" height="19.21" fill="#f4f400"/><rect x="464" y="273.38" width="1.2" height="11.4" fill="#c8c800"/><rect x="464.5" y="273.38" width="1.2" height="10.84" fill="#c8c800"/><rect x="465" y="257.87" width="1.2" height="26.35" fill="#f4f400"/><rect x="465" y="269.85" width="1" height="11.99" fill="#e0e000" opacity="0.8"/><rect x="465.5" y="257.87" width="1.2" height="16.48" fill="#f4f400"/><rect x="466" y="273.35" width="1.2" height="2.47" fill="#c8c800"/><rect x="466.5" y="273.82" width="1.2" height="3.47" fill="#f4f400"/><rect x="467" y="276.3" width="1.2" height="19.29" fill="#f4f400"/><rect x="467" y="270.01" width="1" height="11.37" fill="#e0e000" opacity="0.8"/><rect x="467.5" y="267.02" width="1.2" height="28.56" fill="#f4f400"/><rect x="468" y="267.02" width="1.2" height="9.27" fill="#f4f400"/><rect x="468" y="271.87" width="1" height="12.08" fill="#e0e000" opacity="0.8"/><rect x="468.5" y="275.29" width="1.2" height="3.92" fill="#c8c800"/><rect x="469" y="260.74" width="1.2" height="17.46" fill="#f4f400"/><rect x="469.5" y="260.74" width="1.2" height="5.26" fill="#f4f400"/><rect x="470" y="266" width="1.2" height="7.75" fill="#f4f400"/><rect x="470" y="269.94" width="1" height="10.43" fill="#e0e000" opacity="0.8"/><rect x="470.5" y="262.72" width="1.2" height="11.03" fill="#f4f400"/><rect x="471" y="262.72" width="1.2" height="10.48" fill="#f4f400"/><rect x="471" y="271.23" width="1" height="10.94" fill="#e0e000" opacity="0.8"/><rect x="471.5" y="273.19" width="1.2" height="10.75" fill="#f4f400"/><rect x="472" y="283.95" width="1.2" height="2.79" fill="#f4f400"/><rect x="472" y="269.67" width="1" height="12.38" fill="#e0e000" opacity="0.8"/><rect x="472.5" y="286.74" width="1.2" height="5.99" fill="#f4f400"/><rect x="473" y="272.02" width="1.2" height="20.7" fill="#f4f400"/><rect x="473.5" y="271.02" width="1.2" height="3.16" fill="#f4f400"/><rect x="474" y="273.18" width="1.2" height="15.47" fill="#f4f400"/><rect x="474" y="272.98" width="1" height="9.37" fill="#e0e000" opacity="0.8"/><rect x="474.5" y="276.79" width="1.2" height="11.86" fill="#f4f400"/><rect x="475" y="276.79" width="1.2" height="13.72" fill="#c8c800"/><rect x="475" y="271.94" width="1" height="13.05" fill="#e0e000" opacity="0.8"/><rect x="475.5" y="286.66" width="1.2" height="3.86" fill="#f4f400"/><rect x="476" y="269.61" width="1.2" height="17.05" fill="#f4f400"/><rect x="476.5" y="269.61" width="1.2" height="12.9" fill="#c8c800"/><rect x="477" y="274.45" width="1.2" height="8.06" fill="#f4f400"/><rect x="477" y="271.64" width="1" height="10.82" fill="#e0e000" opacity="0.8"/><rect x="477.5" y="273.45" width="1.2" height="2.11" fill="#f4f400"/><rect x="478" y="274.57" width="1.2" height="15.18" fill="#f4f400"/><rect x="478" y="271.37" width="1" height="13.36" fill="#e0e000" opacity="0.8"/><rect x="478.5" y="278.03" width="1.2" height="11.72" fill="#f4f400"/><rect x="479" y="277.03" width="1.2" height="3.77" fill="#f4f400"/><rect x="479" y="271.62" width="1" height="13.19" fill="#e0e000" opacity="0.8"/><rect x="479.5" y="270.96" width="1.2" height="8.85" fill="#c8c800"/><rect x="480" y="270.96" width="1.2" height="4.24" fill="#f4f400"/><rect x="480" y="269.36" width="1" height="12.23" fill="#e0e000" opacity="0.8"/><rect x="480.5" y="275.2" width="1.2" height="16.37" fill="#f4f400"/><rect x="481" y="273.74" width="1.2" height="17.84" fill="#f4f400"/><rect x="481" y="271.54" width="1" height="9.19" fill="#e0e000" opacity="0.8"/><rect x="481.5" y="273.74" width="1.2" height="2.56" fill="#f4f400"/><rect x="482" y="276.29" width="1.2" height="3.9" fill="#f4f400"/><rect x="482" y="269.26" width="1" height="14.67" fill="#e0e000" opacity="0.8"/><rect x="482.5" y="274.47" width="1.2" height="5.72" fill="#f4f400"/><rect x="483" y="274.47" width="1.2" height="8.48" fill="#f4f400"/><rect x="483" y="272.37" width="1" height="11.33" fill="#e0e000" opacity="0.8"/><rect x="483.5" y="280.92" width="1.2" height="2.03" fill="#f4f400"/><rect x="484" y="258.57" width="1.2" height="22.35" fill="#f4f400"/><rect x="484.5" y="258.57" width="1.2" height="18.59" fill="#c8c800"/><rect x="485" y="277.16" width="1.2" height="9.8" fill="#f4f400"/><rect x="485" y="271.2" width="1" height="13.66" fill="#e0e000" opacity="0.8"/><rect x="485.5" y="264.64" width="1.2" height="22.33" fill="#f4f400"/><rect x="486" y="264.64" width="1.2" height="7.5" fill="#f4f400"/><rect x="486" y="270.92" width="1" height="12.2" fill="#e0e000" opacity="0.8"/><rect x="486.5" y="272.14" width="1.2" height="18.17" fill="#f4f400"/><rect x="487" y="286.76" width="1.2" height="3.54" fill="#f4f400"/><rect x="487" y="270.05" width="1" height="11.46" fill="#e0e000" opacity="0.8"/><rect x="487.5" y="276.91" width="1.2" height="9.85" fill="#f4f400"/><rect x="488" y="276.91" width="1.2" height="4.85" fill="#f4f400"/><rect x="488" y="270.16" width="1" height="12.37" fill="#e0e000" opacity="0.8"/><rect x="488.5" y="268.1" width="1.2" height="13.66" fill="#f4f400"/><rect x="489" y="268.1" width="1.2" height="8.05" fill="#f4f400"/><rect x="489" y="270.71" width="1" height="11.34" fill="#e0e000" opacity="0.8"/><rect x="489.5" y="276.16" width="1.2" height="3.72" fill="#c8c800"/><rect x="490" y="279.88" width="1.2" height="4.67" fill="#f4f400"/><rect x="490" y="269.11" width="1" height="15.14" fill="#e0e000" opacity="0.8"/><rect x="490.5" y="274.83" width="1.2" height="9.71" fill="#c8c800"/><rect x="491" y="273.4" width="1.2" height="2.43" fill="#f4f400"/><rect x="491.5" y="274.4" width="1.2" height="12.81" fill="#f4f400"/><rect x="492" y="279.48" width="1.2" height="7.73" fill="#f4f400"/><rect x="492.5" y="279.48" width="1.2" height="5.12" fill="#f4f400"/><rect x="493" y="283.61" width="1.2" height="3.1" fill="#f4f400"/><rect x="493" y="271.9" width="1" height="11.68" fill="#e0e000" opacity="0.8"/><rect x="493.5" y="285.7" width="1.2" height="10.53" fill="#f4f400"/><rect x="494" y="280.31" width="1.2" height="15.92" fill="#f4f400"/><rect x="494" y="272.21" width="1" height="9.09" fill="#e0e000" opacity="0.8"/><rect x="494.5" y="271.04" width="1.2" height="9.27" fill="#f4f400"/><rect x="495" y="271.04" width="1.2" height="4.46" fill="#c8c800"/><rect x="495" y="270.62" width="1" height="13.12" fill="#e0e000" opacity="0.8"/><rect x="495.5" y="273.25" width="1.2" height="2.25" fill="#f4f400"/><rect x="496" y="272.25" width="1.2" height="3.66" fill="#f4f400"/><rect x="496.5" y="269.06" width="1.2" height="5.85" fill="#f4f400"/><rect x="497" y="269.06" width="1.2" height="14.99" fill="#c8c800"/><rect x="497" y="270.69" width="1" height="10.46" fill="#e0e000" opacity="0.8"/><rect x="497.5" y="283.05" width="1.2" height="2.61" fill="#f4f400"/><rect x="498" y="282.59" width="1.2" height="3.07" fill="#f4f400"/><rect x="498.5" y="282.42" width="1.2" height="2.17" fill="#f4f400"/><rect x="499" y="274.74" width="1.2" height="8.67" fill="#f4f400"/><rect x="499.5" y="274.74" width="1.2" height="9.57" fill="#f4f400"/><rect x="500" y="270.11" width="1.2" height="14.21" fill="#f4f400"/><rect x="500" y="271.35" width="1" height="10.15" fill="#e0e000" opacity="0.8"/><rect x="500.5" y="270.11" width="1.2" height="3.82" fill="#f4f400"/><rect x="501" y="262.86" width="1.2" height="11.07" fill="#c8c800"/><rect x="501.5" y="262.86" width="1.2" height="22.55" fill="#f4f400"/><rect x="502" y="270.45" width="1.2" height="14.96" fill="#f4f400"/><rect x="502" y="268.33" width="1" height="11.79" fill="#e0e000" opacity="0.8"/><rect x="502.5" y="265.25" width="1.2" height="5.2" fill="#f4f400"/><rect x="503" y="265.25" width="1.2" height="11.89" fill="#f4f400"/><rect x="503" y="271.46" width="1" height="8.32" fill="#e0e000" opacity="0.8"/><rect x="503.5" y="276.14" width="1.2" height="3.8" fill="#f4f400"/><rect x="504" y="273.75" width="1.2" height="5.2" fill="#f4f400"/><rect x="504" y="267.93" width="1" height="13.64" fill="#e0e000" opacity="0.8"/><rect x="504.5" y="273.75" width="1.2" height="2.96" fill="#f4f400"/><rect x="505" y="276.71" width="1.2" height="16.79" fill="#c8c800"/><rect x="505" y="268.51" width="1" height="14.68" fill="#e0e000" opacity="0.8"/><rect x="505.5" y="269.01" width="1.2" height="24.49" fill="#f4f400"/><rect x="506" y="269.01" width="1.2" height="7.15" fill="#f4f400"/><rect x="506" y="267.01" width="1" height="14.45" fill="#e0e000" opacity="0.8"/><rect x="506.5" y="268.29" width="1.2" height="7.87" fill="#f4f400"/><rect x="507" y="268.29" width="1.2" height="14.12" fill="#f4f400"/><rect x="507" y="267.45" width="1" height="13.86" fill="#e0e000" opacity="0.8"/><rect x="507.5" y="272.32" width="1.2" height="10.09" fill="#f4f400"/><rect x="508" y="267.61" width="1.2" height="4.71" fill="#f4f400"/><rect x="508" y="266.45" width="1" height="15.11" fill="#e0e000" opacity="0.8"/><rect x="508.5" y="261.57" width="1.2" height="6.03" fill="#f4f400"/><rect x="509" y="261.57" width="1.2" height="13.1" fill="#c8c800"/><rect x="509" y="268.24" width="1" height="9.76" fill="#e0e000" opacity="0.8"/><rect x="509.5" y="268.3" width="1.2" height="6.37" fill="#f4f400"/><rect x="510" y="265.87" width="1.2" height="2.44" fill="#f4f400"/><rect x="510" y="269.8" width="1" height="11.1" fill="#e0e000" opacity="0.8"/><rect x="510.5" y="265.87" width="1.2" height="9.19" fill="#f4f400"/><rect x="511" y="270.38" width="1.2" height="4.68" fill="#f4f400"/><rect x="511" y="267.29" width="1" height="14.47" fill="#e0e000" opacity="0.8"/><rect x="511.5" y="269.38" width="1.2" height="3.81" fill="#c8c800"/><rect x="512" y="270.9" width="1.2" height="2.28" fill="#f4f400"/><rect x="512" y="271.91" width="1" height="11.76" fill="#e0e000" opacity="0.8"/><rect x="512.5" y="271.9" width="1.2" height="6.98" fill="#f4f400"/><rect x="513" y="277.88" width="1.2" height="3.13" fill="#f4f400"/><rect x="513" y="269.51" width="1" height="10.41" fill="#e0e000" opacity="0.8"/><rect x="513.5" y="274.73" width="1.2" height="5.29" fill="#c8c800"/><rect x="514" y="273.73" width="1.2" height="3.02" fill="#f4f400"/><rect x="514" y="268.03" width="1" height="13.78" fill="#e0e000" opacity="0.8"/><rect x="514.5" y="269.21" width="1.2" height="6.53" fill="#f4f400"/><rect x="515" y="269.21" width="1.2" height="11.55" fill="#f4f400"/><rect x="515" y="269.04" width="1" height="10.92" fill="#e0e000" opacity="0.8"/><rect x="515.5" y="277.94" width="1.2" height="3.82" fill="#f4f400"/><rect x="516" y="277.94" width="1.2" height="2.95" fill="#f4f400"/><rect x="516.5" y="278.88" width="1.2" height="3.26" fill="#f4f400"/><rect x="517" y="272.45" width="1.2" height="8.69" fill="#f4f400"/><rect x="517" y="271.33" width="1" height="9.47" fill="#e0e000" opacity="0.8"/><rect x="517.5" y="272.45" width="1.2" height="13.32" fill="#c8c800"/><rect x="518" y="279.06" width="1.2" height="6.71" fill="#c8c800"/><rect x="518.5" y="277.01" width="1.2" height="2.04" fill="#f4f400"/><rect x="519" y="264.59" width="1.2" height="12.42" fill="#f4f400"/><rect x="519" y="270.64" width="1" height="9.48" fill="#e0e000" opacity="0.8"/><rect x="519.5" y="264.59" width="1.2" height="16.19" fill="#f4f400"/><rect x="520" y="280.78" width="1.2" height="8.65" fill="#f4f400"/><rect x="520" y="271" width="1" height="10.57" fill="#e0e000" opacity="0.8"/><rect x="520.5" y="273.24" width="1.2" height="16.2" fill="#f4f400"/><rect x="521" y="273.24" width="1.2" height="3.42" fill="#c8c800"/><rect x="521" y="270.38" width="1" height="11.86" fill="#e0e000" opacity="0.8"/><rect x="521.5" y="274.51" width="1.2" height="3.15" fill="#f4f400"/><rect x="522" y="275.51" width="1.2" height="12.17" fill="#f4f400"/><rect x="522" y="268.14" width="1" height="12.24" fill="#e0e000" opacity="0.8"/><rect x="522.5" y="274.67" width="1.2" height="13.01" fill="#f4f400"/><rect x="523" y="274.67" width="1.2" height="4.41" fill="#f4f400"/><rect x="523.5" y="278.07" width="1.2" height="3.94" fill="#f4f400"/><rect x="524" y="268.32" width="1.2" height="12.7" fill="#f4f400"/><rect x="524" y="267.96" width="1" height="13.58" fill="#e0e000" opacity="0.8"/><rect x="524.5" y="268.32" width="1.2" height="4.03" fill="#c8c800"/><rect x="525" y="271.34" width="1.2" height="3.81" fill="#f4f400"/><rect x="525" y="267.12" width="1" height="13.21" fill="#e0e000" opacity="0.8"/><rect x="525.5" y="263.57" width="1.2" height="10.59" fill="#f4f400"/><rect x="526" y="263.57" width="1.2" height="13.68" fill="#f4f400"/><rect x="526" y="267.13" width="1" height="13.95" fill="#e0e000" opacity="0.8"/><rect x="526.5" y="277.25" width="1.2" height="16.49" fill="#f4f400"/><rect x="527" y="276.38" width="1.2" height="17.36" fill="#f4f400"/><rect x="527" y="267.56" width="1" height="13.9" fill="#e0e000" opacity="0.8"/><rect x="527.5" y="276.38" width="1.2" height="6.93" fill="#f4f400"/><rect x="528" y="280.94" width="1.2" height="3.37" fill="#c8c800"/><rect x="528.5" y="280.94" width="1.2" height="2.72" fill="#c8c800"/><rect x="529" y="265.39" width="1.2" height="17.27" fill="#c8c800"/><rect x="529" y="270.39" width="1" height="10.27" fill="#e0e000" opacity="0.8"/><rect x="529.5" y="265.39" width="1.2" height="13.71" fill="#f4f400"/><rect x="530" y="277.25" width="1.2" height="2.85" fill="#c8c800"/><rect x="530" y="271.7" width="1" height="9.02" fill="#e0e000" opacity="0.8"/><rect x="530.5" y="275.82" width="1.2" height="3.43" fill="#f4f400"/><rect x="531" y="275.82" width="1.2" height="3.81" fill="#f4f400"/><rect x="531" y="270.17" width="1" height="14.58" fill="#e0e000" opacity="0.8"/><rect x="531.5" y="278.63" width="1.2" height="2.39" fill="#f4f400"/><rect x="532" y="277.6" width="1.2" height="3.42" fill="#f4f400"/><rect x="532" y="269.74" width="1" height="12.68" fill="#e0e000" opacity="0.8"/><rect x="532.5" y="277.6" width="1.2" height="8.26" fill="#f4f400"/><rect x="533" y="285.86" width="1.2" height="7.37" fill="#f4f400"/><rect x="533" y="273.28" width="1" height="12.04" fill="#e0e000" opacity="0.8"/><rect x="533.5" y="280.82" width="1.2" height="12.42" fill="#f4f400"/><rect x="534" y="279.82" width="1.2" height="3.72" fill="#c8c800"/><rect x="534.5" y="279.98" width="1.2" height="2.56" fill="#c8c800"/><rect x="535" y="277.68" width="1.2" height="2.3" fill="#f4f400"/><rect x="535" y="273.62" width="1" height="12.08" fill="#e0e000" opacity="0.8"/><rect x="535.5" y="277.68" width="1.2" height="25.47" fill="#f4f400"/><rect x="536" y="278.14" width="1.2" height="25.01" fill="#f4f400"/><rect x="536" y="269.25" width="1" height="15.24" fill="#e0e000" opacity="0.8"/><rect x="536.5" y="274.14" width="1.2" height="4.01" fill="#f4f400"/><rect x="537" y="274.14" width="1.2" height="10.54" fill="#f4f400"/><rect x="537" y="271.54" width="1" height="11.02" fill="#e0e000" opacity="0.8"/><rect x="537.5" y="273.73" width="1.2" height="10.95" fill="#c8c800"/><rect x="538" y="271.7" width="1.2" height="3.03" fill="#f4f400"/><rect x="538" y="270.83" width="1" height="10.84" fill="#e0e000" opacity="0.8"/><rect x="538.5" y="272.7" width="1.2" height="11.33" fill="#c8c800"/><rect x="539" y="269.03" width="1.2" height="14.99" fill="#f4f400"/><rect x="539" y="269.18" width="1" height="13.39" fill="#e0e000" opacity="0.8"/><rect x="539.5" y="267.41" width="1.2" height="2.62" fill="#f4f400"/><rect x="540" y="268.41" width="1.2" height="2.72" fill="#f4f400"/><rect x="540" y="270.64" width="1" height="11.99" fill="#e0e000" opacity="0.8"/><rect x="540.5" y="260.76" width="1.2" height="10.37" fill="#f4f400"/><rect x="541" y="260.76" width="1.2" height="17.43" fill="#f4f400"/><rect x="541.5" y="278.19" width="1.2" height="12.18" fill="#f4f400"/><rect x="542" y="278.63" width="1.2" height="11.74" fill="#f4f400"/><rect x="542" y="271.49" width="1" height="14.22" fill="#e0e000" opacity="0.8"/><rect x="542.5" y="278.63" width="1.2" height="14.57" fill="#f4f400"/><rect x="543" y="288.29" width="1.2" height="4.91" fill="#f4f400"/><rect x="543.5" y="255.95" width="1.2" height="32.34" fill="#f4f400"/><rect x="544" y="255.95" width="1.2" height="25.4" fill="#f4f400"/><rect x="544" y="273.95" width="1" height="11.3" fill="#e0e000" opacity="0.8"/><rect x="544.5" y="262.09" width="1.2" height="19.26" fill="#c8c800"/><rect x="545" y="262.09" width="1.2" height="22" fill="#f4f400"/><rect x="545" y="272.05" width="1" height="13.75" fill="#e0e000" opacity="0.8"/><rect x="545.5" y="284.09" width="1.2" height="9.49" fill="#f4f400"/><rect x="546" y="282.46" width="1.2" height="11.12" fill="#c8c800"/><rect x="546" y="272" width="1" height="13.54" fill="#e0e000" opacity="0.8"/><rect x="546.5" y="273.53" width="1.2" height="8.94" fill="#f4f400"/><rect x="547" y="263.11" width="1.2" height="10.41" fill="#f4f400"/><rect x="547" y="272.96" width="1" height="9.19" fill="#e0e000" opacity="0.8"/><rect x="547.5" y="263.11" width="1.2" height="19.84" fill="#f4f400"/><rect x="548" y="280.85" width="1.2" height="2.11" fill="#f4f400"/><rect x="548" y="270.35" width="1" height="10.63" fill="#e0e000" opacity="0.8"/><rect x="548.5" y="268.07" width="1.2" height="12.78" fill="#f4f400"/><rect x="549" y="268.07" width="1.2" height="9.68" fill="#f4f400"/><rect x="549.5" y="275.3" width="1.2" height="2.45" fill="#c8c800"/><rect x="550" y="275.3" width="1.2" height="10.84" fill="#c8c800"/><rect x="550" y="269.68" width="1" height="15.25" fill="#e0e000" opacity="0.8"/><rect x="550.5" y="286.14" width="1.2" height="6.81" fill="#c8c800"/><rect x="551" y="267.45" width="1.2" height="25.5" fill="#f4f400"/><rect x="551" y="271.84" width="1" height="11.64" fill="#e0e000" opacity="0.8"/><rect x="551.5" y="266.45" width="1.2" height="3.16" fill="#c8c800"/><rect x="552" y="265.77" width="1.2" height="3.84" fill="#f4f400"/><rect x="552" y="271.02" width="1" height="12.29" fill="#e0e000" opacity="0.8"/><rect x="552.5" y="266.77" width="1.2" height="7.2" fill="#f4f400"/><rect x="553" y="273.97" width="1.2" height="4.19" fill="#c8c800"/><rect x="553" y="272.01" width="1" height="11.21" fill="#e0e000" opacity="0.8"/><rect x="553.5" y="270.85" width="1.2" height="7.32" fill="#f4f400"/><rect x="554" y="265.32" width="1.2" height="5.53" fill="#f4f400"/><rect x="554.5" y="265.32" width="1.2" height="12.31" fill="#f4f400"/><rect x="555" y="276.63" width="1.2" height="3.39" fill="#f4f400"/><rect x="555" y="270.39" width="1" height="12.49" fill="#e0e000" opacity="0.8"/><rect x="555.5" y="275.81" width="1.2" height="3.22" fill="#f4f400"/><rect x="556" y="273.2" width="1.2" height="2.61" fill="#f4f400"/><rect x="556.5" y="257.84" width="1.2" height="15.36" fill="#c8c800"/><rect x="557" y="257.84" width="1.2" height="12.38" fill="#f4f400"/><rect x="557" y="267.07" width="1" height="12.05" fill="#e0e000" opacity="0.8"/><rect x="557.5" y="268.55" width="1.2" height="2.67" fill="#f4f400"/><rect x="558" y="263.18" width="1.2" height="6.37" fill="#f4f400"/><rect x="558" y="267.56" width="1" height="15.46" fill="#e0e000" opacity="0.8"/><rect x="558.5" y="263.18" width="1.2" height="20.61" fill="#f4f400"/><rect x="559" y="274.18" width="1.2" height="9.61" fill="#f4f400"/><rect x="559.5" y="274.18" width="1.2" height="8.48" fill="#f4f400"/><rect x="560" y="278.21" width="1.2" height="4.45" fill="#c8c800"/><rect x="560.5" y="278.21" width="1.2" height="7.4" fill="#f4f400"/><rect x="561" y="275.8" width="1.2" height="9.81" fill="#c8c800"/><rect x="561" y="270.42" width="1" height="13.12" fill="#e0e000" opacity="0.8"/><rect x="561.5" y="275.8" width="1.2" height="7.85" fill="#f4f400"/><rect x="562" y="281.03" width="1.2" height="3.62" fill="#f4f400"/><rect x="562.5" y="282.03" width="1.2" height="11.03" fill="#c8c800"/><rect x="563" y="279" width="1.2" height="14.06" fill="#c8c800"/><rect x="563" y="271.84" width="1" height="12.25" fill="#e0e000" opacity="0.8"/><rect x="563.5" y="279" width="1.2" height="2.06" fill="#f4f400"/><rect x="564" y="277.34" width="1.2" height="3.72" fill="#c8c800"/><rect x="564" y="271.13" width="1" height="15.45" fill="#e0e000" opacity="0.8"/><rect x="564.5" y="266.05" width="1.2" height="11.29" fill="#f4f400"/><rect x="565" y="266.05" width="1.2" height="18.02" fill="#f4f400"/><rect x="565" y="273.29" width="1" height="11.77" fill="#e0e000" opacity="0.8"/><rect x="565.5" y="283.07" width="1.2" height="2.87" fill="#f4f400"/><rect x="566" y="262.22" width="1.2" height="22.72" fill="#f4f400"/><rect x="566" y="272.7" width="1" height="10.45" fill="#e0e000" opacity="0.8"/><rect x="566.5" y="262.22" width="1.2" height="14.82" fill="#f4f400"/><rect x="567" y="275.77" width="1.2" height="2.28" fill="#c8c800"/><rect x="567" y="274.69" width="1" height="9.8" fill="#e0e000" opacity="0.8"/><rect x="567.5" y="276.77" width="1.2" height="7.19" fill="#f4f400"/><rect x="568" y="271.06" width="1.2" height="12.9" fill="#f4f400"/><rect x="568" y="271.88" width="1" height="13.37" fill="#e0e000" opacity="0.8"/><rect x="568.5" y="271.06" width="1.2" height="7.15" fill="#f4f400"/><rect x="569" y="278.21" width="1.2" height="15.9" fill="#f4f400"/><rect x="569" y="273.46" width="1" height="13.57" fill="#e0e000" opacity="0.8"/><rect x="569.5" y="277.47" width="1.2" height="16.64" fill="#f4f400"/><rect x="570" y="277.47" width="1.2" height="18.01" fill="#f4f400"/><rect x="570.5" y="295.48" width="1.2" height="4.19" fill="#f4f400"/><rect x="571" y="276.52" width="1.2" height="23.15" fill="#f4f400"/><rect x="571" y="271.18" width="1" height="12.51" fill="#e0e000" opacity="0.8"/><rect x="571.5" y="275.52" width="1.2" height="2.07" fill="#f4f400"/><rect x="572" y="267.64" width="1.2" height="8.95" fill="#f4f400"/><rect x="572" y="272.66" width="1" height="12.82" fill="#e0e000" opacity="0.8"/><rect x="572.5" y="267.64" width="1.2" height="12.31" fill="#c8c800"/><rect x="573" y="279.95" width="1.2" height="16.5" fill="#f4f400"/><rect x="573.5" y="285.79" width="1.2" height="10.66" fill="#f4f400"/><rect x="574" y="285.79" width="1.2" height="3.74" fill="#c8c800"/><rect x="574.5" y="272.55" width="1.2" height="16.98" fill="#f4f400"/><rect x="575" y="272.55" width="1.2" height="8.75" fill="#f4f400"/><rect x="575" y="273.89" width="1" height="10.14" fill="#e0e000" opacity="0.8"/><rect x="575.5" y="278.56" width="1.2" height="2.74" fill="#f4f400"/><rect x="576" y="278.56" width="1.2" height="8.33" fill="#f4f400"/><rect x="576.5" y="286.89" width="1.2" height="8.26" fill="#f4f400"/><rect x="577" y="273.1" width="1.2" height="22.05" fill="#f4f400"/><rect x="577" y="273.28" width="1" height="12.74" fill="#e0e000" opacity="0.8"/><rect x="577.5" y="273.1" width="1.2" height="10.16" fill="#f4f400"/><rect x="578" y="277.33" width="1.2" height="5.92" fill="#f4f400"/><rect x="578" y="274.66" width="1" height="10.77" fill="#e0e000" opacity="0.8"/><rect x="578.5" y="265.42" width="1.2" height="11.91" fill="#f4f400"/><rect x="579" y="265.42" width="1.2" height="8.64" fill="#f4f400"/><rect x="579" y="272.43" width="1" height="10.51" fill="#e0e000" opacity="0.8"/><rect x="579.5" y="274.07" width="1.2" height="9.54" fill="#f4f400"/><rect x="580" y="275.71" width="1.2" height="7.9" fill="#f4f400"/><rect x="580" y="270.74" width="1" height="12.24" fill="#e0e000" opacity="0.8"/><rect x="580.5" y="275.71" width="1.2" height="7.39" fill="#f4f400"/><rect x="581" y="276.99" width="1.2" height="6.11" fill="#f4f400"/><rect x="581" y="273.34" width="1" height="10.81" fill="#e0e000" opacity="0.8"/><rect x="581.5" y="276.99" width="1.2" height="3.14" fill="#c8c800"/><rect x="582" y="270.88" width="1.2" height="9.24" fill="#f4f400"/><rect x="582.5" y="270.88" width="1.2" height="13.73" fill="#f4f400"/><rect x="583" y="277.3" width="1.2" height="7.31" fill="#f4f400"/><rect x="583" y="272.67" width="1" height="13.59" fill="#e0e000" opacity="0.8"/><rect x="583.5" y="277.3" width="1.2" height="3.85" fill="#f4f400"/><rect x="584" y="270.91" width="1.2" height="10.24" fill="#f4f400"/><rect x="584" y="271.36" width="1" height="13.32" fill="#e0e000" opacity="0.8"/><rect x="584.5" y="270.91" width="1.2" height="9.94" fill="#f4f400"/><rect x="585" y="273.93" width="1.2" height="6.92" fill="#f4f400"/><rect x="585" y="273.54" width="1" height="13.29" fill="#e0e000" opacity="0.8"/><rect x="585.5" y="269.09" width="1.2" height="4.83" fill="#f4f400"/><rect x="586" y="269.09" width="1.2" height="22.03" fill="#f4f400"/><rect x="586.5" y="285.41" width="1.2" height="5.72" fill="#f4f400"/><rect x="587" y="277.46" width="1.2" height="7.95" fill="#f4f400"/><rect x="587" y="273.18" width="1" height="14.33" fill="#e0e000" opacity="0.8"/><rect x="587.5" y="271.28" width="1.2" height="6.19" fill="#c8c800"/><rect x="588" y="271.28" width="1.2" height="22.52" fill="#f4f400"/><rect x="588" y="271.98" width="1" height="11.85" fill="#e0e000" opacity="0.8"/><rect x="588.5" y="286.35" width="1.2" height="7.44" fill="#c8c800"/><rect x="589" y="277.17" width="1.2" height="9.19" fill="#f4f400"/><rect x="589" y="273.9" width="1" height="9.75" fill="#e0e000" opacity="0.8"/><rect x="589.5" y="277.17" width="1.2" height="7.2" fill="#f4f400"/><rect x="590" y="273.75" width="1.2" height="10.61" fill="#c8c800"/><rect x="590" y="274.39" width="1" height="12.65" fill="#e0e000" opacity="0.8"/><rect x="590.5" y="270.53" width="1.2" height="3.22" fill="#f4f400"/><rect x="591" y="270.53" width="1.2" height="25.01" fill="#f4f400"/><rect x="591" y="273.2" width="1" height="10.56" fill="#e0e000" opacity="0.8"/><rect x="591.5" y="286.47" width="1.2" height="9.08" fill="#c8c800"/><rect x="592" y="269.34" width="1.2" height="17.12" fill="#f4f400"/><rect x="592" y="271.83" width="1" height="11.93" fill="#e0e000" opacity="0.8"/><rect x="592.5" y="269.34" width="1.2" height="16.56" fill="#c8c800"/><rect x="593" y="278.8" width="1.2" height="7.1" fill="#f4f400"/><rect x="593" y="275.17" width="1" height="11.76" fill="#e0e000" opacity="0.8"/><rect x="593.5" y="277.8" width="1.2" height="3.27" fill="#c8c800"/><rect x="594" y="280.08" width="1.2" height="6.99" fill="#f4f400"/><rect x="594" y="275.31" width="1" height="9.17" fill="#e0e000" opacity="0.8"/><rect x="594.5" y="287.06" width="1.2" height="3.84" fill="#f4f400"/><rect x="595" y="278.75" width="1.2" height="12.15" fill="#c8c800"/><rect x="595.5" y="273.23" width="1.2" height="5.52" fill="#f4f400"/><rect x="596" y="273.23" width="1.2" height="8.28" fill="#f4f400"/><rect x="596" y="275.5" width="1" height="10.27" fill="#e0e000" opacity="0.8"/><rect x="596.5" y="265.67" width="1.2" height="15.84" fill="#f4f400"/><rect x="597" y="265.67" width="1.2" height="13.41" fill="#f4f400"/><rect x="597" y="276.63" width="1" height="11.78" fill="#e0e000" opacity="0.8"/><rect x="597.5" y="276.18" width="1.2" height="3.9" fill="#f4f400"/><rect x="598" y="277.18" width="1.2" height="6.34" fill="#f4f400"/><rect x="598" y="274.2" width="1" height="11.47" fill="#e0e000" opacity="0.8"/><rect x="598.5" y="283.51" width="1.2" height="3.41" fill="#f4f400"/><rect x="599" y="278.31" width="1.2" height="8.61" fill="#c8c800"/><rect x="599.5" y="277.31" width="1.2" height="3.49" fill="#f4f400"/><rect x="600" y="268.46" width="1.2" height="11.33" fill="#f4f400"/><rect x="600.5" y="268.46" width="1.2" height="4.49" fill="#c8c800"/><rect x="601" y="272.95" width="1.2" height="3.46" fill="#f4f400"/><rect x="601" y="274.81" width="1" height="9.81" fill="#e0e000" opacity="0.8"/><rect x="601.5" y="276.41" width="1.2" height="12.28" fill="#f4f400"/><rect x="602" y="276" width="1.2" height="12.69" fill="#c8c800"/><rect x="602.5" y="276" width="1.2" height="9.55" fill="#f4f400"/><rect x="603" y="283.32" width="1.2" height="2.23" fill="#f4f400"/><rect x="603" y="273.68" width="1" height="11.97" fill="#e0e000" opacity="0.8"/><rect x="603.5" y="281.86" width="1.2" height="2.47" fill="#f4f400"/><rect x="604" y="282.86" width="1.2" height="8.55" fill="#f4f400"/><rect x="604" y="276.46" width="1" height="8.38" fill="#e0e000" opacity="0.8"/><rect x="604.5" y="286.32" width="1.2" height="5.09" fill="#c8c800"/><rect x="605" y="280.02" width="1.2" height="6.29" fill="#f4f400"/><rect x="605" y="274.11" width="1" height="11.46" fill="#e0e000" opacity="0.8"/><rect x="605.5" y="280.02" width="1.2" height="3.75" fill="#f4f400"/><rect x="606" y="278.39" width="1.2" height="5.38" fill="#f4f400"/><rect x="606.5" y="278.39" width="1.2" height="18.77" fill="#f4f400"/><rect x="607" y="279.42" width="1.2" height="17.75" fill="#f4f400"/><rect x="607.5" y="279.42" width="1.2" height="3.08" fill="#f4f400"/><rect x="608" y="281.5" width="1.2" height="3.2" fill="#c8c800"/><rect x="608" y="273.33" width="1" height="10.94" fill="#e0e000" opacity="0.8"/><rect x="608.5" y="281.18" width="1.2" height="3.52" fill="#f4f400"/><rect x="609" y="280.34" width="1.2" height="2.85" fill="#f4f400"/><rect x="609.5" y="281.34" width="1.2" height="4.3" fill="#f4f400"/><rect x="610" y="282.98" width="1.2" height="3.65" fill="#f4f400"/><rect x="610" y="275.45" width="1" height="11.37" fill="#e0e000" opacity="0.8"/><rect x="610.5" y="281.76" width="1.2" height="3.23" fill="#f4f400"/><rect x="611" y="267.13" width="1.2" height="15.63" fill="#f4f400"/><rect x="611" y="272.13" width="1" height="14.27" fill="#e0e000" opacity="0.8"/><rect x="611.5" y="267.13" width="1.2" height="6.75" fill="#c8c800"/><rect x="612" y="273.88" width="1.2" height="17.21" fill="#f4f400"/><rect x="612" y="275.51" width="1" height="10.69" fill="#e0e000" opacity="0.8"/><rect x="612.5" y="277.13" width="1.2" height="13.96" fill="#c8c800"/><rect x="613" y="273.59" width="1.2" height="3.53" fill="#c8c800"/><rect x="613" y="271.44" width="1" height="13.18" fill="#e0e000" opacity="0.8"/><rect x="613.5" y="273.59" width="1.2" height="10.76" fill="#f4f400"/><rect x="614" y="275.91" width="1.2" height="8.44" fill="#f4f400"/><rect x="614.5" y="272.19" width="1.2" height="3.72" fill="#f4f400"/><rect x="615" y="266.73" width="1.2" height="5.46" fill="#f4f400"/><rect x="615" y="271.24" width="1" height="13.15" fill="#e0e000" opacity="0.8"/><rect x="615.5" y="264.44" width="1.2" height="2.28" fill="#f4f400"/><rect x="616" y="264.44" width="1.2" height="14.3" fill="#f4f400"/><rect x="616" y="271.17" width="1" height="13.81" fill="#e0e000" opacity="0.8"/><rect x="616.5" y="264.33" width="1.2" height="14.42" fill="#c8c800"/><rect x="617" y="264.33" width="1.2" height="9.43" fill="#f4f400"/><rect x="617" y="272.07" width="1" height="13.31" fill="#e0e000" opacity="0.8"/><rect x="617.5" y="271.24" width="1.2" height="2.52" fill="#f4f400"/><rect x="618" y="269.09" width="1.2" height="3.15" fill="#f4f400"/><rect x="618" y="271.98" width="1" height="14.22" fill="#e0e000" opacity="0.8"/><rect x="618.5" y="264.69" width="1.2" height="5.4" fill="#f4f400"/><rect x="619" y="264.69" width="1.2" height="12.26" fill="#f4f400"/><rect x="619" y="272.35" width="1" height="9.99" fill="#e0e000" opacity="0.8"/><rect x="619.5" y="276.95" width="1.2" height="5.23" fill="#c8c800"/><rect x="620" y="281.17" width="1.2" height="3.13" fill="#f4f400"/><rect x="620" y="270.98" width="1" height="12.01" fill="#e0e000" opacity="0.8"/><rect x="620.5" y="272.64" width="1.2" height="10.66" fill="#f4f400"/><rect x="621" y="272.64" width="1.2" height="7.12" fill="#c8c800"/><rect x="621.5" y="278.76" width="1.2" height="3.03" fill="#f4f400"/><rect x="622" y="280.79" width="1.2" height="5.33" fill="#c8c800"/><rect x="622.5" y="267.61" width="1.2" height="18.51" fill="#f4f400"/><rect x="623" y="267.61" width="1.2" height="14.59" fill="#f4f400"/><rect x="623" y="271.08" width="1" height="14.64" fill="#e0e000" opacity="0.8"/><rect x="623.5" y="280.15" width="1.2" height="3.05" fill="#f4f400"/><rect x="624" y="281.15" width="1.2" height="5.3" fill="#f4f400"/><rect x="624" y="272.94" width="1" height="10.39" fill="#e0e000" opacity="0.8"/><rect x="624.5" y="285.45" width="1.2" height="3.1" fill="#f4f400"/><rect x="625" y="272.04" width="1.2" height="15.51" fill="#f4f400"/><rect x="625" y="272.86" width="1" height="12.74" fill="#e0e000" opacity="0.8"/><rect x="625.5" y="263.38" width="1.2" height="8.66" fill="#f4f400"/><rect x="626" y="263.38" width="1.2" height="25.38" fill="#f4f400"/><rect x="626" y="274.94" width="1" height="12.36" fill="#e0e000" opacity="0.8"/><rect x="626.5" y="271.93" width="1.2" height="16.82" fill="#f4f400"/><rect x="627" y="271.93" width="1.2" height="5.75" fill="#f4f400"/><rect x="627" y="274.58" width="1" height="12.17" fill="#e0e000" opacity="0.8"/><rect x="627.5" y="276.68" width="1.2" height="2.97" fill="#f4f400"/><rect x="628" y="278.65" width="1.2" height="11.46" fill="#f4f400"/><rect x="628" y="271.65" width="1" height="14.69" fill="#e0e000" opacity="0.8"/><rect x="628.5" y="278.04" width="1.2" height="12.07" fill="#f4f400"/><rect x="629" y="266.34" width="1.2" height="11.7" fill="#f4f400"/><rect x="629" y="272.59" width="1" height="13.57" fill="#e0e000" opacity="0.8"/><rect x="629.5" y="266.34" width="1.2" height="6.03" fill="#f4f400"/><rect x="630" y="272.36" width="1.2" height="4.57" fill="#f4f400"/><rect x="630.5" y="276.94" width="1.2" height="3.2" fill="#f4f400"/><rect x="631" y="279.14" width="1.2" height="3.92" fill="#f4f400"/><rect x="631" y="272.42" width="1" height="10.62" fill="#e0e000" opacity="0.8"/><rect x="631.5" y="275.76" width="1.2" height="6.3" fill="#c8c800"/><rect x="632" y="275.76" width="1.2" height="5.82" fill="#c8c800"/><rect x="632" y="269.84" width="1" height="12.37" fill="#e0e000" opacity="0.8"/><rect x="632.5" y="281.58" width="1.2" height="10.9" fill="#f4f400"/><rect x="633" y="266.7" width="1.2" height="25.78" fill="#f4f400"/><rect x="633" y="269.32" width="1" height="13.79" fill="#e0e000" opacity="0.8"/><rect x="633.5" y="266.7" width="1.2" height="6.31" fill="#f4f400"/><rect x="634" y="273.01" width="1.2" height="3.77" fill="#f4f400"/><rect x="634" y="268.73" width="1" height="12.82" fill="#e0e000" opacity="0.8"/><rect x="634.5" y="274.36" width="1.2" height="2.42" fill="#f4f400"/><rect x="635" y="274.36" width="1.2" height="2.63" fill="#c8c800"/><rect x="635" y="271.5" width="1" height="11.81" fill="#e0e000" opacity="0.8"/><rect x="635.5" y="265.59" width="1.2" height="11.4" fill="#f4f400"/><rect x="636" y="265.59" width="1.2" height="12.87" fill="#f4f400"/><rect x="636" y="271.75" width="1" height="12.79" fill="#e0e000" opacity="0.8"/><rect x="636.5" y="269.99" width="1.2" height="8.47" fill="#f4f400"/><rect x="637" y="268.53" width="1.2" height="2.46" fill="#c8c800"/><rect x="637" y="272.98" width="1" height="9.62" fill="#e0e000" opacity="0.8"/><rect x="637.5" y="269.53" width="1.2" height="7.02" fill="#f4f400"/><rect x="638" y="274.46" width="1.2" height="2.09" fill="#f4f400"/><rect x="638" y="271.88" width="1" height="14.53" fill="#e0e000" opacity="0.8"/><rect x="638.5" y="270.81" width="1.2" height="3.65" fill="#f4f400"/><rect x="639" y="270.81" width="1.2" height="9.11" fill="#c8c800"/><rect x="639" y="272.41" width="1" height="13.88" fill="#e0e000" opacity="0.8"/><rect x="639.5" y="270.98" width="1.2" height="8.94" fill="#f4f400"/><rect x="640" y="270.98" width="1.2" height="6.3" fill="#f4f400"/><rect x="640" y="272.9" width="1" height="12.39" fill="#e0e000" opacity="0.8"/><rect x="640.5" y="270.44" width="1.2" height="6.84" fill="#f4f400"/><rect x="641" y="269.15" width="1.2" height="2.28" fill="#f4f400"/><rect x="641" y="274.87" width="1" height="11.64" fill="#e0e000" opacity="0.8"/><rect x="641.5" y="261.21" width="1.2" height="8.95" fill="#f4f400"/><rect x="642" y="261.21" width="1.2" height="22.1" fill="#f4f400"/><rect x="642" y="272.26" width="1" height="11.39" fill="#e0e000" opacity="0.8"/><rect x="642.5" y="282.31" width="1.2" height="2.72" fill="#f4f400"/><rect x="643" y="274.17" width="1.2" height="9.87" fill="#f4f400"/><rect x="643" y="271.63" width="1" height="12.01" fill="#e0e000" opacity="0.8"/><rect x="643.5" y="272.9" width="1.2" height="2.27" fill="#c8c800"/><rect x="644" y="273.9" width="1.2" height="19.41" fill="#f4f400"/><rect x="644" y="272.03" width="1" height="13.24" fill="#e0e000" opacity="0.8"/><rect x="644.5" y="281.37" width="1.2" height="11.95" fill="#f4f400"/><rect x="645" y="280.37" width="1.2" height="2.01" fill="#c8c800"/><rect x="645.5" y="281.38" width="1.2" height="12.51" fill="#c8c800"/><rect x="646" y="274.19" width="1.2" height="19.7" fill="#f4f400"/><rect x="646" y="272.29" width="1" height="11.19" fill="#e0e000" opacity="0.8"/><rect x="646.5" y="274.19" width="1.2" height="4.48" fill="#f4f400"/><rect x="647" y="278.66" width="1.2" height="3.11" fill="#f4f400"/><rect x="647" y="270.81" width="1" height="11.6" fill="#e0e000" opacity="0.8"/><rect x="647.5" y="281.77" width="1.2" height="7.2" fill="#f4f400"/><rect x="648" y="287.97" width="1.2" height="3.34" fill="#c8c800"/><rect x="648" y="271.33" width="1" height="11.13" fill="#e0e000" opacity="0.8"/><rect x="648.5" y="276.13" width="1.2" height="14.18" fill="#f4f400"/><rect x="649" y="275.13" width="1.2" height="3.2" fill="#f4f400"/><rect x="649" y="272.63" width="1" height="14.49" fill="#e0e000" opacity="0.8"/><rect x="649.5" y="268.89" width="1.2" height="8.45" fill="#f4f400"/><rect x="650" y="267.63" width="1.2" height="2.25" fill="#f4f400"/><rect x="650" y="273.94" width="1" height="9.04" fill="#e0e000" opacity="0.8"/><rect x="650.5" y="268.63" width="1.2" height="22.24" fill="#f4f400"/><rect x="651" y="289.83" width="1.2" height="2.04" fill="#c8c800"/><rect x="651" y="275.2" width="1" height="10.69" fill="#e0e000" opacity="0.8"/><rect x="651.5" y="272.7" width="1.2" height="18.13" fill="#f4f400"/><rect x="652" y="272.7" width="1.2" height="22.36" fill="#c8c800"/><rect x="652.5" y="281.16" width="1.2" height="13.9" fill="#f4f400"/><rect x="653" y="281.16" width="1.2" height="2.96" fill="#f4f400"/><rect x="653" y="272.4" width="1" height="11.86" fill="#e0e000" opacity="0.8"/><rect x="653.5" y="264.03" width="1.2" height="20.09" fill="#f4f400"/><rect x="654" y="264.03" width="1.2" height="12.94" fill="#f4f400"/><rect x="654.5" y="276.97" width="1.2" height="2.17" fill="#f4f400"/><rect x="655" y="278.14" width="1.2" height="2.53" fill="#f4f400"/><rect x="655" y="274.49" width="1" height="9.3" fill="#e0e000" opacity="0.8"/><rect x="655.5" y="279.66" width="1.2" height="15.41" fill="#f4f400"/><rect x="656" y="277.23" width="1.2" height="17.84" fill="#f4f400"/><rect x="656" y="273.48" width="1" height="11.48" fill="#e0e000" opacity="0.8"/><rect x="656.5" y="271.68" width="1.2" height="5.55" fill="#f4f400"/><rect x="657" y="270.68" width="1.2" height="2.33" fill="#f4f400"/><rect x="657.5" y="269.55" width="1.2" height="2.47" fill="#f4f400"/><rect x="658" y="269.55" width="1.2" height="13.86" fill="#f4f400"/><rect x="658.5" y="277.65" width="1.2" height="5.76" fill="#f4f400"/><rect x="659" y="277.65" width="1.2" height="16.16" fill="#f4f400"/><rect x="659" y="272.04" width="1" height="12.68" fill="#e0e000" opacity="0.8"/><rect x="659.5" y="288.24" width="1.2" height="5.57" fill="#f4f400"/><rect x="660" y="267.48" width="1.2" height="20.76" fill="#f4f400"/><rect x="660" y="271.14" width="1" height="11.44" fill="#e0e000" opacity="0.8"/><rect x="660.5" y="265.47" width="1.2" height="2.01" fill="#f4f400"/><rect x="661" y="265.47" width="1.2" height="13.52" fill="#f4f400"/><rect x="661.5" y="273.31" width="1.2" height="5.68" fill="#c8c800"/><rect x="662" y="273.31" width="1.2" height="8.58" fill="#f4f400"/><rect x="662" y="269.91" width="1" height="13.58" fill="#e0e000" opacity="0.8"/><rect x="662.5" y="268.71" width="1.2" height="13.19" fill="#f4f400"/><rect x="663" y="265.33" width="1.2" height="3.37" fill="#c8c800"/><rect x="663.5" y="265.33" width="1.2" height="18.39" fill="#f4f400"/><rect x="664" y="279.1" width="1.2" height="4.62" fill="#c8c800"/><rect x="664" y="271.61" width="1" height="9.79" fill="#e0e000" opacity="0.8"/><rect x="664.5" y="279.1" width="1.2" height="5.47" fill="#c8c800"/><rect x="665" y="282.68" width="1.2" height="2.89" fill="#f4f400"/><rect x="665" y="271.56" width="1" height="14.34" fill="#e0e000" opacity="0.8"/><rect x="665.5" y="281.2" width="1.2" height="3.48" fill="#f4f400"/><rect x="666" y="282.2" width="1.2" height="3.37" fill="#f4f400"/><rect x="666" y="271.36" width="1" height="12.07" fill="#e0e000" opacity="0.8"/><rect x="666.5" y="283.43" width="1.2" height="3.14" fill="#c8c800"/><rect x="667" y="282.38" width="1.2" height="2.05" fill="#f4f400"/><rect x="667" y="270.95" width="1" height="14.12" fill="#e0e000" opacity="0.8"/><rect x="667.5" y="262.01" width="1.2" height="20.37" fill="#c8c800"/><rect x="668" y="262.01" width="1.2" height="22.41" fill="#f4f400"/><rect x="668" y="271.55" width="1" height="10.69" fill="#e0e000" opacity="0.8"/><rect x="668.5" y="274.13" width="1.2" height="10.29" fill="#f4f400"/><rect x="669" y="268.51" width="1.2" height="5.62" fill="#c8c800"/><rect x="669.5" y="264.11" width="1.2" height="4.4" fill="#f4f400"/><rect x="670" y="264.11" width="1.2" height="12.27" fill="#c8c800"/><rect x="670.5" y="276.37" width="1.2" height="2.09" fill="#f4f400"/><rect x="671" y="278.47" width="1.2" height="10.1" fill="#f4f400"/><rect x="671.5" y="270.03" width="1.2" height="18.54" fill="#f4f400"/><rect x="672" y="259.45" width="1.2" height="10.57" fill="#f4f400"/><rect x="672" y="271.99" width="1" height="13.91" fill="#e0e000" opacity="0.8"/><rect x="672.5" y="259.45" width="1.2" height="14.23" fill="#c8c800"/><rect x="673" y="273.68" width="1.2" height="8.13" fill="#f4f400"/><rect x="673.5" y="281.81" width="1.2" height="11.31" fill="#f4f400"/><rect x="674" y="271.97" width="1.2" height="21.15" fill="#c8c800"/><rect x="674" y="274.26" width="1" height="10.93" fill="#e0e000" opacity="0.8"/><rect x="674.5" y="270.97" width="1.2" height="3.31" fill="#f4f400"/><rect x="675" y="272.28" width="1.2" height="2.95" fill="#f4f400"/><rect x="675" y="276.44" width="1" height="8.55" fill="#e0e000" opacity="0.8"/><rect x="675.5" y="271.76" width="1.2" height="3.47" fill="#f4f400"/><rect x="676" y="272.76" width="1.2" height="5.67" fill="#f4f400"/><rect x="676" y="274.65" width="1" height="12.63" fill="#e0e000" opacity="0.8"/><rect x="676.5" y="278.43" width="1.2" height="2.18" fill="#c8c800"/><rect x="677" y="280.6" width="1.2" height="5.04" fill="#f4f400"/><rect x="677" y="273.09" width="1" height="15.47" fill="#e0e000" opacity="0.8"/><rect x="677.5" y="277.71" width="1.2" height="7.93" fill="#f4f400"/><rect x="678" y="277.71" width="1.2" height="4.83" fill="#f4f400"/><rect x="678" y="275.14" width="1" height="10.75" fill="#e0e000" opacity="0.8"/><rect x="678.5" y="282.55" width="1.2" height="5.06" fill="#c8c800"/><rect x="679" y="287.6" width="1.2" height="2.77" fill="#f4f400"/><rect x="679" y="275.26" width="1" height="10.11" fill="#e0e000" opacity="0.8"/><rect x="679.5" y="286.33" width="1.2" height="4.04" fill="#f4f400"/><rect x="680" y="285.33" width="1.2" height="2.8" fill="#f4f400"/><rect x="680" y="271.1" width="1" height="15.47" fill="#e0e000" opacity="0.8"/><rect x="680.5" y="284.02" width="1.2" height="3.11" fill="#f4f400"/><rect x="681" y="269.8" width="1.2" height="14.22" fill="#f4f400"/><rect x="681" y="270.56" width="1" height="15.13" fill="#e0e000" opacity="0.8"/><rect x="681.5" y="269.8" width="1.2" height="17.1" fill="#f4f400"/><rect x="682" y="286.9" width="1.2" height="2.8" fill="#f4f400"/><rect x="682.5" y="281.19" width="1.2" height="8.5" fill="#c8c800"/><rect x="683" y="280.19" width="1.2" height="2.8" fill="#f4f400"/><rect x="683" y="272.71" width="1" height="11.84" fill="#e0e000" opacity="0.8"/><rect x="683.5" y="278.76" width="1.2" height="3.23" fill="#f4f400"/><rect x="684" y="271.58" width="1.2" height="7.19" fill="#c8c800"/><rect x="684" y="274.38" width="1" height="9.01" fill="#e0e000" opacity="0.8"/><rect x="684.5" y="271.58" width="1.2" height="11.85" fill="#f4f400"/><rect x="685" y="276.66" width="1.2" height="6.76" fill="#f4f400"/><rect x="685" y="271.56" width="1" height="14.44" fill="#e0e000" opacity="0.8"/><rect x="685.5" y="276.66" width="1.2" height="3.5" fill="#f4f400"/><rect x="686" y="274.68" width="1.2" height="5.48" fill="#f4f400"/><rect x="686" y="272.56" width="1" height="10.32" fill="#e0e000" opacity="0.8"/><rect x="686.5" y="274.68" width="1.2" height="3.33" fill="#c8c800"/><rect x="687" y="278.01" width="1.2" height="8.85" fill="#f4f400"/><rect x="687" y="270.62" width="1" height="11.43" fill="#e0e000" opacity="0.8"/><rect x="687.5" y="285.86" width="1.2" height="2.8" fill="#f4f400"/>
<circle cx="18.95" cy="115.7" r="6.1" fill="#ffff00" stroke="#f09000" stroke-width="1.5"/>
<text x="18.95" y="119.2" text-anchor="middle" font-family="Liberation Sans" font-size="9" font-weight="normal" fill="#222">1</text>
<circle cx="19.2" cy="433.5" r="6.1" fill="#ffff00" stroke="#f09000" stroke-width="1.5"/>
<path d="M16.6 434.2 L19.6 434.2" stroke="#303000" stroke-width="1.3" fill="none"/><path d="M19.3 432.2 L22 434 L19.3 435.6 Z" fill="#303000"/>
<path d="M16 443 L22.5 443 L19.3 446.8 Z" fill="#ffff00"/>
<rect x="18.8" y="439" width="1" height="5" fill="#ffff00"/>
<rect x="674.2" y="430" width="1.2" height="12" fill="#f0f000"/>
<path d="M671.2 441 L678.4 441 L674.8 447 Z" fill="#f0f000"/>
<rect x="356.5" y="50" width="431" height="189" rx="14" fill="#e15b5b" opacity="0.82" filter="url(#blur1)"/>
<rect x="375.7" y="220.9" width="397.8" height="4.2" fill="#e07070"/>
<rect x="372" y="65.3" width="401.5" height="155.6" fill="#000"/>
<g fill="#625d4b">
<rect x="372" y="148.9" width="401.5" height="1"/>
<rect x="442.8" y="65.3" width="1" height="155.5"/>
<rect x="377" y="147.4" width="1" height="4"/>
<rect x="377" y="85.3" width="1" height="1"/>
<rect x="377" y="117.1" width="1" height="1"/>
<rect x="377" y="180.7" width="1" height="1"/>
<rect x="377" y="212.5" width="1" height="1"/>
<rect x="390.16" y="147.4" width="1" height="4"/>
<rect x="390.16" y="85.3" width="1" height="1"/>
<rect x="390.16" y="117.1" width="1" height="1"/>
<rect x="390.16" y="180.7" width="1" height="1"/>
<rect x="390.16" y="212.5" width="1" height="1"/>
<rect x="403.32" y="147.4" width="1" height="4"/>
<rect x="403.32" y="85.3" width="1" height="1"/>
<rect x="403.32" y="117.1" width="1" height="1"/>
<rect x="403.32" y="180.7" width="1" height="1"/>
<rect x="403.32" y="212.5" width="1" height="1"/>
<rect x="416.48" y="147.4" width="1" height="4"/>
<rect x="416.48" y="85.3" width="1" height="1"/>
<rect x="416.48" y="117.1" width="1" height="1"/>
<rect x="416.48" y="180.7" width="1" height="1"/>
<rect x="416.48" y="212.5" width="1" height="1"/>
<rect x="429.64" y="147.4" width="1" height="4"/>
<rect x="429.64" y="85.3" width="1" height="1"/>
<rect x="429.64" y="117.1" width="1" height="1"/>
<rect x="429.64" y="180.7" width="1" height="1"/>
<rect x="429.64" y="212.5" width="1" height="1"/>
<rect x="442.8" y="147.4" width="1" height="4"/>
<rect x="442.8" y="85.3" width="1" height="1"/>
<rect x="442.8" y="117.1" width="1" height="1"/>
<rect x="442.8" y="180.7" width="1" height="1"/>
<rect x="442.8" y="212.5" width="1" height="1"/>
<rect x="455.96" y="147.4" width="1" height="4"/>
<rect x="455.96" y="85.3" width="1" height="1"/>
<rect x="455.96" y="117.1" width="1" height="1"/>
<rect x="455.96" y="180.7" width="1" height="1"/>
<rect x="455.96" y="212.5" width="1" height="1"/>
<rect x="469.12" y="147.4" width="1" height="4"/>
<rect x="469.12" y="85.3" width="1" height="1"/>
<rect x="469.12" y="117.1" width="1" height="1"/>
<rect x="469.12" y="180.7" width="1" height="1"/>
<rect x="469.12" y="212.5" width="1" height="1"/>
<rect x="482.28" y="147.4" width="1" height="4"/>
<rect x="482.28" y="85.3" width="1" height="1"/>
<rect x="482.28" y="117.1" width="1" height="1"/>
<rect x="482.28" y="180.7" width="1" height="1"/>
<rect x="482.28" y="212.5" width="1" height="1"/>
<rect x="495.44" y="147.4" width="1" height="4"/>
<rect x="495.44" y="85.3" width="1" height="1"/>
<rect x="495.44" y="117.1" width="1" height="1"/>
<rect x="495.44" y="180.7" width="1" height="1"/>
<rect x="495.44" y="212.5" width="1" height="1"/>
<rect x="508.6" y="147.4" width="1" height="4"/>
<rect x="508.6" y="85.3" width="1" height="1"/>
<rect x="508.6" y="117.1" width="1" height="1"/>
<rect x="508.6" y="180.7" width="1" height="1"/>
<rect x="508.6" y="212.5" width="1" height="1"/>
<rect x="521.76" y="147.4" width="1" height="4"/>
<rect x="521.76" y="85.3" width="1" height="1"/>
<rect x="521.76" y="117.1" width="1" height="1"/>
<rect x="521.76" y="180.7" width="1" height="1"/>
<rect x="521.76" y="212.5" width="1" height="1"/>
<rect x="534.92" y="147.4" width="1" height="4"/>
<rect x="534.92" y="85.3" width="1" height="1"/>
<rect x="534.92" y="117.1" width="1" height="1"/>
<rect x="534.92" y="180.7" width="1" height="1"/>
<rect x="534.92" y="212.5" width="1" height="1"/>
<rect x="548.08" y="147.4" width="1" height="4"/>
<rect x="548.08" y="85.3" width="1" height="1"/>
<rect x="548.08" y="117.1" width="1" height="1"/>
<rect x="548.08" y="180.7" width="1" height="1"/>
<rect x="548.08" y="212.5" width="1" height="1"/>
<rect x="561.24" y="147.4" width="1" height="4"/>
<rect x="561.24" y="85.3" width="1" height="1"/>
<rect x="561.24" y="117.1" width="1" height="1"/>
<rect x="561.24" y="180.7" width="1" height="1"/>
<rect x="561.24" y="212.5" width="1" height="1"/>
<rect x="574.4" y="147.4" width="1" height="4"/>
<rect x="574.4" y="85.3" width="1" height="1"/>
<rect x="574.4" y="117.1" width="1" height="1"/>
<rect x="574.4" y="180.7" width="1" height="1"/>
<rect x="574.4" y="212.5" width="1" height="1"/>
<rect x="587.56" y="147.4" width="1" height="4"/>
<rect x="587.56" y="85.3" width="1" height="1"/>
<rect x="587.56" y="117.1" width="1" height="1"/>
<rect x="587.56" y="180.7" width="1" height="1"/>
<rect x="587.56" y="212.5" width="1" height="1"/>
<rect x="600.72" y="147.4" width="1" height="4"/>
<rect x="600.72" y="85.3" width="1" height="1"/>
<rect x="600.72" y="117.1" width="1" height="1"/>
<rect x="600.72" y="180.7" width="1" height="1"/>
<rect x="600.72" y="212.5" width="1" height="1"/>
<rect x="613.88" y="147.4" width="1" height="4"/>
<rect x="613.88" y="85.3" width="1" height="1"/>
<rect x="613.88" y="117.1" width="1" height="1"/>
<rect x="613.88" y="180.7" width="1" height="1"/>
<rect x="613.88" y="212.5" width="1" height="1"/>
<rect x="627.04" y="147.4" width="1" height="4"/>
<rect x="627.04" y="85.3" width="1" height="1"/>
<rect x="627.04" y="117.1" width="1" height="1"/>
<rect x="627.04" y="180.7" width="1" height="1"/>
<rect x="627.04" y="212.5" width="1" height="1"/>
<rect x="640.2" y="147.4" width="1" height="4"/>
<rect x="640.2" y="85.3" width="1" height="1"/>
<rect x="640.2" y="117.1" width="1" height="1"/>
<rect x="640.2" y="180.7" width="1" height="1"/>
<rect x="640.2" y="212.5" width="1" height="1"/>
<rect x="653.36" y="147.4" width="1" height="4"/>
<rect x="653.36" y="85.3" width="1" height="1"/>
<rect x="653.36" y="117.1" width="1" height="1"/>
<rect x="653.36" y="180.7" width="1" height="1"/>
<rect x="653.36" y="212.5" width="1" height="1"/>
<rect x="666.52" y="147.4" width="1" height="4"/>
<rect x="666.52" y="85.3" width="1" height="1"/>
<rect x="666.52" y="117.1" width="1" height="1"/>
<rect x="666.52" y="180.7" width="1" height="1"/>
<rect x="666.52" y="212.5" width="1" height="1"/>
<rect x="679.68" y="147.4" width="1" height="4"/>
<rect x="679.68" y="85.3" width="1" height="1"/>
<rect x="679.68" y="117.1" width="1" height="1"/>
<rect x="679.68" y="180.7" width="1" height="1"/>
<rect x="679.68" y="212.5" width="1" height="1"/>
<rect x="692.84" y="147.4" width="1" height="4"/>
<rect x="692.84" y="85.3" width="1" height="1"/>
<rect x="692.84" y="117.1" width="1" height="1"/>
<rect x="692.84" y="180.7" width="1" height="1"/>
<rect x="692.84" y="212.5" width="1" height="1"/>
<rect x="706" y="147.4" width="1" height="4"/>
<rect x="706" y="85.3" width="1" height="1"/>
<rect x="706" y="117.1" width="1" height="1"/>
<rect x="706" y="180.7" width="1" height="1"/>
<rect x="706" y="212.5" width="1" height="1"/>
<rect x="719.16" y="147.4" width="1" height="4"/>
<rect x="719.16" y="85.3" width="1" height="1"/>
<rect x="719.16" y="117.1" width="1" height="1"/>
<rect x="719.16" y="180.7" width="1" height="1"/>
<rect x="719.16" y="212.5" width="1" height="1"/>
<rect x="732.32" y="147.4" width="1" height="4"/>
<rect x="732.32" y="85.3" width="1" height="1"/>
<rect x="732.32" y="117.1" width="1" height="1"/>
<rect x="732.32" y="180.7" width="1" height="1"/>
<rect x="732.32" y="212.5" width="1" height="1"/>
<rect x="745.48" y="147.4" width="1" height="4"/>
<rect x="745.48" y="85.3" width="1" height="1"/>
<rect x="745.48" y="117.1" width="1" height="1"/>
<rect x="745.48" y="180.7" width="1" height="1"/>
<rect x="745.48" y="212.5" width="1" height="1"/>
<rect x="758.64" y="147.4" width="1" height="4"/>
<rect x="758.64" y="85.3" width="1" height="1"/>
<rect x="758.64" y="117.1" width="1" height="1"/>
<rect x="758.64" y="180.7" width="1" height="1"/>
<rect x="758.64" y="212.5" width="1" height="1"/>
<rect x="441.3" y="66.22" width="4" height="1"/>
<rect x="769.5" y="66.22" width="3.5" height="1" fill="#57533f"/>
<rect x="377" y="66.22" width="1" height="1"/>
<rect x="508.6" y="66.22" width="1" height="1"/>
<rect x="574.4" y="66.22" width="1" height="1"/>
<rect x="640.2" y="66.22" width="1" height="1"/>
<rect x="706" y="66.22" width="1" height="1"/>
<rect x="441.3" y="72.58" width="4" height="1"/>
<rect x="769.5" y="72.58" width="3.5" height="1" fill="#57533f"/>
<rect x="377" y="72.58" width="1" height="1"/>
<rect x="508.6" y="72.58" width="1" height="1"/>
<rect x="574.4" y="72.58" width="1" height="1"/>
<rect x="640.2" y="72.58" width="1" height="1"/>
<rect x="706" y="72.58" width="1" height="1"/>
<rect x="441.3" y="78.94" width="4" height="1"/>
<rect x="769.5" y="78.94" width="3.5" height="1" fill="#57533f"/>
<rect x="377" y="78.94" width="1" height="1"/>
<rect x="508.6" y="78.94" width="1" height="1"/>
<rect x="574.4" y="78.94" width="1" height="1"/>
<rect x="640.2" y="78.94" width="1" height="1"/>
<rect x="706" y="78.94" width="1" height="1"/>
<rect x="441.3" y="85.3" width="4" height="1"/>
<rect x="769.5" y="85.3" width="3.5" height="1" fill="#57533f"/>
<rect x="377" y="85.3" width="1" height="1"/>
<rect x="508.6" y="85.3" width="1" height="1"/>
<rect x="574.4" y="85.3" width="1" height="1"/>
<rect x="640.2" y="85.3" width="1" height="1"/>
<rect x="706" y="85.3" width="1" height="1"/>
<rect x="441.3" y="91.66" width="4" height="1"/>
<rect x="769.5" y="91.66" width="3.5" height="1" fill="#57533f"/>
<rect x="377" y="91.66" width="1" height="1"/>
<rect x="508.6" y="91.66" width="1" height="1"/>
<rect x="574.4" y="91.66" width="1" height="1"/>
<rect x="640.2" y="91.66" width="1" height="1"/>
<rect x="706" y="91.66" width="1" height="1"/>
<rect x="441.3" y="98.02" width="4" height="1"/>
<rect x="769.5" y="98.02" width="3.5" height="1" fill="#57533f"/>
<rect x="377" y="98.02" width="1" height="1"/>
<rect x="508.6" y="98.02" width="1" height="1"/>
<rect x="574.4" y="98.02" width="1" height="1"/>
<rect x="640.2" y="98.02" width="1" height="1"/>
<rect x="706" y="98.02" width="1" height="1"/>
<rect x="441.3" y="104.38" width="4" height="1"/>
<rect x="769.5" y="104.38" width="3.5" height="1" fill="#57533f"/>
<rect x="377" y="104.38" width="1" height="1"/>
<rect x="508.6" y="104.38" width="1" height="1"/>
<rect x="574.4" y="104.38" width="1" height="1"/>
<rect x="640.2" y="104.38" width="1" height="1"/>
<rect x="706" y="104.38" width="1" height="1"/>
<rect x="441.3" y="110.74" width="4" height="1"/>
<rect x="769.5" y="110.74" width="3.5" height="1" fill="#57533f"/>
<rect x="377" y="110.74" width="1" height="1"/>
<rect x="508.6" y="110.74" width="1" height="1"/>
<rect x="574.4" y="110.74" width="1" height="1"/>
<rect x="640.2" y="110.74" width="1" height="1"/>
<rect x="706" y="110.74" width="1" height="1"/>
<rect x="441.3" y="117.1" width="4" height="1"/>
<rect x="769.5" y="117.1" width="3.5" height="1" fill="#57533f"/>
<rect x="377" y="117.1" width="1" height="1"/>
<rect x="508.6" y="117.1" width="1" height="1"/>
<rect x="574.4" y="117.1" width="1" height="1"/>
<rect x="640.2" y="117.1" width="1" height="1"/>
<rect x="706" y="117.1" width="1" height="1"/>
<rect x="441.3" y="123.46" width="4" height="1"/>
<rect x="769.5" y="123.46" width="3.5" height="1" fill="#57533f"/>
<rect x="377" y="123.46" width="1" height="1"/>
<rect x="508.6" y="123.46" width="1" height="1"/>
<rect x="574.4" y="123.46" width="1" height="1"/>
<rect x="640.2" y="123.46" width="1" height="1"/>
<rect x="706" y="123.46" width="1" height="1"/>
<rect x="441.3" y="129.82" width="4" height="1"/>
<rect x="769.5" y="129.82" width="3.5" height="1" fill="#57533f"/>
<rect x="377" y="129.82" width="1" height="1"/>
<rect x="508.6" y="129.82" width="1" height="1"/>
<rect x="574.4" y="129.82" width="1" height="1"/>
<rect x="640.2" y="129.82" width="1" height="1"/>
<rect x="706" y="129.82" width="1" height="1"/>
<rect x="441.3" y="136.18" width="4" height="1"/>
<rect x="769.5" y="136.18" width="3.5" height="1" fill="#57533f"/>
<rect x="377" y="136.18" width="1" height="1"/>
<rect x="508.6" y="136.18" width="1" height="1"/>
<rect x="574.4" y="136.18" width="1" height="1"/>
<rect x="640.2" y="136.18" width="1" height="1"/>
<rect x="706" y="136.18" width="1" height="1"/>
<rect x="441.3" y="142.54" width="4" height="1"/>
<rect x="769.5" y="142.54" width="3.5" height="1" fill="#57533f"/>
<rect x="377" y="142.54" width="1" height="1"/>
<rect x="508.6" y="142.54" width="1" height="1"/>
<rect x="574.4" y="142.54" width="1" height="1"/>
<rect x="640.2" y="142.54" width="1" height="1"/>
<rect x="706" y="142.54" width="1" height="1"/>
<rect x="441.3" y="148.9" width="4" height="1"/>
<rect x="769.5" y="148.9" width="3.5" height="1" fill="#57533f"/>
<rect x="377" y="148.9" width="1" height="1"/>
<rect x="508.6" y="148.9" width="1" height="1"/>
<rect x="574.4" y="148.9" width="1" height="1"/>
<rect x="640.2" y="148.9" width="1" height="1"/>
<rect x="706" y="148.9" width="1" height="1"/>
<rect x="441.3" y="155.26" width="4" height="1"/>
<rect x="769.5" y="155.26" width="3.5" height="1" fill="#57533f"/>
<rect x="377" y="155.26" width="1" height="1"/>
<rect x="508.6" y="155.26" width="1" height="1"/>
<rect x="574.4" y="155.26" width="1" height="1"/>
<rect x="640.2" y="155.26" width="1" height="1"/>
<rect x="706" y="155.26" width="1" height="1"/>
<rect x="441.3" y="161.62" width="4" height="1"/>
<rect x="769.5" y="161.62" width="3.5" height="1" fill="#57533f"/>
<rect x="377" y="161.62" width="1" height="1"/>
<rect x="508.6" y="161.62" width="1" height="1"/>
<rect x="574.4" y="161.62" width="1" height="1"/>
<rect x="640.2" y="161.62" width="1" height="1"/>
<rect x="706" y="161.62" width="1" height="1"/>
<rect x="441.3" y="167.98" width="4" height="1"/>
<rect x="769.5" y="167.98" width="3.5" height="1" fill="#57533f"/>
<rect x="377" y="167.98" width="1" height="1"/>
<rect x="508.6" y="167.98" width="1" height="1"/>
<rect x="574.4" y="167.98" width="1" height="1"/>
<rect x="640.2" y="167.98" width="1" height="1"/>
<rect x="706" y="167.98" width="1" height="1"/>
<rect x="441.3" y="174.34" width="4" height="1"/>
<rect x="769.5" y="174.34" width="3.5" height="1" fill="#57533f"/>
<rect x="377" y="174.34" width="1" height="1"/>
<rect x="508.6" y="174.34" width="1" height="1"/>
<rect x="574.4" y="174.34" width="1" height="1"/>
<rect x="640.2" y="174.34" width="1" height="1"/>
<rect x="706" y="174.34" width="1" height="1"/>
<rect x="441.3" y="180.7" width="4" height="1"/>
<rect x="769.5" y="180.7" width="3.5" height="1" fill="#57533f"/>
<rect x="377" y="180.7" width="1" height="1"/>
<rect x="508.6" y="180.7" width="1" height="1"/>
<rect x="574.4" y="180.7" width="1" height="1"/>
<rect x="640.2" y="180.7" width="1" height="1"/>
<rect x="706" y="180.7" width="1" height="1"/>
<rect x="441.3" y="187.06" width="4" height="1"/>
<rect x="769.5" y="187.06" width="3.5" height="1" fill="#57533f"/>
<rect x="377" y="187.06" width="1" height="1"/>
<rect x="508.6" y="187.06" width="1" height="1"/>
<rect x="574.4" y="187.06" width="1" height="1"/>
<rect x="640.2" y="187.06" width="1" height="1"/>
<rect x="706" y="187.06" width="1" height="1"/>
<rect x="441.3" y="193.42" width="4" height="1"/>
<rect x="769.5" y="193.42" width="3.5" height="1" fill="#57533f"/>
<rect x="377" y="193.42" width="1" height="1"/>
<rect x="508.6" y="193.42" width="1" height="1"/>
<rect x="574.4" y="193.42" width="1" height="1"/>
<rect x="640.2" y="193.42" width="1" height="1"/>
<rect x="706" y="193.42" width="1" height="1"/>
<rect x="441.3" y="199.78" width="4" height="1"/>
<rect x="769.5" y="199.78" width="3.5" height="1" fill="#57533f"/>
<rect x="377" y="199.78" width="1" height="1"/>
<rect x="508.6" y="199.78" width="1" height="1"/>
<rect x="574.4" y="199.78" width="1" height="1"/>
<rect x="640.2" y="199.78" width="1" height="1"/>
<rect x="706" y="199.78" width="1" height="1"/>
<rect x="441.3" y="206.14" width="4" height="1"/>
<rect x="769.5" y="206.14" width="3.5" height="1" fill="#57533f"/>
<rect x="377" y="206.14" width="1" height="1"/>
<rect x="508.6" y="206.14" width="1" height="1"/>
<rect x="574.4" y="206.14" width="1" height="1"/>
<rect x="640.2" y="206.14" width="1" height="1"/>
<rect x="706" y="206.14" width="1" height="1"/>
<rect x="441.3" y="212.5" width="4" height="1"/>
<rect x="769.5" y="212.5" width="3.5" height="1" fill="#57533f"/>
<rect x="377" y="212.5" width="1" height="1"/>
<rect x="508.6" y="212.5" width="1" height="1"/>
<rect x="574.4" y="212.5" width="1" height="1"/>
<rect x="640.2" y="212.5" width="1" height="1"/>
<rect x="706" y="212.5" width="1" height="1"/>
<rect x="441.3" y="218.86" width="4" height="1"/>
<rect x="769.5" y="218.86" width="3.5" height="1" fill="#57533f"/>
<rect x="377" y="218.86" width="1" height="1"/>
<rect x="508.6" y="218.86" width="1" height="1"/>
<rect x="574.4" y="218.86" width="1" height="1"/>
<rect x="640.2" y="218.86" width="1" height="1"/>
<rect x="706" y="218.86" width="1" height="1"/>
</g>
<rect x="773" y="65.3" width="1" height="155.5" fill="#b87020"/>
<rect x="419.8" y="89" width="1.2" height="131.8" fill="#909000"/>
<rect x="419.7" y="138" width="1.5" height="30" fill="#f0f000"/>
<rect x="420.6" y="148.83" width="0.7" height="4.42" fill="#f0f000"/><rect x="421.1" y="148.45" width="0.7" height="4.8" fill="#f0f000"/><rect x="421.6" y="148.45" width="0.7" height="2.75" fill="#f0f000"/><rect x="422.1" y="148.99" width="0.7" height="6.03" fill="#f0f000"/><rect x="422.6" y="150.83" width="0.7" height="4.2" fill="#f0f000"/><rect x="423.1" y="150.83" width="0.7" height="3.74" fill="#f0f000"/><rect x="423.6" y="152.37" width="0.7" height="2.62" fill="#f0f000"/><rect x="424.1" y="152.37" width="0.7" height="2.63" fill="#f0f000"/><rect x="424.6" y="152.37" width="0.7" height="2.34" fill="#f0f000"/><rect x="425.1" y="152.5" width="0.7" height="4.23" fill="#f0f000"/><rect x="425.6" y="153.79" width="0.7" height="2.95" fill="#f0f000"/><rect x="426.1" y="153.05" width="0.7" height="2.94" fill="#f0f000"/><rect x="426.6" y="153.05" width="0.7" height="3.52" fill="#f0f000"/><rect x="427.1" y="153.77" width="0.7" height="2.8" fill="#f0f000"/><rect x="427.6" y="151.65" width="0.7" height="4.32" fill="#f0f000"/><rect x="428.1" y="151.65" width="0.7" height="4.93" fill="#f0f000"/><rect x="428.6" y="152.07" width="0.7" height="4.51" fill="#f0f000"/><rect x="429.1" y="149.85" width="0.7" height="4.41" fill="#f0f000"/><rect x="429.6" y="148.83" width="0.7" height="3.22" fill="#f0f000"/><rect x="430.1" y="148.83" width="0.7" height="3.2" fill="#f0f000"/><rect x="430.6" y="149.18" width="0.7" height="2.85" fill="#f0f000"/><rect x="431.1" y="146.89" width="0.7" height="4.5" fill="#f0f000"/><rect x="431.6" y="146.89" width="0.7" height="4.25" fill="#f0f000"/><rect x="432.1" y="145.49" width="0.7" height="5.64" fill="#f0f000"/><rect x="432.6" y="145.49" width="0.7" height="4.9" fill="#f0f000"/><rect x="433.1" y="146.12" width="0.7" height="4.27" fill="#f0f000"/><rect x="433.6" y="146.12" width="0.7" height="5.93" fill="#f0f000"/><rect x="434.1" y="146.49" width="0.7" height="5.56" fill="#f0f000"/><rect x="434.6" y="144.46" width="0.7" height="4.23" fill="#f0f000"/><rect x="435.1" y="144.46" width="0.7" height="2.3" fill="#f0f000"/><rect x="435.6" y="144.56" width="0.7" height="2.84" fill="#f0f000"/><rect x="436.1" y="144.17" width="0.7" height="3.23" fill="#f0f000"/><rect x="436.6" y="143.52" width="0.7" height="2.85" fill="#f0f000"/><rect x="437.1" y="143.52" width="0.7" height="2.21" fill="#f0f000"/><rect x="437.6" y="143.46" width="0.7" height="2.27" fill="#f0f000"/><rect x="438.1" y="141.42" width="0.7" height="4.24" fill="#f0f000"/><rect x="438.6" y="141.42" width="0.7" height="2.22" fill="#f0f000"/><rect x="439.1" y="139.11" width="0.7" height="4.53" fill="#f0f000"/><rect x="439.6" y="139.11" width="0.7" height="5.3" fill="#f0f000"/><rect x="440.1" y="139.81" width="0.7" height="4.61" fill="#f0f000"/><rect x="440.6" y="138.27" width="0.7" height="3.74" fill="#f0f000"/><rect x="441.1" y="138.27" width="0.7" height="5.12" fill="#f0f000"/><rect x="441.6" y="141.19" width="0.7" height="4.6" fill="#f0f000"/><rect x="442.1" y="141.67" width="0.7" height="4.12" fill="#f0f000"/><rect x="442.6" y="141.67" width="0.7" height="3.36" fill="#f0f000"/><rect x="443.1" y="140.94" width="0.7" height="4.1" fill="#f0f000"/><rect x="443.6" y="140.94" width="0.7" height="5.47" fill="#f0f000"/><rect x="444.1" y="141.94" width="0.7" height="4.47" fill="#f0f000"/><rect x="444.6" y="141.94" width="0.7" height="6.48" fill="#f0f000"/><rect x="445.1" y="143.04" width="0.7" height="5.37" fill="#f0f000"/><rect x="445.6" y="143.01" width="0.7" height="2.23" fill="#f0f000"/><rect x="446.1" y="143.01" width="0.7" height="3.43" fill="#f0f000"/><rect x="446.6" y="144.24" width="0.7" height="3.13" fill="#f0f000"/><rect x="447.1" y="143.84" width="0.7" height="3.52" fill="#f0f000"/><rect x="447.6" y="142.96" width="0.7" height="3.09" fill="#f0f000"/><rect x="448.1" y="142.96" width="0.7" height="4.26" fill="#f0f000"/><rect x="448.6" y="144.26" width="0.7" height="2.96" fill="#f0f000"/><rect x="449.1" y="144.26" width="0.7" height="3.86" fill="#f0f000"/><rect x="449.6" y="145.19" width="0.7" height="2.92" fill="#f0f000"/><rect x="450.1" y="145.19" width="0.7" height="3.83" fill="#f0f000"/><rect x="450.6" y="144.82" width="0.7" height="4.2" fill="#f0f000"/><rect x="451.1" y="144.82" width="0.7" height="2.54" fill="#f0f000"/><rect x="451.6" y="145.16" width="0.7" height="4.39" fill="#f0f000"/><rect x="452.1" y="146.71" width="0.7" height="2.83" fill="#f0f000"/><rect x="452.6" y="146.71" width="0.7" height="3.25" fill="#f0f000"/><rect x="453.1" y="145.76" width="0.7" height="4.2" fill="#f0f000"/><rect x="453.6" y="145.76" width="0.7" height="2.39" fill="#f0f000"/><rect x="454.1" y="143.51" width="0.7" height="4.65" fill="#f0f000"/><rect x="454.6" y="143.51" width="0.7" height="5.73" fill="#f0f000"/><rect x="455.1" y="145.93" width="0.7" height="3.31" fill="#f0f000"/><rect x="455.6" y="144.84" width="0.7" height="3.28" fill="#f0f000"/><rect x="456.1" y="143.53" width="0.7" height="3.51" fill="#f0f000"/><rect x="456.6" y="143.53" width="0.7" height="4.73" fill="#f0f000"/><rect x="457.1" y="144.4" width="0.7" height="3.86" fill="#f0f000"/><rect x="457.6" y="144.4" width="0.7" height="2.34" fill="#f0f000"/><rect x="458.1" y="144.54" width="0.7" height="2.75" fill="#f0f000"/><rect x="458.6" y="143.76" width="0.7" height="3.52" fill="#f0f000"/><rect x="459.1" y="142.47" width="0.7" height="3.49" fill="#f0f000"/><rect x="459.6" y="140.89" width="0.7" height="3.78" fill="#f0f000"/><rect x="460.1" y="140.64" width="0.7" height="2.45" fill="#f0f000"/><rect x="460.6" y="140.64" width="0.7" height="2.27" fill="#f0f000"/><rect x="461.1" y="140.71" width="0.7" height="3.47" fill="#f0f000"/><rect x="461.6" y="141.98" width="0.7" height="2.31" fill="#f0f000"/><rect x="462.1" y="141.98" width="0.7" height="2.31" fill="#f0f000"/><rect x="462.6" y="139.19" width="0.7" height="5" fill="#f0f000"/><rect x="463.1" y="139.19" width="0.7" height="3.39" fill="#f0f000"/><rect x="463.6" y="139.63" width="0.7" height="2.95" fill="#f0f000"/><rect x="464.1" y="139.63" width="0.7" height="2.49" fill="#f0f000"/><rect x="464.6" y="135.02" width="0.7" height="7.1" fill="#f0f000"/><rect x="465.1" y="135.02" width="0.7" height="5.32" fill="#f0f000"/><rect x="465.6" y="137.07" width="0.7" height="3.27" fill="#f0f000"/><rect x="466.1" y="136.99" width="0.7" height="2.28" fill="#f0f000"/><rect x="466.6" y="136.99" width="0.7" height="2.43" fill="#f0f000"/><rect x="467.1" y="137.22" width="0.7" height="3.75" fill="#f0f000"/><rect x="467.6" y="138.77" width="0.7" height="2.67" fill="#f0f000"/><rect x="468.1" y="138.49" width="0.7" height="2.96" fill="#f0f000"/><rect x="468.6" y="138.49" width="0.7" height="4.17" fill="#f0f000"/><rect x="469.1" y="139.04" width="0.7" height="3.61" fill="#f0f000"/><rect x="469.6" y="138.77" width="0.7" height="2.47" fill="#f0f000"/><rect x="470.1" y="138.77" width="0.7" height="3.13" fill="#f0f000"/><rect x="470.6" y="139.7" width="0.7" height="3.13" fill="#f0f000"/><rect x="471.1" y="140.15" width="0.7" height="2.68" fill="#f0f000"/><rect x="471.6" y="140.15" width="0.7" height="4.22" fill="#f0f000"/><rect x="472.1" y="142.05" width="0.7" height="2.32" fill="#f0f000"/><rect x="472.6" y="141.86" width="0.7" height="2.38" fill="#f0f000"/><rect x="473.1" y="141.76" width="0.7" height="2.3" fill="#f0f000"/><rect x="473.6" y="141.76" width="0.7" height="4.03" fill="#f0f000"/><rect x="474.1" y="142.63" width="0.7" height="3.16" fill="#f0f000"/><rect x="474.6" y="142.63" width="0.7" height="4.9" fill="#f0f000"/><rect x="475.1" y="145.03" width="0.7" height="2.49" fill="#f0f000"/><rect x="475.6" y="145.03" width="0.7" height="3.92" fill="#f0f000"/><rect x="476.1" y="146.75" width="0.7" height="3.41" fill="#f0f000"/><rect x="476.6" y="143.78" width="0.7" height="6.37" fill="#f0f000"/><rect x="477.1" y="143.78" width="0.7" height="3.61" fill="#f0f000"/><rect x="477.6" y="144.7" width="0.7" height="2.7" fill="#f0f000"/><rect x="478.1" y="144.7" width="0.7" height="3.94" fill="#f0f000"/><rect x="478.6" y="144.93" width="0.7" height="3.71" fill="#f0f000"/><rect x="479.1" y="144.93" width="0.7" height="3.08" fill="#f0f000"/><rect x="479.6" y="142.83" width="0.7" height="5.18" fill="#f0f000"/><rect x="480.1" y="142.83" width="0.7" height="5.58" fill="#f0f000"/><rect x="480.6" y="144.79" width="0.7" height="3.63" fill="#f0f000"/><rect x="481.1" y="144.09" width="0.7" height="2.89" fill="#f0f000"/><rect x="481.6" y="144.09" width="0.7" height="2.78" fill="#f0f000"/><rect x="482.1" y="144.5" width="0.7" height="2.37" fill="#f0f000"/><rect x="482.6" y="142.31" width="0.7" height="4.39" fill="#f0f000"/><rect x="483.1" y="141.54" width="0.7" height="2.98" fill="#f0f000"/><rect x="483.6" y="141.54" width="0.7" height="4.96" fill="#f0f000"/><rect x="484.1" y="144.3" width="0.7" height="2.69" fill="#f0f000"/><rect x="484.6" y="141.14" width="0.7" height="5.85" fill="#f0f000"/><rect x="485.1" y="140.49" width="0.7" height="2.85" fill="#f0f000"/><rect x="485.6" y="140.49" width="0.7" height="3.3" fill="#f0f000"/><rect x="486.1" y="141.59" width="0.7" height="5.21" fill="#f0f000"/><rect x="486.6" y="140.14" width="0.7" height="6.66" fill="#f0f000"/><rect x="487.1" y="140.14" width="0.7" height="5.5" fill="#f0f000"/><rect x="487.6" y="142.07" width="0.7" height="3.57" fill="#f0f000"/><rect x="488.1" y="138.69" width="0.7" height="5.58" fill="#f0f000"/><rect x="488.6" y="138.69" width="0.7" height="2.85" fill="#f0f000"/><rect x="489.1" y="139.34" width="0.7" height="3.71" fill="#f0f000"/><rect x="489.6" y="140.74" width="0.7" height="2.3" fill="#f0f000"/><rect x="490.1" y="137.45" width="0.7" height="5.49" fill="#f0f000"/><rect x="490.6" y="137.45" width="0.7" height="4.81" fill="#f0f000"/><rect x="491.1" y="137.2" width="0.7" height="5.06" fill="#f0f000"/><rect x="491.6" y="137.2" width="0.7" height="4.07" fill="#f0f000"/><rect x="492.1" y="134.76" width="0.7" height="6.51" fill="#f0f000"/><rect x="492.6" y="134.76" width="0.7" height="8.86" fill="#f0f000"/><rect x="493.1" y="136.74" width="0.7" height="6.89" fill="#f0f000"/><rect x="493.6" y="136.74" width="0.7" height="2.26" fill="#f0f000"/><rect x="494.1" y="136.8" width="0.7" height="5.85" fill="#f0f000"/><rect x="494.6" y="140.45" width="0.7" height="2.45" fill="#f0f000"/><rect x="495.1" y="140.7" width="0.7" height="2.95" fill="#f0f000"/><rect x="495.6" y="139.32" width="0.7" height="4.33" fill="#f0f000"/><rect x="496.1" y="139.32" width="0.7" height="2.92" fill="#f0f000"/><rect x="496.6" y="140.04" width="0.7" height="2.34" fill="#f0f000"/><rect x="497.1" y="140.17" width="0.7" height="2.66" fill="#f0f000"/><rect x="497.6" y="140.63" width="0.7" height="4.07" fill="#f0f000"/><rect x="498.1" y="141.43" width="0.7" height="3.27" fill="#f0f000"/><rect x="498.6" y="141.43" width="0.7" height="3.45" fill="#f0f000"/><rect x="499.1" y="142.67" width="0.7" height="2.99" fill="#f0f000"/><rect x="499.6" y="142.69" width="0.7" height="2.97" fill="#f0f000"/><rect x="500.1" y="142.69" width="0.7" height="4.49" fill="#f0f000"/><rect x="500.6" y="142.79" width="0.7" height="4.39" fill="#f0f000"/><rect x="501.1" y="142.79" width="0.7" height="3.45" fill="#f0f000"/><rect x="501.6" y="143.44" width="0.7" height="2.8" fill="#f0f000"/><rect x="502.1" y="143.44" width="0.7" height="4.13" fill="#f0f000"/><rect x="502.6" y="145.38" width="0.7" height="3.52" fill="#f0f000"/><rect x="503.1" y="145.28" width="0.7" height="3.62" fill="#f0f000"/><rect x="503.6" y="144.96" width="0.7" height="2.52" fill="#f0f000"/><rect x="504.1" y="144.64" width="0.7" height="2.53" fill="#f0f000"/><rect x="504.6" y="144.64" width="0.7" height="2.49" fill="#f0f000"/><rect x="505.1" y="144.92" width="0.7" height="2.21" fill="#f0f000"/><rect x="505.6" y="144.94" width="0.7" height="3.65" fill="#f0f000"/><rect x="506.1" y="144.52" width="0.7" height="4.07" fill="#f0f000"/><rect x="506.6" y="142.86" width="0.7" height="3.86" fill="#f0f000"/><rect x="507.1" y="142.86" width="0.7" height="4.27" fill="#f0f000"/><rect x="507.6" y="142.02" width="0.7" height="5.1" fill="#f0f000"/><rect x="508.1" y="142.02" width="0.7" height="3.69" fill="#f0f000"/><rect x="508.6" y="143.4" width="0.7" height="2.31" fill="#f0f000"/><rect x="509.1" y="140.87" width="0.7" height="4.73" fill="#f0f000"/><rect x="509.6" y="140.87" width="0.7" height="4.31" fill="#f0f000"/><rect x="510.1" y="142.21" width="0.7" height="2.97" fill="#f0f000"/><rect x="510.6" y="141.49" width="0.7" height="2.91" fill="#f0f000"/><rect x="511.1" y="141.49" width="0.7" height="3.72" fill="#f0f000"/><rect x="511.6" y="140.28" width="0.7" height="4.93" fill="#f0f000"/><rect x="512.1" y="139.64" width="0.7" height="2.84" fill="#f0f000"/><rect x="512.6" y="139.64" width="0.7" height="4.22" fill="#f0f000"/><rect x="513.1" y="141.66" width="0.7" height="3.34" fill="#f0f000"/><rect x="513.6" y="140.66" width="0.7" height="4.34" fill="#f0f000"/><rect x="514.1" y="140.25" width="0.7" height="2.61" fill="#f0f000"/><rect x="514.6" y="139.21" width="0.7" height="3.23" fill="#f0f000"/><rect x="515.1" y="139.21" width="0.7" height="2.4" fill="#f0f000"/><rect x="515.6" y="139.41" width="0.7" height="2.72" fill="#f0f000"/><rect x="516.1" y="139.94" width="0.7" height="2.4" fill="#f0f000"/><rect x="516.6" y="140.13" width="0.7" height="3.13" fill="#f0f000"/><rect x="517.1" y="138.52" width="0.7" height="4.75" fill="#f0f000"/><rect x="517.6" y="137.1" width="0.7" height="3.62" fill="#f0f000"/><rect x="518.1" y="137.1" width="0.7" height="3.39" fill="#f0f000"/><rect x="518.6" y="138.11" width="0.7" height="2.38" fill="#f0f000"/><rect x="519.1" y="138.11" width="0.7" height="3.27" fill="#f0f000"/><rect x="519.6" y="139.18" width="0.7" height="2.34" fill="#f0f000"/><rect x="520.1" y="138.77" width="0.7" height="2.74" fill="#f0f000"/><rect x="520.6" y="138.77" width="0.7" height="3.21" fill="#f0f000"/><rect x="521.1" y="139.47" width="0.7" height="2.51" fill="#f0f000"/><rect x="521.6" y="139.47" width="0.7" height="4.12" fill="#f0f000"/><rect x="522.1" y="140.88" width="0.7" height="2.71" fill="#f0f000"/><rect x="522.6" y="138.69" width="0.7" height="4.39" fill="#f0f000"/><rect x="523.1" y="138.69" width="0.7" height="3.78" fill="#f0f000"/><rect x="523.6" y="140.27" width="0.7" height="6.68" fill="#f0f000"/><rect x="524.1" y="142.49" width="0.7" height="4.46" fill="#f0f000"/><rect x="524.6" y="142.49" width="0.7" height="3.72" fill="#f0f000"/><rect x="525.1" y="143.8" width="0.7" height="2.41" fill="#f0f000"/><rect x="525.6" y="143.8" width="0.7" height="2.39" fill="#f0f000"/><rect x="526.1" y="143.98" width="0.7" height="3.13" fill="#f0f000"/><rect x="526.6" y="144.53" width="0.7" height="2.58" fill="#f0f000"/><rect x="527.1" y="144.53" width="0.7" height="3.51" fill="#f0f000"/><rect x="527.6" y="144.62" width="0.7" height="3.43" fill="#f0f000"/><rect x="528.1" y="144.62" width="0.7" height="2.75" fill="#f0f000"/><rect x="528.6" y="145.17" width="0.7" height="3.32" fill="#f0f000"/><rect x="529.1" y="142.92" width="0.7" height="5.57" fill="#f0f000"/><rect x="529.6" y="142.92" width="0.7" height="2.61" fill="#f0f000"/><rect x="530.1" y="143.34" width="0.7" height="5.07" fill="#f0f000"/><rect x="530.6" y="143.16" width="0.7" height="5.25" fill="#f0f000"/><rect x="531.1" y="143.16" width="0.7" height="4.69" fill="#f0f000"/><rect x="531.6" y="143.49" width="0.7" height="4.35" fill="#f0f000"/><rect x="532.1" y="143.49" width="0.7" height="3.01" fill="#f0f000"/><rect x="532.6" y="144.3" width="0.7" height="2.22" fill="#f0f000"/><rect x="533.1" y="143.63" width="0.7" height="2.89" fill="#f0f000"/><rect x="533.6" y="143.63" width="0.7" height="2.58" fill="#f0f000"/><rect x="534.1" y="142.8" width="0.7" height="3.41" fill="#f0f000"/><rect x="534.6" y="142.8" width="0.7" height="2.48" fill="#f0f000"/><rect x="535.1" y="143.07" width="0.7" height="3.17" fill="#f0f000"/><rect x="535.6" y="144.05" width="0.7" height="2.48" fill="#f0f000"/><rect x="536.1" y="140.77" width="0.7" height="5.76" fill="#f0f000"/><rect x="536.6" y="140.77" width="0.7" height="3.75" fill="#f0f000"/><rect x="537.1" y="142.32" width="0.7" height="2.21" fill="#f0f000"/><rect x="537.6" y="139.67" width="0.7" height="4.86" fill="#f0f000"/><rect x="538.1" y="139.67" width="0.7" height="4.26" fill="#f0f000"/><rect x="538.6" y="139.48" width="0.7" height="4.45" fill="#f0f000"/><rect x="539.1" y="139.48" width="0.7" height="3.04" fill="#f0f000"/><rect x="539.6" y="140.32" width="0.7" height="2.2" fill="#f0f000"/><rect x="540.1" y="140.32" width="0.7" height="2.67" fill="#f0f000"/><rect x="540.6" y="139.32" width="0.7" height="3.67" fill="#f0f000"/><rect x="541.1" y="139.32" width="0.7" height="3.06" fill="#f0f000"/><rect x="541.6" y="137.92" width="0.7" height="4.46" fill="#f0f000"/><rect x="542.1" y="137.92" width="0.7" height="3.15" fill="#f0f000"/><rect x="542.6" y="137.05" width="0.7" height="4.02" fill="#f0f000"/><rect x="543.1" y="137.05" width="0.7" height="2.3" fill="#f0f000"/><rect x="543.6" y="137.15" width="0.7" height="2.92" fill="#f0f000"/><rect x="544.1" y="137.87" width="0.7" height="2.96" fill="#f0f000"/><rect x="544.6" y="138.36" width="0.7" height="2.47" fill="#f0f000"/><rect x="545.1" y="138.36" width="0.7" height="3.83" fill="#f0f000"/><rect x="545.6" y="139.09" width="0.7" height="3.1" fill="#f0f000"/><rect x="546.1" y="139.09" width="0.7" height="2.88" fill="#f0f000"/><rect x="546.6" y="139.77" width="0.7" height="4.13" fill="#f0f000"/><rect x="547.1" y="139.28" width="0.7" height="4.61" fill="#f0f000"/><rect x="547.6" y="139.28" width="0.7" height="3.67" fill="#f0f000"/><rect x="548.1" y="140.75" width="0.7" height="3.91" fill="#f0f000"/><rect x="548.6" y="142.46" width="0.7" height="4.56" fill="#f0f000"/><rect x="549.1" y="144.53" width="0.7" height="2.49" fill="#f0f000"/><rect x="549.6" y="142.08" width="0.7" height="4.65" fill="#f0f000"/><rect x="550.1" y="142.08" width="0.7" height="3.01" fill="#f0f000"/><rect x="550.6" y="142.89" width="0.7" height="2.64" fill="#f0f000"/><rect x="551.1" y="142.26" width="0.7" height="3.28" fill="#f0f000"/><rect x="551.6" y="142.26" width="0.7" height="4.04" fill="#f0f000"/><rect x="552.1" y="143.67" width="0.7" height="2.62" fill="#f0f000"/><rect x="552.6" y="142.76" width="0.7" height="3.11" fill="#f0f000"/><rect x="553.1" y="142.76" width="0.7" height="3.8" fill="#f0f000"/><rect x="553.6" y="143.23" width="0.7" height="3.33" fill="#f0f000"/><rect x="554.1" y="143.23" width="0.7" height="3.6" fill="#f0f000"/><rect x="554.6" y="144.63" width="0.7" height="4.83" fill="#f0f000"/><rect x="555.1" y="145.25" width="0.7" height="4.21" fill="#f0f000"/><rect x="555.6" y="145.25" width="0.7" height="4.81" fill="#f0f000"/><rect x="556.1" y="145.04" width="0.7" height="5.01" fill="#f0f000"/><rect x="556.6" y="145.04" width="0.7" height="3.35" fill="#f0f000"/><rect x="557.1" y="144.49" width="0.7" height="3.9" fill="#f0f000"/><rect x="557.6" y="144.49" width="0.7" height="3.21" fill="#f0f000"/><rect x="558.1" y="145.2" width="0.7" height="2.5" fill="#f0f000"/><rect x="558.6" y="145.2" width="0.7" height="2.73" fill="#f0f000"/><rect x="559.1" y="143.83" width="0.7" height="4.1" fill="#f0f000"/><rect x="559.6" y="143.83" width="0.7" height="2.24" fill="#f0f000"/><rect x="560.1" y="142.29" width="0.7" height="3.78" fill="#f0f000"/><rect x="560.6" y="142.29" width="0.7" height="4.96" fill="#f0f000"/><rect x="561.1" y="142.2" width="0.7" height="5.05" fill="#f0f000"/><rect x="561.6" y="139.87" width="0.7" height="4.53" fill="#f0f000"/><rect x="562.1" y="139.87" width="0.7" height="3.92" fill="#f0f000"/><rect x="562.6" y="140.53" width="0.7" height="3.25" fill="#f0f000"/><rect x="563.1" y="140.53" width="0.7" height="3.09" fill="#f0f000"/><rect x="563.6" y="141.42" width="0.7" height="2.59" fill="#f0f000"/><rect x="564.1" y="140.08" width="0.7" height="3.94" fill="#f0f000"/><rect x="564.6" y="139.26" width="0.7" height="3.02" fill="#f0f000"/><rect x="565.1" y="139.26" width="0.7" height="3.01" fill="#f0f000"/><rect x="565.6" y="140.07" width="0.7" height="2.56" fill="#f0f000"/><rect x="566.1" y="140.42" width="0.7" height="2.25" fill="#f0f000"/><rect x="566.6" y="138.21" width="0.7" height="4.46" fill="#f0f000"/><rect x="567.1" y="136.99" width="0.7" height="3.42" fill="#f0f000"/><rect x="567.6" y="136.99" width="0.7" height="5.13" fill="#f0f000"/><rect x="568.1" y="139.92" width="0.7" height="2.39" fill="#f0f000"/><rect x="568.6" y="138.07" width="0.7" height="4.24" fill="#f0f000"/><rect x="569.1" y="137.86" width="0.7" height="2.41" fill="#f0f000"/><rect x="569.6" y="136.49" width="0.7" height="3.57" fill="#f0f000"/><rect x="570.1" y="136.49" width="0.7" height="3.86" fill="#f0f000"/><rect x="570.6" y="135.98" width="0.7" height="4.36" fill="#f0f000"/><rect x="571.1" y="135.98" width="0.7" height="4.5" fill="#f0f000"/><rect x="571.6" y="138.28" width="0.7" height="3.17" fill="#f0f000"/><rect x="572.1" y="139.24" width="0.7" height="2.29" fill="#f0f000"/><rect x="572.6" y="139.13" width="0.7" height="2.41" fill="#f0f000"/><rect x="573.1" y="139.13" width="0.7" height="3.78" fill="#f0f000"/><rect x="573.6" y="140.19" width="0.7" height="2.73" fill="#f0f000"/><rect x="574.1" y="140.19" width="0.7" height="4.9" fill="#f0f000"/><rect x="574.6" y="138.92" width="0.7" height="6.17" fill="#f0f000"/><rect x="575.1" y="138.92" width="0.7" height="4.6" fill="#f0f000"/><rect x="575.6" y="141.31" width="0.7" height="2.89" fill="#f0f000"/><rect x="576.1" y="142" width="0.7" height="2.64" fill="#f0f000"/><rect x="576.6" y="142.44" width="0.7" height="2.44" fill="#f0f000"/><rect x="577.1" y="142.01" width="0.7" height="2.86" fill="#f0f000"/><rect x="577.6" y="141.69" width="0.7" height="2.52" fill="#f0f000"/><rect x="578.1" y="141.69" width="0.7" height="4.11" fill="#f0f000"/><rect x="578.6" y="143.6" width="0.7" height="2.24" fill="#f0f000"/><rect x="579.1" y="143.64" width="0.7" height="2.9" fill="#f0f000"/><rect x="579.6" y="144.34" width="0.7" height="3.24" fill="#f0f000"/><rect x="580.1" y="145.22" width="0.7" height="2.36" fill="#f0f000"/><rect x="580.6" y="144.35" width="0.7" height="3.07" fill="#f0f000"/><rect x="581.1" y="144.35" width="0.7" height="3.85" fill="#f0f000"/><rect x="581.6" y="145.42" width="0.7" height="2.78" fill="#f0f000"/><rect x="582.1" y="145.42" width="0.7" height="3.89" fill="#f0f000"/><rect x="582.6" y="144.16" width="0.7" height="5.15" fill="#f0f000"/><rect x="583.1" y="142.94" width="0.7" height="3.42" fill="#f0f000"/><rect x="583.6" y="142.94" width="0.7" height="3.53" fill="#f0f000"/><rect x="584.1" y="143.4" width="0.7" height="3.07" fill="#f0f000"/><rect x="584.6" y="143.4" width="0.7" height="5.09" fill="#f0f000"/><rect x="585.1" y="142.76" width="0.7" height="5.73" fill="#f0f000"/><rect x="585.6" y="142.74" width="0.7" height="2.22" fill="#f0f000"/><rect x="586.1" y="142.74" width="0.7" height="2.81" fill="#f0f000"/><rect x="586.6" y="143.35" width="0.7" height="3.12" fill="#f0f000"/><rect x="587.1" y="143.43" width="0.7" height="3.04" fill="#f0f000"/><rect x="587.6" y="140.53" width="0.7" height="5.1" fill="#f0f000"/><rect x="588.1" y="140.39" width="0.7" height="2.34" fill="#f0f000"/><rect x="588.6" y="140.39" width="0.7" height="5.78" fill="#f0f000"/><rect x="589.1" y="140.02" width="0.7" height="6.15" fill="#f0f000"/><rect x="589.6" y="140.02" width="0.7" height="3.94" fill="#f0f000"/><rect x="590.1" y="141.77" width="0.7" height="4.1" fill="#f0f000"/><rect x="590.6" y="142.48" width="0.7" height="3.39" fill="#f0f000"/><rect x="591.1" y="142.44" width="0.7" height="2.24" fill="#f0f000"/><rect x="591.6" y="139.47" width="0.7" height="5.17" fill="#f0f000"/><rect x="592.1" y="139.25" width="0.7" height="2.41" fill="#f0f000"/><rect x="592.6" y="139.25" width="0.7" height="3.24" fill="#f0f000"/><rect x="593.1" y="140.29" width="0.7" height="2.26" fill="#f0f000"/><rect x="593.6" y="140.35" width="0.7" height="3.16" fill="#f0f000"/><rect x="594.1" y="138.93" width="0.7" height="4.58" fill="#f0f000"/><rect x="594.6" y="137.28" width="0.7" height="3.84" fill="#f0f000"/><rect x="595.1" y="137.28" width="0.7" height="3.9" fill="#f0f000"/><rect x="595.6" y="138.99" width="0.7" height="3.43" fill="#f0f000"/><rect x="596.1" y="137.74" width="0.7" height="4.68" fill="#f0f000"/><rect x="596.6" y="135.14" width="0.7" height="4.8" fill="#f0f000"/><rect x="597.1" y="135.14" width="0.7" height="2.89" fill="#f0f000"/><rect x="597.6" y="135.84" width="0.7" height="5.37" fill="#f0f000"/><rect x="598.1" y="136.94" width="0.7" height="4.27" fill="#f0f000"/><rect x="598.6" y="136.94" width="0.7" height="4.75" fill="#f0f000"/><rect x="599.1" y="139.49" width="0.7" height="4.34" fill="#f0f000"/><rect x="599.6" y="140.78" width="0.7" height="3.05" fill="#f0f000"/><rect x="600.1" y="140.78" width="0.7" height="3.13" fill="#f0f000"/><rect x="600.6" y="139.49" width="0.7" height="4.42" fill="#f0f000"/><rect x="601.1" y="139.49" width="0.7" height="6.23" fill="#f0f000"/><rect x="601.6" y="141.9" width="0.7" height="3.83" fill="#f0f000"/><rect x="602.1" y="141.76" width="0.7" height="2.33" fill="#f0f000"/><rect x="602.6" y="141.76" width="0.7" height="5.37" fill="#f0f000"/><rect x="603.1" y="144.55" width="0.7" height="2.58" fill="#f0f000"/><rect x="603.6" y="142.22" width="0.7" height="4.53" fill="#f0f000"/><rect x="604.1" y="142.22" width="0.7" height="3.98" fill="#f0f000"/><rect x="604.6" y="143.99" width="0.7" height="2.48" fill="#f0f000"/><rect x="605.1" y="144.27" width="0.7" height="3.93" fill="#f0f000"/><rect x="605.6" y="145.47" width="0.7" height="2.73" fill="#f0f000"/><rect x="606.1" y="144.61" width="0.7" height="3.06" fill="#f0f000"/><rect x="606.6" y="144.61" width="0.7" height="5.79" fill="#f0f000"/><rect x="607.1" y="146.01" width="0.7" height="4.39" fill="#f0f000"/><rect x="607.6" y="146.01" width="0.7" height="2.3" fill="#f0f000"/><rect x="608.1" y="146.12" width="0.7" height="5.95" fill="#f0f000"/><rect x="608.6" y="146.25" width="0.7" height="5.81" fill="#f0f000"/><rect x="609.1" y="145.08" width="0.7" height="3.37" fill="#f0f000"/><rect x="609.6" y="145.08" width="0.7" height="2.89" fill="#f0f000"/><rect x="610.1" y="145.77" width="0.7" height="3.13" fill="#f0f000"/><rect x="610.6" y="141.94" width="0.7" height="6.97" fill="#f0f000"/><rect x="611.1" y="141.94" width="0.7" height="3.51" fill="#f0f000"/><rect x="611.6" y="143.25" width="0.7" height="4.21" fill="#f0f000"/><rect x="612.1" y="142.43" width="0.7" height="5.02" fill="#f0f000"/><rect x="612.6" y="142.43" width="0.7" height="3.42" fill="#f0f000"/><rect x="613.1" y="142.91" width="0.7" height="2.94" fill="#f0f000"/><rect x="613.6" y="142.37" width="0.7" height="2.74" fill="#f0f000"/><rect x="614.1" y="141.18" width="0.7" height="3.38" fill="#f0f000"/><rect x="614.6" y="139.94" width="0.7" height="3.44" fill="#f0f000"/><rect x="615.1" y="139.94" width="0.7" height="4.08" fill="#f0f000"/><rect x="615.6" y="139.67" width="0.7" height="4.35" fill="#f0f000"/><rect x="616.1" y="139.67" width="0.7" height="5.63" fill="#f0f000"/><rect x="616.6" y="139.53" width="0.7" height="5.77" fill="#f0f000"/><rect x="617.1" y="139.53" width="0.7" height="2.92" fill="#f0f000"/><rect x="617.6" y="139.9" width="0.7" height="2.55" fill="#f0f000"/><rect x="618.1" y="139.9" width="0.7" height="2.87" fill="#f0f000"/><rect x="618.6" y="139.17" width="0.7" height="3.6" fill="#f0f000"/><rect x="619.1" y="139.17" width="0.7" height="3.09" fill="#f0f000"/><rect x="619.6" y="140.04" width="0.7" height="2.22" fill="#f0f000"/><rect x="620.1" y="137.7" width="0.7" height="4.53" fill="#f0f000"/><rect x="620.6" y="137.7" width="0.7" height="3.05" fill="#f0f000"/><rect x="621.1" y="137.28" width="0.7" height="3.47" fill="#f0f000"/><rect x="621.6" y="137.28" width="0.7" height="3.38" fill="#f0f000"/><rect x="622.1" y="137.89" width="0.7" height="2.77" fill="#f0f000"/><rect x="622.6" y="137.89" width="0.7" height="4.39" fill="#f0f000"/><rect x="623.1" y="138.24" width="0.7" height="4.05" fill="#f0f000"/><rect x="623.6" y="138.24" width="0.7" height="2.44" fill="#f0f000"/><rect x="624.1" y="138.47" width="0.7" height="3.63" fill="#f0f000"/><rect x="624.6" y="139.2" width="0.7" height="2.91" fill="#f0f000"/><rect x="625.1" y="139.15" width="0.7" height="2.25" fill="#f0f000"/><rect x="625.6" y="139.15" width="0.7" height="5.6" fill="#f0f000"/><rect x="626.1" y="142.54" width="0.7" height="2.6" fill="#f0f000"/><rect x="626.6" y="138.81" width="0.7" height="6.33" fill="#f0f000"/><rect x="627.1" y="138.81" width="0.7" height="6.28" fill="#f0f000"/><rect x="627.6" y="141" width="0.7" height="4.09" fill="#f0f000"/><rect x="628.1" y="141" width="0.7" height="5.73" fill="#f0f000"/><rect x="628.6" y="141.77" width="0.7" height="4.97" fill="#f0f000"/><rect x="629.1" y="141.77" width="0.7" height="5.83" fill="#f0f000"/><rect x="629.6" y="140.8" width="0.7" height="6.8" fill="#f0f000"/><rect x="630.1" y="140.8" width="0.7" height="7.02" fill="#f0f000"/><rect x="630.6" y="144.16" width="0.7" height="3.66" fill="#f0f000"/><rect x="631.1" y="142.96" width="0.7" height="3.4" fill="#f0f000"/><rect x="631.6" y="142.96" width="0.7" height="5.23" fill="#f0f000"/><rect x="632.1" y="145.99" width="0.7" height="3.2" fill="#f0f000"/><rect x="632.6" y="144.51" width="0.7" height="4.68" fill="#f0f000"/><rect x="633.1" y="144.51" width="0.7" height="3.41" fill="#f0f000"/><rect x="633.6" y="145.72" width="0.7" height="2.59" fill="#f0f000"/><rect x="634.1" y="146.11" width="0.7" height="3.56" fill="#f0f000"/><rect x="634.6" y="147.03" width="0.7" height="2.64" fill="#f0f000"/><rect x="635.1" y="145.16" width="0.7" height="4.07" fill="#f0f000"/><rect x="635.6" y="144.48" width="0.7" height="2.89" fill="#f0f000"/><rect x="636.1" y="143.14" width="0.7" height="3.54" fill="#f0f000"/><rect x="636.6" y="143.14" width="0.7" height="4.46" fill="#f0f000"/><rect x="637.1" y="143.39" width="0.7" height="4.21" fill="#f0f000"/><rect x="637.6" y="143.39" width="0.7" height="2.36" fill="#f0f000"/><rect x="638.1" y="143.55" width="0.7" height="3.1" fill="#f0f000"/><rect x="638.6" y="141.56" width="0.7" height="5.09" fill="#f0f000"/><rect x="639.1" y="141.56" width="0.7" height="2.8" fill="#f0f000"/><rect x="639.6" y="142.16" width="0.7" height="3.85" fill="#f0f000"/><rect x="640.1" y="140.83" width="0.7" height="5.18" fill="#f0f000"/><rect x="640.6" y="140.83" width="0.7" height="4.55" fill="#f0f000"/><rect x="641.1" y="142.91" width="0.7" height="2.47" fill="#f0f000"/><rect x="641.6" y="140.23" width="0.7" height="4.88" fill="#f0f000"/><rect x="642.1" y="140.23" width="0.7" height="2.54" fill="#f0f000"/><rect x="642.6" y="140.56" width="0.7" height="3.51" fill="#f0f000"/><rect x="643.1" y="141.64" width="0.7" height="2.43" fill="#f0f000"/><rect x="643.6" y="138.43" width="0.7" height="5.41" fill="#f0f000"/><rect x="644.1" y="138.23" width="0.7" height="2.4" fill="#f0f000"/><rect x="644.6" y="138.23" width="0.7" height="5.96" fill="#f0f000"/><rect x="645.1" y="135.73" width="0.7" height="8.46" fill="#f0f000"/><rect x="645.6" y="135.73" width="0.7" height="2.93" fill="#f0f000"/><rect x="646.1" y="136.47" width="0.7" height="4.98" fill="#f0f000"/><rect x="646.6" y="138.28" width="0.7" height="3.16" fill="#f0f000"/><rect x="647.1" y="138.12" width="0.7" height="2.37" fill="#f0f000"/><rect x="647.6" y="138.1" width="0.7" height="2.22" fill="#f0f000"/><rect x="648.1" y="138.1" width="0.7" height="2.76" fill="#f0f000"/><rect x="648.6" y="137.77" width="0.7" height="3.08" fill="#f0f000"/><rect x="649.1" y="137.77" width="0.7" height="3.29" fill="#f0f000"/><rect x="649.6" y="138.86" width="0.7" height="3.76" fill="#f0f000"/><rect x="650.1" y="140.43" width="0.7" height="2.75" fill="#f0f000"/><rect x="650.6" y="138.85" width="0.7" height="4.34" fill="#f0f000"/><rect x="651.1" y="138.85" width="0.7" height="4.69" fill="#f0f000"/><rect x="651.6" y="139.08" width="0.7" height="4.46" fill="#f0f000"/><rect x="652.1" y="139.08" width="0.7" height="2.73" fill="#f0f000"/><rect x="652.6" y="139.61" width="0.7" height="3.33" fill="#f0f000"/><rect x="653.1" y="140.74" width="0.7" height="2.96" fill="#f0f000"/><rect x="653.6" y="141.49" width="0.7" height="2.75" fill="#f0f000"/><rect x="654.1" y="142.05" width="0.7" height="5.96" fill="#f0f000"/><rect x="654.6" y="145.81" width="0.7" height="2.87" fill="#f0f000"/><rect x="655.1" y="143.84" width="0.7" height="4.83" fill="#f0f000"/><rect x="655.6" y="143.84" width="0.7" height="3.16" fill="#f0f000"/><rect x="656.1" y="142.09" width="0.7" height="4.91" fill="#f0f000"/><rect x="656.6" y="142.09" width="0.7" height="4.55" fill="#f0f000"/><rect x="657.1" y="144.44" width="0.7" height="4.67" fill="#f0f000"/><rect x="657.6" y="146.85" width="0.7" height="2.27" fill="#f0f000"/><rect x="658.1" y="145.53" width="0.7" height="3.52" fill="#f0f000"/><rect x="658.6" y="145.53" width="0.7" height="2.7" fill="#f0f000"/><rect x="659.1" y="143.95" width="0.7" height="4.28" fill="#f0f000"/><rect x="659.6" y="143.95" width="0.7" height="6.31" fill="#f0f000"/><rect x="660.1" y="145.41" width="0.7" height="4.84" fill="#f0f000"/><rect x="660.6" y="144.44" width="0.7" height="3.18" fill="#f0f000"/><rect x="661.1" y="144.44" width="0.7" height="2.34" fill="#f0f000"/><rect x="661.6" y="144.25" width="0.7" height="2.53" fill="#f0f000"/><rect x="662.1" y="143.37" width="0.7" height="3.08" fill="#f0f000"/><rect x="662.6" y="143.37" width="0.7" height="3.51" fill="#f0f000"/><rect x="663.1" y="144.67" width="0.7" height="2.91" fill="#f0f000"/><rect x="663.6" y="143.46" width="0.7" height="4.12" fill="#f0f000"/><rect x="664.1" y="143.46" width="0.7" height="3.5" fill="#f0f000"/><rect x="664.6" y="142.73" width="0.7" height="4.22" fill="#f0f000"/><rect x="665.1" y="142.72" width="0.7" height="2.21" fill="#f0f000"/><rect x="665.6" y="142.25" width="0.7" height="2.67" fill="#f0f000"/><rect x="666.1" y="142.25" width="0.7" height="3.34" fill="#f0f000"/><rect x="666.6" y="140.61" width="0.7" height="4.98" fill="#f0f000"/><rect x="667.1" y="139.85" width="0.7" height="2.96" fill="#f0f000"/><rect x="667.6" y="139.85" width="0.7" height="5.39" fill="#f0f000"/><rect x="668.1" y="141.69" width="0.7" height="3.55" fill="#f0f000"/><rect x="668.6" y="140.33" width="0.7" height="3.56" fill="#f0f000"/><rect x="669.1" y="140.33" width="0.7" height="4.25" fill="#f0f000"/><rect x="669.6" y="140.44" width="0.7" height="4.14" fill="#f0f000"/><rect x="670.1" y="140.42" width="0.7" height="2.22" fill="#f0f000"/><rect x="670.6" y="139.25" width="0.7" height="3.37" fill="#f0f000"/><rect x="671.1" y="139.02" width="0.7" height="2.43" fill="#f0f000"/><rect x="671.6" y="138.95" width="0.7" height="2.27" fill="#f0f000"/><rect x="672.1" y="138.95" width="0.7" height="3.55" fill="#f0f000"/><rect x="672.6" y="139.11" width="0.7" height="3.4" fill="#f0f000"/><rect x="673.1" y="139.11" width="0.7" height="3.46" fill="#f0f000"/><rect x="673.6" y="136.56" width="0.7" height="6.02" fill="#f0f000"/><rect x="674.1" y="136.56" width="0.7" height="2.94" fill="#f0f000"/><rect x="674.6" y="136.03" width="0.7" height="3.47" fill="#f0f000"/><rect x="675.1" y="136.03" width="0.7" height="4.93" fill="#f0f000"/><rect x="675.6" y="138.76" width="0.7" height="3.71" fill="#f0f000"/><rect x="676.1" y="139.78" width="0.7" height="2.69" fill="#f0f000"/><rect x="676.6" y="139.78" width="0.7" height="2.85" fill="#f0f000"/><rect x="677.1" y="140.43" width="0.7" height="2.67" fill="#f0f000"/><rect x="677.6" y="140.9" width="0.7" height="2.96" fill="#f0f000"/><rect x="678.1" y="141.62" width="0.7" height="2.24" fill="#f0f000"/><rect x="678.6" y="141.47" width="0.7" height="2.34" fill="#f0f000"/><rect x="679.1" y="141.08" width="0.7" height="2.6" fill="#f0f000"/><rect x="679.6" y="140.53" width="0.7" height="2.75" fill="#f0f000"/><rect x="680.1" y="140.53" width="0.7" height="4.34" fill="#f0f000"/><rect x="680.6" y="142.67" width="0.7" height="3.42" fill="#f0f000"/><rect x="681.1" y="143.11" width="0.7" height="2.99" fill="#f0f000"/><rect x="681.6" y="143.11" width="0.7" height="2.6" fill="#f0f000"/><rect x="682.1" y="143.51" width="0.7" height="3.28" fill="#f0f000"/><rect x="682.6" y="142.33" width="0.7" height="4.45" fill="#f0f000"/><rect x="683.1" y="142.33" width="0.7" height="5.57" fill="#f0f000"/><rect x="683.6" y="145.03" width="0.7" height="2.87" fill="#f0f000"/><rect x="684.1" y="145.03" width="0.7" height="3.39" fill="#f0f000"/><rect x="684.6" y="144.72" width="0.7" height="3.7" fill="#f0f000"/><rect x="685.1" y="144.72" width="0.7" height="3.78" fill="#f0f000"/><rect x="685.6" y="146.3" width="0.7" height="4.05" fill="#f0f000"/><rect x="686.1" y="145.56" width="0.7" height="4.79" fill="#f0f000"/><rect x="686.6" y="145.56" width="0.7" height="2.64" fill="#f0f000"/><rect x="687.1" y="146" width="0.7" height="3.59" fill="#f0f000"/><rect x="687.6" y="142.09" width="0.7" height="7.5" fill="#f0f000"/><rect x="688.1" y="142.09" width="0.7" height="4.36" fill="#f0f000"/><rect x="688.6" y="143.48" width="0.7" height="2.98" fill="#f0f000"/><rect x="689.1" y="142.12" width="0.7" height="3.56" fill="#f0f000"/><rect x="689.6" y="142.12" width="0.7" height="4.03" fill="#f0f000"/><rect x="690.1" y="143.79" width="0.7" height="2.36" fill="#f0f000"/><rect x="690.6" y="143.79" width="0.7" height="3.81" fill="#f0f000"/><rect x="691.1" y="141.33" width="0.7" height="6.27" fill="#f0f000"/><rect x="691.6" y="141.33" width="0.7" height="4.02" fill="#f0f000"/><rect x="692.1" y="142.09" width="0.7" height="3.26" fill="#f0f000"/><rect x="692.6" y="141.9" width="0.7" height="2.39" fill="#f0f000"/><rect x="693.1" y="141.9" width="0.7" height="3.7" fill="#f0f000"/><rect x="693.6" y="139.42" width="0.7" height="6.18" fill="#f0f000"/><rect x="694.1" y="139.42" width="0.7" height="5.17" fill="#f0f000"/><rect x="694.6" y="139.79" width="0.7" height="4.81" fill="#f0f000"/><rect x="695.1" y="139.53" width="0.7" height="2.46" fill="#f0f000"/><rect x="695.6" y="139.53" width="0.7" height="3.49" fill="#f0f000"/><rect x="696.1" y="140.39" width="0.7" height="2.63" fill="#f0f000"/><rect x="696.6" y="140.39" width="0.7" height="2.29" fill="#f0f000"/><rect x="697.1" y="138.13" width="0.7" height="4.56" fill="#f0f000"/><rect x="697.6" y="138.13" width="0.7" height="2.85" fill="#f0f000"/><rect x="698.1" y="138.08" width="0.7" height="2.89" fill="#f0f000"/><rect x="698.6" y="134.28" width="0.7" height="6.01" fill="#f0f000"/><rect x="699.1" y="134.28" width="0.7" height="6.6" fill="#f0f000"/><rect x="699.6" y="138.67" width="0.7" height="4.15" fill="#f0f000"/><rect x="700.1" y="136.89" width="0.7" height="5.94" fill="#f0f000"/><rect x="700.6" y="136.89" width="0.7" height="4.43" fill="#f0f000"/><rect x="701.1" y="137.76" width="0.7" height="3.56" fill="#f0f000"/><rect x="701.6" y="137.76" width="0.7" height="5.01" fill="#f0f000"/><rect x="702.1" y="138.59" width="0.7" height="4.18" fill="#f0f000"/><rect x="702.6" y="138.59" width="0.7" height="3.53" fill="#f0f000"/><rect x="703.1" y="139.53" width="0.7" height="2.6" fill="#f0f000"/><rect x="703.6" y="139.53" width="0.7" height="2.82" fill="#f0f000"/><rect x="704.1" y="140.15" width="0.7" height="2.59" fill="#f0f000"/><rect x="704.6" y="140.54" width="0.7" height="4.3" fill="#f0f000"/><rect x="705.1" y="142.63" width="0.7" height="2.51" fill="#f0f000"/><rect x="705.6" y="140.29" width="0.7" height="4.86" fill="#f0f000"/><rect x="706.1" y="140.29" width="0.7" height="3.26" fill="#f0f000"/><rect x="706.6" y="141.35" width="0.7" height="3.04" fill="#f0f000"/><rect x="707.1" y="142.19" width="0.7" height="3.15" fill="#f0f000"/><rect x="707.6" y="143.14" width="0.7" height="4.43" fill="#f0f000"/><rect x="708.1" y="142.71" width="0.7" height="4.86" fill="#f0f000"/><rect x="708.6" y="142.71" width="0.7" height="4.41" fill="#f0f000"/><rect x="709.1" y="144.11" width="0.7" height="3.01" fill="#f0f000"/><rect x="709.6" y="144.11" width="0.7" height="3.56" fill="#f0f000"/><rect x="710.1" y="145.12" width="0.7" height="2.55" fill="#f0f000"/><rect x="710.6" y="145.12" width="0.7" height="4.4" fill="#f0f000"/><rect x="711.1" y="146.57" width="0.7" height="2.96" fill="#f0f000"/><rect x="711.6" y="146" width="0.7" height="2.76" fill="#f0f000"/><rect x="712.1" y="145.36" width="0.7" height="2.85" fill="#f0f000"/><rect x="712.6" y="144.03" width="0.7" height="3.53" fill="#f0f000"/><rect x="713.1" y="144.03" width="0.7" height="2.4" fill="#f0f000"/><rect x="713.6" y="142.26" width="0.7" height="4.17" fill="#f0f000"/><rect x="714.1" y="142.26" width="0.7" height="3.43" fill="#f0f000"/><rect x="714.6" y="142.94" width="0.7" height="2.74" fill="#f0f000"/><rect x="715.1" y="142.94" width="0.7" height="3.91" fill="#f0f000"/><rect x="715.6" y="142.13" width="0.7" height="4.72" fill="#f0f000"/><rect x="716.1" y="142.13" width="0.7" height="5.54" fill="#f0f000"/><rect x="716.6" y="143.58" width="0.7" height="4.09" fill="#f0f000"/><rect x="717.1" y="141.18" width="0.7" height="4.6" fill="#f0f000"/><rect x="717.6" y="141.18" width="0.7" height="3.68" fill="#f0f000"/><rect x="718.1" y="141.71" width="0.7" height="3.16" fill="#f0f000"/><rect x="718.6" y="139.99" width="0.7" height="3.92" fill="#f0f000"/><rect x="719.1" y="139.99" width="0.7" height="5.55" fill="#f0f000"/><rect x="719.6" y="140.8" width="0.7" height="4.74" fill="#f0f000"/><rect x="720.1" y="140.8" width="0.7" height="3.51" fill="#f0f000"/><rect x="720.6" y="142.11" width="0.7" height="2.45" fill="#f0f000"/><rect x="721.1" y="140.51" width="0.7" height="4.05" fill="#f0f000"/><rect x="721.6" y="140.12" width="0.7" height="2.59" fill="#f0f000"/><rect x="722.1" y="139.25" width="0.7" height="3.07" fill="#f0f000"/><rect x="722.6" y="138" width="0.7" height="3.45" fill="#f0f000"/><rect x="723.1" y="138" width="0.7" height="3.03" fill="#f0f000"/><rect x="723.6" y="137.95" width="0.7" height="3.08" fill="#f0f000"/><rect x="724.1" y="137.95" width="0.7" height="2.32" fill="#f0f000"/><rect x="724.6" y="138.07" width="0.7" height="4.21" fill="#f0f000"/><rect x="725.1" y="138.75" width="0.7" height="3.53" fill="#f0f000"/><rect x="725.6" y="138.75" width="0.7" height="3.78" fill="#f0f000"/><rect x="726.1" y="138.67" width="0.7" height="3.86" fill="#f0f000"/><rect x="726.6" y="138.67" width="0.7" height="2.93" fill="#f0f000"/><rect x="727.1" y="137.82" width="0.7" height="3.78" fill="#f0f000"/><rect x="727.6" y="137.82" width="0.7" height="2.37" fill="#f0f000"/><rect x="728.1" y="137.99" width="0.7" height="5.33" fill="#f0f000"/><rect x="728.6" y="141.12" width="0.7" height="2.89" fill="#f0f000"/><rect x="729.1" y="141.81" width="0.7" height="2.27" fill="#f0f000"/><rect x="729.6" y="140.24" width="0.7" height="3.84" fill="#f0f000"/><rect x="730.1" y="140.24" width="0.7" height="3.38" fill="#f0f000"/><rect x="730.6" y="140.02" width="0.7" height="3.59" fill="#f0f000"/><rect x="731.1" y="140.02" width="0.7" height="3.68" fill="#f0f000"/><rect x="731.6" y="141.51" width="0.7" height="4.42" fill="#f0f000"/><rect x="732.1" y="143.72" width="0.7" height="2.68" fill="#f0f000"/><rect x="732.6" y="143.2" width="0.7" height="3.21" fill="#f0f000"/><rect x="733.1" y="143.2" width="0.7" height="2.71" fill="#f0f000"/><rect x="733.6" y="142.71" width="0.7" height="3.2" fill="#f0f000"/><rect x="734.1" y="142.71" width="0.7" height="4.32" fill="#f0f000"/><rect x="734.6" y="144.4" width="0.7" height="2.63" fill="#f0f000"/><rect x="735.1" y="144.4" width="0.7" height="2.81" fill="#f0f000"/><rect x="735.6" y="145.01" width="0.7" height="4.45" fill="#f0f000"/><rect x="736.1" y="143.53" width="0.7" height="5.92" fill="#f0f000"/><rect x="736.6" y="143.53" width="0.7" height="3.94" fill="#f0f000"/><rect x="737.1" y="145.28" width="0.7" height="5.27" fill="#f0f000"/><rect x="737.6" y="145.99" width="0.7" height="4.55" fill="#f0f000"/><rect x="738.1" y="145.99" width="0.7" height="3.84" fill="#f0f000"/><rect x="738.6" y="146.17" width="0.7" height="3.67" fill="#f0f000"/><rect x="739.1" y="144.78" width="0.7" height="3.59" fill="#f0f000"/><rect x="739.6" y="144.5" width="0.7" height="2.48" fill="#f0f000"/><rect x="740.1" y="144.5" width="0.7" height="2.9" fill="#f0f000"/><rect x="740.6" y="143.42" width="0.7" height="3.98" fill="#f0f000"/><rect x="741.1" y="140.74" width="0.7" height="4.88" fill="#f0f000"/><rect x="741.6" y="140.74" width="0.7" height="5.1" fill="#f0f000"/><rect x="742.1" y="142.9" width="0.7" height="2.94" fill="#f0f000"/><rect x="742.6" y="142.9" width="0.7" height="2.65" fill="#f0f000"/><rect x="743.1" y="143.25" width="0.7" height="2.3" fill="#f0f000"/><rect x="743.6" y="143.25" width="0.7" height="3.45" fill="#f0f000"/><rect x="744.1" y="142.88" width="0.7" height="3.82" fill="#f0f000"/><rect x="744.6" y="142.76" width="0.7" height="2.32" fill="#f0f000"/><rect x="745.1" y="141.88" width="0.7" height="3.08" fill="#f0f000"/><rect x="745.6" y="141.88" width="0.7" height="3.02" fill="#f0f000"/><rect x="746.1" y="142.71" width="0.7" height="3.05" fill="#f0f000"/><rect x="746.6" y="143.19" width="0.7" height="2.57" fill="#f0f000"/><rect x="747.1" y="141.03" width="0.7" height="4.36" fill="#f0f000"/><rect x="747.6" y="139.89" width="0.7" height="3.33" fill="#f0f000"/><rect x="748.1" y="139.89" width="0.7" height="3.28" fill="#f0f000"/><rect x="748.6" y="140.98" width="0.7" height="2.2" fill="#f0f000"/><rect x="749.1" y="140.98" width="0.7" height="2.84" fill="#f0f000"/><rect x="749.6" y="138.76" width="0.7" height="5.05" fill="#f0f000"/><rect x="750.1" y="138.76" width="0.7" height="3.77" fill="#f0f000"/><rect x="750.6" y="140.33" width="0.7" height="2.44" fill="#f0f000"/><rect x="751.1" y="139.78" width="0.7" height="2.99" fill="#f0f000"/><rect x="751.6" y="138.41" width="0.7" height="3.57" fill="#f0f000"/><rect x="752.1" y="137.59" width="0.7" height="3.02" fill="#f0f000"/><rect x="752.6" y="136.68" width="0.7" height="3.11" fill="#f0f000"/><rect x="753.1" y="136.68" width="0.7" height="2.56" fill="#f0f000"/><rect x="753.6" y="137.04" width="0.7" height="2.53" fill="#f0f000"/><rect x="754.1" y="137.37" width="0.7" height="4.39" fill="#f0f000"/><rect x="754.6" y="139.56" width="0.7" height="2.93" fill="#f0f000"/><rect x="755.1" y="139.92" width="0.7" height="2.57" fill="#f0f000"/><rect x="755.6" y="139.92" width="0.7" height="3.3" fill="#f0f000"/><rect x="756.1" y="141.03" width="0.7" height="2.29" fill="#f0f000"/><rect x="756.6" y="141.12" width="0.7" height="2.73" fill="#f0f000"/><rect x="757.1" y="140.81" width="0.7" height="3.04" fill="#f0f000"/><rect x="757.6" y="140.81" width="0.7" height="5.32" fill="#f0f000"/><rect x="758.1" y="143.29" width="0.7" height="2.84" fill="#f0f000"/><rect x="758.6" y="143.29" width="0.7" height="3.17" fill="#f0f000"/><rect x="759.1" y="144.08" width="0.7" height="2.38" fill="#f0f000"/><rect x="759.6" y="144.08" width="0.7" height="2.48" fill="#f0f000"/><rect x="760.1" y="142.29" width="0.7" height="4.27" fill="#f0f000"/><rect x="760.6" y="142.29" width="0.7" height="6.96" fill="#f0f000"/><rect x="761.1" y="145.27" width="0.7" height="3.98" fill="#f0f000"/><rect x="761.6" y="145.27" width="0.7" height="3.03" fill="#f0f000"/><rect x="762.1" y="146.1" width="0.7" height="2.71" fill="#f0f000"/><rect x="762.6" y="145.4" width="0.7" height="3.41" fill="#f0f000"/><rect x="763.1" y="144.84" width="0.7" height="2.76" fill="#f0f000"/><rect x="763.6" y="144.84" width="0.7" height="3.88" fill="#f0f000"/><rect x="764.1" y="145.19" width="0.7" height="3.53" fill="#f0f000"/><rect x="764.6" y="145.19" width="0.7" height="2.24" fill="#f0f000"/><rect x="765.1" y="143.63" width="0.7" height="3.8" fill="#f0f000"/><rect x="765.6" y="142.17" width="0.7" height="3.65" fill="#f0f000"/><rect x="766.1" y="142.17" width="0.7" height="5.79" fill="#f0f000"/><rect x="766.6" y="145.76" width="0.7" height="2.9" fill="#f0f000"/><rect x="767.1" y="144.31" width="0.7" height="4.35" fill="#f0f000"/><rect x="767.6" y="141.79" width="0.7" height="4.73" fill="#f0f000"/><rect x="768.1" y="141.79" width="0.7" height="2.89" fill="#f0f000"/><rect x="768.6" y="141.82" width="0.7" height="2.85" fill="#f0f000"/><rect x="769.1" y="140.69" width="0.7" height="3.34" fill="#f0f000"/><rect x="769.6" y="140.48" width="0.7" height="2.41" fill="#f0f000"/><rect x="770.1" y="140.48" width="0.7" height="4.22" fill="#f0f000"/><rect x="770.6" y="140.29" width="0.7" height="4.42" fill="#f0f000"/><rect x="771.1" y="140.29" width="0.7" height="3.69" fill="#f0f000"/><rect x="771.6" y="141.19" width="0.7" height="2.78" fill="#f0f000"/><rect x="772.1" y="140.8" width="0.7" height="2.59" fill="#f0f000"/>
<text x="445.6" y="105.9" font-family="Liberation Sans" font-size="32.1" fill="#ffffff" stroke="#ffffff" stroke-width="0.3">Ripple in Hi-Res Mode</text>
<rect x="437" y="367" width="165" height="45" fill="#000"/>
<text x="445.5" y="402" font-family="Liberation Sans" font-size="33" font-weight="normal" fill="#f4f4f4" stroke="#f4f4f4" stroke-width="1.6" textLength="138.5" lengthAdjust="spacingAndGlyphs" filter="url(#glowtxt)">500MS/s</text>
<path d="M526.5 414.5 L577 456.5 M560 453.8 L579 458.5 L572.3 441" stroke="#b40606" stroke-width="4.7" stroke-linecap="round" stroke-linejoin="round" fill="none"/>
<rect x="26.5" y="459.4" width="187" height="30.8" rx="4" fill="none" stroke="#6a6a6a" stroke-width="1.2"/>
<rect x="405.2" y="459.4" width="123.8" height="17" rx="4" fill="none" stroke="#6a6a6a" stroke-width="1.2"/>
<rect x="531.8" y="459.2" width="153.6" height="60.6" rx="4" fill="none" stroke="#6a6a6a" stroke-width="1.2"/>
<rect x="31.9" y="464.4" width="21.85" height="7.5" rx="3.75" fill="#d8d800"/>
<text x="42.83" y="470.3" font-family="Liberation Sans" font-size="7" font-weight="bold" fill="#202000" text-anchor="middle">C1</text>
<rect x="31.9" y="478" width="21.85" height="7.6" rx="3.8" fill="#d8d800"/>
<text x="42.83" y="484" font-family="Liberation Sans" font-size="6.5" font-weight="bold" fill="#202000" text-anchor="middle">Z1C1</text>
<text x="56.5" y="470.6" font-family="Liberation Sans" font-size="8.2" font-weight="bold" fill="#f0f0f0" text-anchor="start">600mV/div</text>
<text x="133" y="470.6" font-family="Liberation Sans" font-size="8.2" font-weight="bold" fill="#f0f0f0" text-anchor="start">50Ω</text>
<rect x="154.2" y="463.2" width="36.8" height="9.8" fill="#fff"/>
<text x="155.8" y="468.2" font-family="Liberation Sans" font-size="5" font-weight="normal" fill="#000" text-anchor="start">B</text>
<text x="158.3" y="472.6" font-family="Liberation Sans" font-size="7.5" font-weight="normal" fill="#000" text-anchor="start">W</text>
<text x="164.5" y="471" font-family="Liberation Sans" font-size="9" font-weight="normal" fill="#000" text-anchor="start">:2.5G</text>
<text x="56.5" y="484.6" font-family="Liberation Sans" font-size="8.2" font-weight="bold" fill="#f0f0f0" text-anchor="start">120mV</text>
<text x="90" y="484.6" font-family="Liberation Sans" font-size="8.2" font-weight="bold" fill="#f0f0f0" text-anchor="start">500ns</text>
<text x="124" y="484.6" font-family="Liberation Sans" font-size="8.2" font-weight="bold" fill="#f0f0f0" text-anchor="start">-2.32µs</text>
<text x="156.3" y="484.6" font-family="Liberation Sans" font-size="8.2" font-weight="bold" fill="#f0f0f0" text-anchor="start">2.68µs</text>
<rect x="409" y="462.9" width="11" height="10.5" fill="#d0d0d0" stroke="#e08000" stroke-width="1.2"/>
<text x="414.5" y="471.5" font-family="Liberation Sans" font-size="8" font-weight="bold" fill="#000" text-anchor="middle">A'</text>
<rect x="421.3" y="464.6" width="21.3" height="7.9" rx="3.95" fill="#d8d800"/>
<text x="431.95" y="470.9" font-family="Liberation Sans" font-size="7" font-weight="bold" fill="#202000" text-anchor="middle">C1</text>
<path d="M445.5 472 L449 472 L452 463.5 L454.5 463.5" stroke="#f0f0f0" stroke-width="1.1" fill="none"/>
<text x="455.2" y="470.6" font-family="Liberation Sans" font-size="8.2" font-weight="bold" fill="#f0f0f0" text-anchor="start">2.58V</text>
<text x="536.4" y="470.3" font-family="Liberation Sans" font-size="8.2" font-weight="bold" fill="#f0f0f0" text-anchor="start">500ns/div</text>
<text x="580.5" y="470.3" font-family="Liberation Sans" font-size="8.2" font-weight="bold" fill="#f0f0f0" text-anchor="start">500MS/s</text>
<text x="636.3" y="470.3" font-family="Liberation Sans" font-size="8.2" font-weight="bold" fill="#f0f0f0" text-anchor="start">2.0ns/pt</text>
<text x="536.4" y="484.3" font-family="Liberation Sans" font-size="8.2" font-weight="bold" fill="#d80808" text-anchor="start">Stopped</text>
<text x="597.5" y="484.3" font-family="Liberation Sans" font-size="8.2" font-weight="bold" fill="#f0f0f0" text-anchor="start">Single Seq</text>
<text x="536.4" y="497.9" font-family="Liberation Sans" font-size="8.2" font-weight="bold" fill="#f0f0f0" text-anchor="start">1 acqs</text>
<text x="629.6" y="497.9" font-family="Liberation Sans" font-size="8.2" font-weight="bold" fill="#f0f0f0" text-anchor="start">RL:2.5k</text>
<text x="536.4" y="512.4" font-family="Liberation Sans" font-size="8.2" font-weight="bold" fill="#f0f0f0" text-anchor="start">Cons</text>
<text x="564.8" y="512.4" font-family="Liberation Sans" font-size="8.2" font-weight="bold" fill="#f0f0f0" text-anchor="start">November 23, 2011</text>
<text x="647.5" y="512.4" font-family="Liberation Sans" font-size="8.2" font-weight="bold" fill="#f0a000" text-anchor="start">22:24:24</text>
</svg></body></html>
